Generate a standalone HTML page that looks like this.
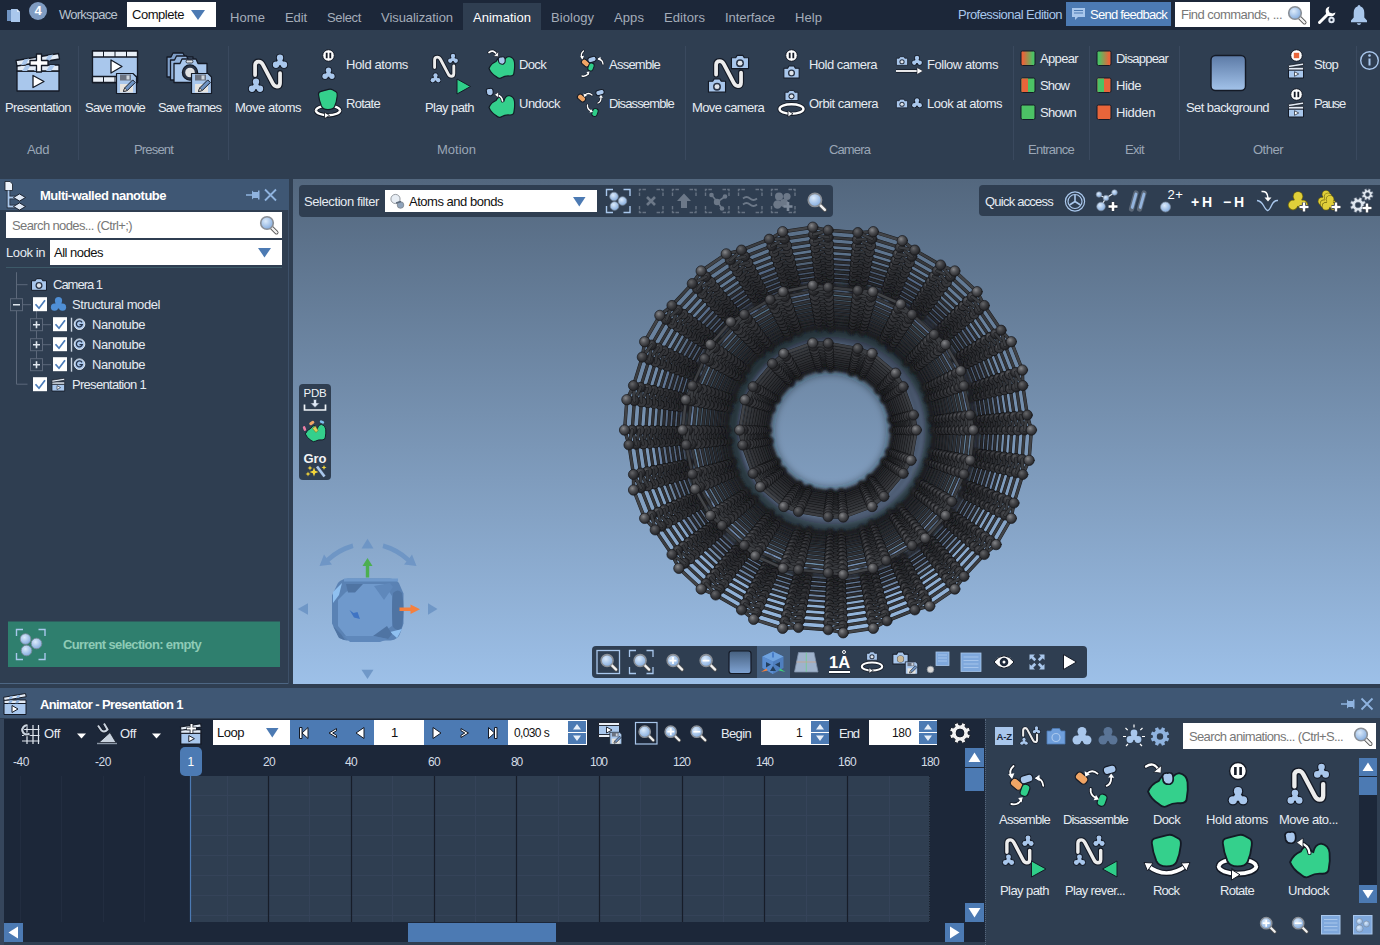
<!DOCTYPE html>
<html>
<head>
<meta charset="utf-8">
<title>SAMSON</title>
<style>
*{box-sizing:border-box;margin:0;padding:0}
html,body{width:1380px;height:945px;overflow:hidden;background:#2f3e51}
body{position:relative;font-family:"Liberation Sans",sans-serif;font-size:13px;color:#e6ebf1;line-height:1}
.a{position:absolute}
.t{position:absolute;white-space:nowrap;line-height:16px;height:16px}
.g{color:#9aa6b6}
.w{background:#fff}
.blk{color:#111}
svg{position:absolute;overflow:visible}
#top{left:0;top:0;width:1380px;height:30px;background:#1c2739}
#ribbon{left:0;top:30px;width:1380px;height:149px;background:#2f3e51}
.sep{position:absolute;width:1px;background:#3a495e;top:46px;height:114px}
#lp{left:0;top:179px;width:289px;height:505px;background:#2f3e51}
#lph{left:0;top:179px;width:289px;height:31px;background:#3f5774}
#vp{left:293px;top:179px;width:1087px;height:505px;background:linear-gradient(#53677e,#9dc0e8)}
.tb{position:absolute;background:#2f3e51;border-radius:4px}
#an{left:0;top:688px;width:1380px;height:257px;background:#2f3e51}
#anh{left:0;top:688px;width:1380px;height:30px;background:#3f5774}
#tl{left:4px;top:718px;width:982px;height:224px;background:#1c2739}
.bl{background:#4c7ab3}
</style>
</head>
<body>
<svg width="0" height="0" style="left:0;top:0">
<defs>
<radialGradient id="lens" cx="40%" cy="35%" r="70%"><stop offset="0" stop-color="#dcebfb"/><stop offset="1" stop-color="#7fa8dc"/></radialGradient>
<linearGradient id="og" x1="0" x2="1" y1="0" y2="0"><stop offset="0.15" stop-color="#e8653a"/><stop offset="0.85" stop-color="#4cc265"/></linearGradient>
<linearGradient id="go" x1="0" x2="1" y1="0" y2="0"><stop offset="0.15" stop-color="#4cc265"/><stop offset="0.85" stop-color="#e8653a"/></linearGradient>
<linearGradient id="bgg" x1="0" x2="0" y1="0" y2="1"><stop offset="0" stop-color="#5c7aa6"/><stop offset="1" stop-color="#a3c3ea"/></linearGradient>
<linearGradient id="bgg2" x1="0" x2="0" y1="0" y2="1"><stop offset="0" stop-color="#46607f"/><stop offset="1" stop-color="#7fa3d3"/></linearGradient>
<g id="mag"><path d="M12.500 12.500L17.500 17.500" stroke="#555" stroke-width="4" stroke-linecap="round"/><path d="M12.500 12.500L17.500 17.500" stroke="#f2f2f2" stroke-width="2.400" stroke-linecap="round"/><circle cx="8" cy="8" r="6.300" fill="url(#lens)" stroke="#8a8f96" stroke-width="1.600"/></g>
<!-- trefoil atoms, centred at 0,0, ~14px -->
<g id="tre"><g fill="#141a26"><circle cx="0" cy="-3.600" r="3.900"/><circle cx="-3.800" cy="3.100" r="3.900"/><circle cx="3.800" cy="3.100" r="3.900"/><circle cx="0" cy="0.900" r="4.300"/></g><g fill="#a9c7ec"><circle cx="0" cy="-3.600" r="3"/><circle cx="-3.800" cy="3.100" r="3"/><circle cx="3.800" cy="3.100" r="3"/><path d="M0 -5l4.800 8.500h-9.600z"/></g></g>
<!-- camera, centred at 0,0, 18x14 -->
<g id="cam"><path d="M-9 -4.500h4.500l1.500 -2.500h6l1.500 2.500H9v11.500h-18z" fill="#a9c7ec" stroke="#141a26" stroke-width="1.200" stroke-linejoin="round"/><circle cx="0" cy="1.200" r="4.200" fill="#2b3547"/><circle cx="0" cy="1.200" r="2.600" fill="#dfe4ea"/></g>
<!-- pause disc centred 0,0 r5.500 -->
<g id="pau"><circle r="5.800" fill="#fff" stroke="#141a26" stroke-width="1"/><path d="M-1.800 -2.800v5.600M1.800 -2.800v5.600" stroke="#141a26" stroke-width="1.800"/></g>
<!-- N path 26x28 origin top-left -->
<g id="np"><path id="npp" d="M2 15V5.500Q2 2 5.500 2Q8 2 9.500 5L19 23Q20.500 26 23 26Q26 26 26 22.500V13" fill="none" stroke="#141a26" stroke-width="5.800" stroke-linecap="round"/><path d="M2 15V5.500Q2 2 5.500 2Q8 2 9.500 5L19 23Q20.500 26 23 26Q26 26 26 22.500V13" fill="none" stroke="#ececec" stroke-width="3.600" stroke-linecap="round"/></g>
<!-- green rotate tooth centred 0,0 : 20w x 21h -->
<g id="tooth"><path d="M-9.500 -5.500Q-9.600 -8 -7 -8.600L0.500 -10.600Q2.800 -11.200 4.500 -10.200L8 -8.200Q9.600 -7.200 9.200 -4Q8.600 2 6.600 6.500Q5.400 9.600 0 9.600Q-5 9.600 -6.600 6Q-9 0 -9.500 -5.500z" fill="#34d08c" stroke="#141a26" stroke-width="1.200"/></g>
<!-- green blob 27x23 origin top-left -->
<g id="blob"><path d="M1 13Q3 8 8 6Q10 2 13 2.500Q14 6 16 6.500Q17 1.500 21 1Q26 2 26.500 7Q27 12 26 17Q26 20.500 22 20.500Q17 20 14 22Q11 24 8 21Q3 18 1 13z" fill="#34d08c" stroke="#141a26" stroke-width="1.200"/></g>
<g id="bb"><path d="M-3 -1.500Q-2.500 -3.500 0 -3.200Q3 -4 3.300 -1Q3.800 2.500 1.500 3.300Q-1.500 3.800 -2.500 1.500z" fill="#a9c7ec" stroke="#141a26" stroke-width="1"/></g>
<!-- small clapper 16x15 origin top-left -->
<g id="clap"><path d="M0.500 6.500h15v8h-15z" fill="#a9c7ec" stroke="#141a26" stroke-width="1"/><path d="M0.500 3.800h15v2.700h-15z" fill="#e4ecf6" stroke="#141a26" stroke-width="0.800"/><path d="M0.300 1.800L15.300 -0.600L15.700 1.800L0.700 4.200z" fill="#e4ecf6" stroke="#141a26" stroke-width="0.800"/><path d="M6.500 8.200l4.200 2.300l-4.200 2.300z" fill="#fff" stroke="#141a26" stroke-width="0.700"/></g>
<!-- floppy 21x21 origin top-left -->
<g id="flop"><path d="M0.500 0.500h16.500l3.500 3.500v16.500h-20z" fill="#a9c7ec" stroke="#141a26" stroke-width="1.200" stroke-linejoin="round"/><rect x="4" y="1.500" width="11" height="6" fill="#6b7280"/><rect x="10.500" y="2.500" width="3" height="4" fill="#cfd6de"/><rect x="4" y="11" width="13" height="8.500" fill="#e7e4df"/><path d="M7.500 18.500l1.200 -3.600l8 -8l2.600 2.600l-8 8z" fill="#6f93c2" stroke="#141a26" stroke-width="1"/><path d="M7.500 18.500l1.200 -3.600l2.500 2.500z" fill="#f1e6d6" stroke="#141a26" stroke-width="0.600"/></g>
<!-- white orbit ring centred 0,0 rx12 ry4.800 -->
<g id="ring"><ellipse rx="12" ry="4.800" fill="none" stroke="#141a26" stroke-width="4.200"/><ellipse rx="12" ry="4.800" fill="none" stroke="#fff" stroke-width="2.400"/><path d="M-3.500 1.600l5 3.200l-5 3.200z" fill="#fff" stroke="#141a26" stroke-width="0.800"/></g>
</defs>
</svg>
<!-- ===== top bar ===== -->
<div class="a" id="top"></div>
<svg style="left:6px;top:7px" width="16" height="16" viewBox="0 0 16 16"><path d="M1 3h4v11H1z" fill="#6f93c2"/><path d="M5 2h6l3 3v10H5z" fill="#a9c7ec"/><path d="M11 2v3h3z" fill="#dbe8f7"/></svg>
<div class="a" style="left:29px;top:2px;width:18px;height:18px;border-radius:9px;background:#7f9cc2"></div>
<span class="t" style="left:34.5px;top:3px;font-weight:bold;color:#fff;">4</span>
<span class="t" style="left:59px;top:7px;letter-spacing:-0.754px;color:#b9c3cf;">Workspace</span>
<div class="a w" style="left:127px;top:2px;width:89px;height:25px"></div>
<span class="t blk" style="left:132px;top:7px;letter-spacing:-0.454px;">Complete</span>
<svg style="left:191px;top:10px" width="14" height="10"><path d="M0 0h14L7 10z" fill="#4c7ab3"/></svg>
<div class="a" style="left:463px;top:3px;width:78px;height:27px;background:#2f3e51"></div>
<span class="t" style="left:230px;top:10px;letter-spacing:0.081px;color:#a4adb9;">Home</span>
<span class="t" style="left:285px;top:10px;letter-spacing:-0.100px;color:#a4adb9;">Edit</span>
<span class="t" style="left:327px;top:10px;letter-spacing:-0.355px;color:#a4adb9;">Select</span>
<span class="t" style="left:381px;top:10px;letter-spacing:-0.057px;color:#a4adb9;">Visualization</span>
<span class="t" style="left:473px;top:10px;letter-spacing:0.022px;color:#fff;">Animation</span>
<span class="t" style="left:551px;top:10px;letter-spacing:0.052px;color:#a4adb9;">Biology</span>
<span class="t" style="left:614px;top:10px;letter-spacing:0.093px;color:#a4adb9;">Apps</span>
<span class="t" style="left:664px;top:10px;letter-spacing:0.077px;color:#a4adb9;">Editors</span>
<span class="t" style="left:725px;top:10px;letter-spacing:-0.065px;color:#a4adb9;">Interface</span>
<span class="t" style="left:795px;top:10px;letter-spacing:0.066px;color:#a4adb9;">Help</span>
<span class="t" style="left:958px;top:7px;letter-spacing:-0.545px;color:#a9c7ec;">Professional Edition</span>
<div class="a bl" style="left:1066px;top:2px;width:105px;height:24px"></div>
<svg style="left:1072px;top:8px" width="14" height="13" viewBox="0 0 14 13"><path d="M0 0h13v9H6l-3 3V9H0z" fill="#a9c7ec"/><path d="M2 2.5h9M2 5h9" stroke="#4c7ab3" stroke-width="1"/></svg>
<span class="t" style="left:1090px;top:7px;letter-spacing:-0.749px;color:#fff;">Send feedback</span>
<div class="a w" style="left:1175px;top:2px;width:135px;height:25px"></div>
<span class="t" style="left:1181px;top:7px;letter-spacing:-0.530px;color:#777;">Find commands, ...</span>
<svg style="left:1287px;top:5px" width="20" height="20" viewBox="0 0 20 20"><use href="#mag"/></svg>
<svg style="left:1317px;top:5px" width="20" height="20" viewBox="0 0 20 20"><path d="M2.5 17.5L10 10" stroke="#fff" stroke-width="3" stroke-linecap="round"/><path d="M12.5 1.5a5 5 0 1 0 6 6l-3 1-3-1-1-3z" fill="#fff"/><circle cx="14.5" cy="15" r="3.2" fill="#dfe7f2"/><circle cx="14.5" cy="15" r="1.2" fill="#1c2739"/></svg>
<svg style="left:1350px;top:4px" width="18" height="22" viewBox="0 0 18 22"><path d="M9 1q1.300 0 1.500 1.500q3.800 1.200 3.800 6.500v4.500l2.700 3v1.800h-16v-1.800l2.700 -3v-4.500q0 -5.300 3.800 -6.500q0.200 -1.500 1.500 -1.500z" fill="#a9c7ec"/><path d="M6.800 19.300a2.300 2.300 0 0 0 4.400 0z" fill="#a9c7ec"/></svg>
<!-- ===== ribbon ===== -->
<div class="a" id="ribbon"></div>
<div class="sep" style="left:78px"></div><div class="sep" style="left:228px"></div><div class="sep" style="left:685px"></div><div class="sep" style="left:1013px"></div><div class="sep" style="left:1089px"></div><div class="sep" style="left:1179px"></div><div class="sep" style="left:1356px"></div>
<svg style="left:0;top:0" width="1380" height="180" viewBox="0 0 1380 180">
<!-- Presentation -->
<g stroke="#141a26" stroke-width="1.300" stroke-linejoin="round">
<path d="M17 71h42v20H17z" fill="#a9c7ec"/>
<path d="M17 65h42v6H17z" fill="#e4ecf6"/><path d="M22 71l4-6h5l-4 6zM34 71l4-6h5l-4 6zM46 71l4-6h5l-4 6z" fill="#a9c7ec" stroke="none"/>
<path d="M16 60.500L58.500 53.500L59.500 59L17 66z" fill="#e4ecf6"/><path d="M21 65.200l3-5.800l5-0.800l-3 5.800zM33 63.200l3-5.800l5-0.800l-3 5.800zM45 61.200l3-5.800l5-0.800l-3 5.800z" fill="#a9c7ec" stroke="none"/>
<path d="M33 75.500l11 6l-11 6z" fill="#fff"/>
<path d="M36.500 54h5v6.500H48v5h-6.500V72h-5v-6.500H30v-5h6.500z" fill="#fff"/>
</g>
<!-- Save movie -->
<g stroke="#141a26" stroke-width="1.300" stroke-linejoin="round">
<path d="M92.500 51h45v31.500h-45z" fill="#a9c7ec"/>
<path d="M92.500 51h45v6h-45zM92.500 76.500h45v6h-45z" fill="#e9eff7"/>
<path d="M103.500 51v6M115 51v6M126.500 51v6M103.500 76.500v6M115 76.500v6" stroke-width="1"/>
<path d="M111 60l11 6.500l-11 6.500z" fill="#fff"/>
</g>
<use href="#flop" x="116" y="73"/>
<!-- Save frames -->
<g stroke="#141a26" stroke-width="1.300" stroke-linejoin="round">
<path d="M167 57h4l2-4h10l2 4h8v20h-26z" fill="#7f9fc9"/>
<path d="M170.500 60h4l2-4h10l2 4h8v20h-26z" fill="#93b3dc"/>
<path d="M174 63.500h6l2-4.500h14l2 4.500h9v19h-33z" fill="#a9c7ec"/>
<rect x="186" y="60" width="7" height="3" rx="1.500" fill="#dfe4ea" stroke-width="0.800"/>
<circle cx="190" cy="72.500" r="7.600" fill="#2b3547"/><circle cx="190" cy="72.500" r="4.800" fill="#dfe0e2" stroke="none"/>
</g>
<use href="#flop" x="191" y="73"/>
<!-- Move atoms -->
<use href="#np" transform="translate(253,59.500) scale(1.04)"/>
<use href="#tre" transform="translate(280,61.500) scale(1.050)"/>
<use href="#tre" transform="translate(256,85.500) scale(1.050)"/>
<!-- Hold atoms -->
<use href="#pau" transform="translate(328.500,55.500)"/>
<use href="#tre" transform="translate(328.500,73.500) scale(0.900)"/>
<!-- Rotate -->
<use href="#ring" transform="translate(328,110.500)"/>
<use href="#tooth" transform="translate(328,100)"/>
<path d="M316 110.500a12 4.800 0 0 0 24 0" fill="none" stroke="#141a26" stroke-width="4.200"/><path d="M315.800 110.300a12 4.800 0 0 0 24.400 0" fill="none" stroke="#fff" stroke-width="2.400"/><path d="M324.500 112.200l5 3.200l-5 3.200z" fill="#fff" stroke="#141a26" stroke-width="0.800"/>
<!-- Play path -->
<use href="#np" transform="translate(433,55.500) scale(0.800)"/>
<use href="#tre" transform="translate(453,58.500) scale(0.720)"/>
<use href="#tre" transform="translate(435.500,78) scale(0.720)"/>
<path d="M457 79l13.500 7.500l-13.500 7.500z" fill="#2fce89" stroke="#141a26" stroke-width="1"/>
<!-- Dock -->
<use href="#blob" x="488" y="55.500"/>
<use href="#bb" transform="translate(501.500,60.500) scale(1.100)"/>
<path d="M489 52.500q5-3.500 8 2.500" fill="none" stroke="#141a26" stroke-width="3.200" stroke-linecap="round"/><path d="M489 52.500q5-3.500 8 2.500" fill="none" stroke="#fff" stroke-width="1.700" stroke-linecap="round"/><path d="M493.500 56l4.800 0.800l0.300-5z" fill="#fff" stroke="#141a26" stroke-width="0.600"/>
<!-- Undock -->
<use href="#blob" x="488" y="94.500"/>
<use href="#bb" transform="translate(489.500,92) scale(1.100)"/>
<path d="M502.500 101q-0.500-5-5.500-6" fill="none" stroke="#141a26" stroke-width="3.200" stroke-linecap="round"/><path d="M502.500 101q-0.500-5-5.500-6" fill="none" stroke="#fff" stroke-width="1.700" stroke-linecap="round"/><path d="M498.500 92l-4 2.800l4 3z" fill="#fff" stroke="#141a26" stroke-width="0.600"/>
<!-- Assemble -->
<g stroke="#141a26" stroke-width="1">
<rect x="-4.300" y="-2.800" width="8.600" height="5.600" rx="2.400" fill="#f0a565" transform="translate(585.500,63) rotate(40)"/>
<rect x="-4.200" y="-2.600" width="8.400" height="5.200" rx="2.400" fill="#a9c7ec" transform="translate(592,59.500) rotate(-18)"/>
<rect x="-4" y="-2.700" width="8" height="5.400" rx="2.400" fill="#2fce89" transform="translate(591,67) rotate(-70)"/>
</g>
<g fill="none" stroke-linecap="round"><g stroke="#141a26" stroke-width="2.600"><path d="M583.500 51q-3.500 3-1.500 7"/><path d="M598.500 59q4 0.500 4.500 5"/><path d="M582 76q4 1 6.500-2.500"/></g><g stroke="#fff" stroke-width="1.300"><path d="M583.500 51q-3.500 3-1.500 7"/><path d="M598.500 59q4 0.500 4.500 5"/><path d="M582 76q4 1 6.500-2.500"/></g></g>
<g fill="#fff"><path d="M580 56.500l2.500 3l1.500-3.800z"/><path d="M600.500 56.800l-3 2.200l3.200 2z"/><path d="M586.500 72l3-0.500l-0.800 3.500z"/></g>
<!-- Disassemble -->
<g stroke="#141a26" stroke-width="1">
<rect x="-4.300" y="-2.800" width="8.600" height="5.600" rx="2.400" fill="#f0a565" transform="translate(581.500,98) rotate(40)"/>
<rect x="-4.200" y="-2.600" width="8.400" height="5.200" rx="2.400" fill="#a9c7ec" transform="translate(600,92.500) rotate(-15)"/>
<rect x="-4" y="-2.700" width="8" height="5.400" rx="2.400" fill="#2fce89" transform="translate(595,112.500) rotate(-70)"/>
</g>
<g fill="none" stroke-linecap="round"><g stroke="#141a26" stroke-width="2.600"><path d="M592 95q-3.500-3-7 0"/><path d="M598 103q3-1 3-5.500"/><path d="M587.500 105q-0.500 4 3.500 6"/></g><g stroke="#fff" stroke-width="1.300"><path d="M592 95q-3.500-3-7 0"/><path d="M598 103q3-1 3-5.500"/><path d="M587.500 105q-0.500 4 3.500 6"/></g></g>
<g fill="#fff"><path d="M583.500 93.500l0.500 3.500l3-1.500z"/><path d="M599 97.500l2-2.500l2 2.800z"/><path d="M589.500 112.500l3.500-0.500l-2-3z"/></g>
<!-- Move camera -->
<use href="#np" transform="translate(714,59) scale(1.04)"/>
<use href="#cam" transform="translate(740,62) scale(0.950)"/>
<use href="#cam" transform="translate(717,85.500) scale(0.950)"/>
<!-- Hold camera -->
<use href="#pau" transform="translate(791.500,55.500)"/>
<use href="#cam" transform="translate(791.500,72) scale(0.850)"/>
<!-- Orbit camera -->
<use href="#cam" transform="translate(791.500,95.500) scale(0.720)"/>
<use href="#ring" transform="translate(791.500,109)"/>
<!-- Follow atoms -->
<use href="#cam" transform="translate(902,61) scale(0.620)"/>
<use href="#tre" transform="translate(917,60.500) scale(0.720)"/>
<path d="M896 71h22" stroke="#141a26" stroke-width="3.400"/><path d="M896 71h22" stroke="#fff" stroke-width="1.800"/><path d="M917 67.500l6 3.500l-6 3.500z" fill="#fff" stroke="#141a26" stroke-width="0.600"/>
<!-- Look at atoms -->
<use href="#cam" transform="translate(902,103.500) scale(0.620)"/>
<use href="#tre" transform="translate(917,103) scale(0.720)"/>
<!-- Entrance / Exit -->
<g stroke="#141a26" stroke-width="1">
<rect x="1021" y="51" width="14" height="14.500" rx="1.500" fill="url(#og)"/>
<rect x="1021" y="78" width="14" height="14.500" rx="1.500" fill="#4cc265"/><path d="M1021.500 78.500h6.500v13.500h-6.500z" fill="#e8653a" stroke="none"/>
<rect x="1021" y="105" width="14" height="14.500" rx="1.500" fill="#4cc265"/>
<rect x="1097" y="51" width="14" height="14.500" rx="1.500" fill="url(#go)"/>
<rect x="1097" y="78" width="14" height="14.500" rx="1.500" fill="#e8653a"/><path d="M1097.500 78.500h6.500v13.500h-6.500z" fill="#4cc265" stroke="none"/>
<rect x="1097" y="105" width="14" height="14.500" rx="1.500" fill="#e8653a"/>
</g>
<!-- Set background -->
<rect x="1211" y="55.500" width="34.500" height="35" rx="4.500" fill="url(#bgg)" stroke="#141a26" stroke-width="1.400"/>
<!-- Stop / Pause -->
<circle cx="1296.500" cy="55.500" r="5.800" fill="#fff" stroke="#141a26"/><rect x="1293.800" y="52.800" width="5.400" height="5.400" fill="#e8653a"/>
<use href="#clap" x="1288" y="63.500"/>
<use href="#pau" transform="translate(1296.500,94.500)"/>
<use href="#clap" x="1288" y="102.500"/>
<!-- info -->
<circle cx="1369.500" cy="60.500" r="8.800" fill="none" stroke="#a9c7ec" stroke-width="1.400"/><path d="M1369.500 58.500v7" stroke="#a9c7ec" stroke-width="2"/><circle cx="1369.500" cy="55.500" r="1.300" fill="#a9c7ec"/>
</svg>
<span class="t" style="left:5px;top:100px;letter-spacing:-0.583px;">Presentation</span>
<span class="t" style="left:85px;top:100px;letter-spacing:-0.792px;">Save movie</span>
<span class="t" style="left:158px;top:100px;letter-spacing:-0.907px;">Save frames</span>
<span class="t" style="left:235px;top:100px;letter-spacing:-0.480px;">Move atoms</span>
<span class="t" style="left:346px;top:57px;letter-spacing:-0.375px;">Hold atoms</span>
<span class="t" style="left:346px;top:96px;letter-spacing:-0.717px;">Rotate</span>
<span class="t" style="left:425px;top:100px;letter-spacing:-0.578px;">Play path</span>
<span class="t" style="left:519px;top:57px;letter-spacing:-0.654px;">Dock</span>
<span class="t" style="left:519px;top:96px;letter-spacing:-0.513px;">Undock</span>
<span class="t" style="left:609px;top:57px;letter-spacing:-0.760px;">Assemble</span>
<span class="t" style="left:609px;top:96px;letter-spacing:-0.856px;">Disassemble</span>
<span class="t" style="left:692px;top:100px;letter-spacing:-0.614px;">Move camera</span>
<span class="t" style="left:809px;top:57px;letter-spacing:-0.518px;">Hold camera</span>
<span class="t" style="left:809px;top:96px;letter-spacing:-0.511px;">Orbit camera</span>
<span class="t" style="left:927px;top:57px;letter-spacing:-0.465px;">Follow atoms</span>
<span class="t" style="left:927px;top:96px;letter-spacing:-0.512px;">Look at atoms</span>
<span class="t" style="left:1040px;top:51px;letter-spacing:-0.653px;">Appear</span>
<span class="t" style="left:1040px;top:78px;letter-spacing:-0.879px;">Show</span>
<span class="t" style="left:1040px;top:105px;letter-spacing:-0.749px;">Shown</span>
<span class="t" style="left:1116px;top:51px;letter-spacing:-0.806px;">Disappear</span>
<span class="t" style="left:1116px;top:78px;letter-spacing:-0.434px;">Hide</span>
<span class="t" style="left:1116px;top:105px;letter-spacing:-0.366px;">Hidden</span>
<span class="t" style="left:1186px;top:100px;letter-spacing:-0.576px;">Set background</span>
<span class="t" style="left:1314px;top:57px;letter-spacing:-0.686px;">Stop</span>
<span class="t" style="left:1314px;top:96px;letter-spacing:-1.172px;">Pause</span>
<span class="t g" style="left:27px;top:142px;letter-spacing:-0.377px;">Add</span>
<span class="t g" style="left:134px;top:142px;letter-spacing:-0.829px;">Present</span>
<span class="t g" style="left:437px;top:142px;letter-spacing:-0.003px;">Motion</span>
<span class="t g" style="left:829px;top:142px;letter-spacing:-0.873px;">Camera</span>
<span class="t g" style="left:1028px;top:142px;letter-spacing:-0.754px;">Entrance</span>
<span class="t g" style="left:1125px;top:142px;letter-spacing:-0.668px;">Exit</span>
<span class="t g" style="left:1253px;top:142px;letter-spacing:-0.503px;">Other</span>
<!-- ===== left panel ===== -->
<div class="a" id="lp"></div>
<div class="a" id="lph"></div>
<div class="a" style="left:0;top:683px;width:289px;height:1px;background:#4d6683"></div>
<div class="a" style="left:289px;top:179px;width:4px;height:509px;background:#2f3e51"></div>
<div class="a" style="left:288px;top:210px;width:1px;height:474px;background:#3d5068"></div>
<span class="t" style="left:40px;top:188px;font-weight:bold;letter-spacing:-0.500px;color:#fff;">Multi-walled nanotube</span>
<div class="a w" style="left:6px;top:212px;width:276px;height:26px"></div>
<span class="t" style="left:12px;top:218px;letter-spacing:-0.615px;color:#777;">Search nodes... (Ctrl+;)</span>
<span class="t" style="left:6px;top:245px;letter-spacing:-0.417px;">Look in</span>
<div class="a w" style="left:50px;top:240px;width:232px;height:25px"></div>
<span class="t blk" style="left:54px;top:245px;letter-spacing:-0.497px;">All nodes</span>
<div class="a" style="left:6px;top:267px;width:276px;height:1px;background:#3d5a68"></div>
<svg style="left:0;top:0" width="293" height="690" viewBox="0 0 293 690">
<!-- header icon -->
<path d="M5 181.500h5l2.500 2.500v6.500H5z" fill="#eef3fa" stroke="#141a26" stroke-width="0.800"/>
<path d="M8.500 190.500v16h7M8.500 197.500h7" fill="none" stroke="#141a26" stroke-width="3.400"/><path d="M8.500 190.500v16h7M8.500 197.500h7" fill="none" stroke="#a9c7ec" stroke-width="2"/>
<path d="M13.500 197.500l6 -3.600l6 3.600l-6 3.600zM13.500 206.500l6 -3.600l6 3.600l-6 3.600z" fill="#dfe9f6" stroke="#141a26" stroke-width="0.900"/>
<!-- pin + close -->
<path d="M246 195h6" stroke="#8fb3df" stroke-width="1.500"/><path d="M252 190.500l1.500 1.500h4.500v-1.500h1.500v9h-1.500v-1.500h-4.500l-1.500 1.500z" fill="#8fb3df"/>
<path d="M265 189.500l11 11M276 189.500l-11 11" stroke="#8fb3df" stroke-width="1.800"/>
<use href="#mag" transform="translate(259,215) scale(1)"/>
<path d="M258 248h13l-6.500 9.500z" fill="#4c7ab3"/>
<g transform="translate(0,-0.8)"><!-- tree lines -->
<g stroke="#5c687a" stroke-width="1" fill="none"><path d="M16.500 273v112h11M16.500 285.500h11M22 305.500h9M36.500 311v54M43 325.500h8M43 345.500h8M43 365.500h8"/></g>
<g fill="#2f3e51" stroke="#5c687a" stroke-width="1"><rect x="10.500" y="299.500" width="12" height="12"/><rect x="30.500" y="319.500" width="12" height="12"/><rect x="30.500" y="339.500" width="12" height="12"/><rect x="30.500" y="359.500" width="12" height="12"/></g>
<g stroke="#dfe6ee" stroke-width="1.600"><path d="M13 305.500h7M33 325.500h7M36.500 322v7M33 345.500h7M36.500 342v7M33 365.500h7M36.500 362v7"/></g>
<!-- camera -->
<use href="#cam" transform="translate(39,285.300) scale(0.830)"/>
<!-- checkboxes -->
<g id="cbs"><g fill="#fff"><rect x="33" y="298" width="14" height="14"/><rect x="53" y="318" width="14" height="14"/><rect x="53" y="338" width="14" height="14"/><rect x="53" y="358" width="14" height="14"/><rect x="33" y="378" width="14" height="14"/></g>
<g fill="none" stroke="#4a7cba" stroke-width="1.700"><path d="M35.500 305l3.500 4l6-8"/><path d="M55.500 325l3.500 4l6-8"/><path d="M55.500 345l3.500 4l6-8"/><path d="M55.500 365l3.500 4l6-8"/><path d="M35.500 385l3.500 4l6-8"/></g></g>
<!-- structural model trefoil -->
<g fill="#4f8fd6"><circle cx="58.500" cy="301.500" r="3.600"/><circle cx="54.500" cy="308" r="3.600"/><circle cx="62.500" cy="308" r="3.600"/><circle cx="58.500" cy="306" r="3.400"/></g>
<!-- nanotube G icons -->
<g id="gi"><path d="M71.500 318.500v14" stroke="#c9d3df" stroke-width="1.400"/><circle cx="79.500" cy="325" r="5.300" fill="#a9c7ec" stroke="#dfe6ee" stroke-width="1"/><path d="M82 323.200a3 3 0 1 0 0.300 2.300h-2.800" fill="none" stroke="#24324a" stroke-width="1.300"/></g>
<use href="#gi" y="20"/><use href="#gi" y="40"/>
<use href="#clap" transform="translate(51.500,379.500) scale(0.850)"/>
</g><!-- selection box -->
<rect x="8" y="621.500" width="272" height="45.500" fill="#2f7f6e"/>
<g fill="none" stroke="#a9c7ec" stroke-width="1.400"><path d="M16.500 636v-6.500h6.500M38.500 629.500h6.500v6.500M45 653v6.500h-6.500M23 659.500h-6.500v-6.500"/></g>
<g stroke="#7d8a99" stroke-width="0.800"><circle cx="25.500" cy="639" r="5.300" fill="url(#lens)"/><circle cx="36.500" cy="643.500" r="5.300" fill="url(#lens)"/><circle cx="26.500" cy="650.500" r="5.300" fill="url(#lens)"/></g>
</svg>
<span class="t" style="left:53px;top:277px;letter-spacing:-1.010px;">Camera 1</span>
<span class="t" style="left:72px;top:297px;letter-spacing:-0.416px;">Structural model</span>
<span class="t" style="left:92px;top:317px;letter-spacing:-0.422px;">Nanotube</span>
<span class="t" style="left:92px;top:337px;letter-spacing:-0.422px;">Nanotube</span>
<span class="t" style="left:92px;top:357px;letter-spacing:-0.422px;">Nanotube</span>
<span class="t" style="left:72px;top:377px;letter-spacing:-0.702px;">Presentation 1</span>
<span class="t" style="left:63px;top:637px;font-weight:bold;letter-spacing:-0.631px;color:#8ecbb6;">Current selection: empty</span>
<!-- ===== viewport ===== -->
<div class="a" id="vp"></div>
<div class="a" style="left:293px;top:684px;width:1087px;height:4px;background:#2f3e51"></div>
<svg style="left:0;top:0" width="1380" height="945" viewBox="0 0 1380 945">
<defs><filter id="bl1" x="-5%" y="-5%" width="110%" height="110%"><feGaussianBlur stdDeviation="0.45"/></filter><filter id="bl2" x="-5%" y="-5%" width="110%" height="110%"><feGaussianBlur stdDeviation="1.1"/></filter><filter id="bl4" x="-10%" y="-10%" width="120%" height="120%"><feGaussianBlur stdDeviation="2.600"/></filter><filter id="bl3" x="-10%" y="-10%" width="120%" height="120%"><feGaussianBlur stdDeviation="4"/></filter>
<radialGradient id="s0" cx="38%" cy="34%" r="68%"><stop offset="0" stop-color="#86878a"/><stop offset="0.45" stop-color="#505155"/><stop offset="1" stop-color="#242528"/></radialGradient>
<radialGradient id="s1" cx="38%" cy="34%" r="68%"><stop offset="0" stop-color="#66676a"/><stop offset="0.45" stop-color="#404145"/><stop offset="1" stop-color="#1f2023"/></radialGradient>
<radialGradient id="s2" cx="38%" cy="34%" r="68%"><stop offset="0" stop-color="#4f5054"/><stop offset="0.45" stop-color="#36373b"/><stop offset="1" stop-color="#1b1c1f"/></radialGradient>
</defs>
<g filter="url(#bl3)" fill="none"><circle cx="830.5" cy="430.5" r="66" stroke="#161a22" stroke-opacity="0.6" stroke-width="16"/><circle cx="829.5" cy="430.0" r="118" stroke="#191c25" stroke-opacity="0.6" stroke-width="30"/><circle cx="829.0" cy="430.0" r="156" stroke="#1c2029" stroke-opacity="0.38" stroke-width="28"/></g>
<g filter="url(#bl4)" fill="none"><circle cx="830.5" cy="430.5" r="101" stroke="#14171e" stroke-opacity="0.72" stroke-width="15"/><circle cx="828.0" cy="430.0" r="90" stroke="#14171e" stroke-opacity="0.5" stroke-width="9"/></g>
<g filter="url(#bl2)" fill="none" stroke-linecap="round"><defs><path id="b23" d="M969.4 462.1L963.2 482.5M941.9 519.3L927.4 534.9M892.4 558.8L872.5 566.6M830.5 572.9L809.3 571.3M768.7 558.8L750.3 548.2M719.2 519.3L707.2 501.7M691.7 462.1L688.5 441.1M691.7 398.7L697.9 378.4M719.2 341.6L733.7 326M768.7 302.1L788.6 294.3M830.5 288L851.8 289.6M892.4 302.1L910.8 312.7M941.9 341.6L953.9 359.2M969.4 398.7L972.6 419.8M927.4 461.9L918.7 481.4M890.4 512.8L872 523.5M830.5 532.3L809.4 530.1M770.7 512.8L754.9 498.6M733.7 461.9L729.3 441.1M733.7 399L742.4 379.5M770.7 348.1L789.1 337.4M830.5 328.6L851.7 330.8M890.4 348.1L906.2 362.3M927.4 399L931.8 419.8M884.1 461.4L870.3 477.8M830.5 492.3L809.4 488.6M777 461.4L769.6 441.2M777 399.5L790.8 383.1M830.5 368.6L851.7 372.3M884.1 399.5L891.5 419.7"/></defs><use href="#b23" stroke="#101113" stroke-width="2.9"/><use href="#b23" stroke="#212226" stroke-width="2"/><defs><path id="a23" d="M969.4 462.1h0M963.2 482.5h0M941.9 519.3h0M927.4 534.9h0M892.4 558.8h0M872.5 566.6h0M830.5 572.9h0M809.3 571.3h0M768.7 558.8h0M750.3 548.2h0M719.2 519.3h0M707.2 501.7h0M691.7 462.1h0M688.5 441.1h0M691.7 398.7h0M697.9 378.4h0M719.2 341.6h0M733.7 326h0M768.7 302.1h0M788.6 294.3h0M830.5 288h0M851.8 289.6h0M892.4 302.1h0M910.8 312.7h0M941.9 341.6h0M953.9 359.2h0M969.4 398.7h0M972.6 419.8h0M927.4 461.9h0M918.7 481.4h0M890.4 512.8h0M872 523.5h0M830.5 532.3h0M809.4 530.1h0M770.7 512.8h0M754.9 498.6h0M733.7 461.9h0M729.3 441.1h0M733.7 399h0M742.4 379.5h0M770.7 348.1h0M789.1 337.4h0M830.5 328.6h0M851.7 330.8h0M890.4 348.1h0M906.2 362.3h0M927.4 399h0M931.8 419.8h0M884.1 461.4h0M870.3 477.8h0M830.5 492.3h0M809.4 488.6h0M777 461.4h0M769.6 441.2h0M777 399.5h0M790.8 383.1h0M830.5 368.6h0M851.7 372.3h0M884.1 399.5h0M891.5 419.7h0"/></defs><use href="#a23" stroke="#0f1012" stroke-width="8.3"/><use href="#a23" stroke="#232428" stroke-width="6.9"/><use href="#a23" stroke="#2e2f33" stroke-width="2.9" transform="translate(-1 -1.1)"/>
<defs><path id="b22" d="M878.5 390.2L884.1 399.5M861.8 376.2L851.7 372.3M819.6 368.7L830.5 368.6M799.1 376.2L790.8 383.1M771.6 409L777 399.5M767.8 430.4L769.6 441.2M782.5 470.7L777 461.4M799.1 484.7L809.4 488.6M841.3 492.1L830.5 492.3M861.8 484.7L870.3 477.8M889.3 451.9L884.1 461.4M893.1 430.4L891.5 419.7M924.7 388.5L927.4 399M913.9 369.8L906.2 362.3M882.1 341.1L890.4 348.1M862.4 332.3L851.7 330.8M819.7 327.8L830.5 328.6M798.6 332.3L789.1 337.4M761.4 353.8L770.7 348.1M747 369.8L742.4 379.5M729.5 409L733.7 399M727.3 430.4L729.3 441.1M736.2 472.4L733.7 461.9M747 491.1L754.9 498.6M778.9 519.8L770.7 512.8M798.6 528.6L809.4 530.1M841.3 533L830.5 532.3M862.4 528.6L872 523.5M899.5 507.1L890.4 512.8M913.9 491.1L918.7 481.4M931.4 451.9L927.4 461.9M933.6 430.4L931.8 419.8M968.4 387.9L969.4 398.7M960.5 367.8L953.9 359.2M936.3 332.3L941.9 341.6M920.5 317.6L910.8 312.7M883.2 296.1L892.4 302.1M862.6 289.7L851.8 289.6M819.7 286.5L830.5 288M798.4 289.7L788.6 294.3M758.3 305.4L768.7 302.1M740.5 317.6L733.7 326M711.2 349.1L719.2 341.6M700.4 367.8L697.9 378.4M687.7 408.9L691.7 398.7M686.1 430.4L688.5 441.1M692.5 473L691.7 462.1M700.4 493.1L707.2 501.7M724.7 528.6L719.2 519.3M740.5 543.3L750.3 548.2M777.7 564.8L768.7 558.8M798.4 571.2L809.3 571.3M841.3 574.4L830.5 572.9M862.6 571.2L872.5 566.6M902.6 555.4L892.4 558.8M920.5 543.3L927.4 534.9M949.7 511.7L941.9 519.3M960.5 493.1L963.2 482.5M973.2 451.9L969.4 462.1M974.8 430.4L972.6 419.8M974.8 430.4L973.2 451.9M960.5 493.1L949.7 511.7M920.5 543.3L902.6 555.4M862.6 571.2L841.3 574.4M798.4 571.2L777.7 564.8M740.5 543.3L724.7 528.6M700.4 493.1L692.5 473M686.1 430.4L687.7 408.9M700.4 367.8L711.2 349.1M740.5 317.6L758.3 305.4M798.4 289.7L819.7 286.5M862.6 289.7L883.2 296.1M920.5 317.6L936.3 332.3M960.5 367.8L968.4 387.9M933.6 430.4L931.4 451.9M913.9 491.1L899.5 507.1M862.4 528.6L841.3 533M798.6 528.6L778.9 519.8M747 491.1L736.2 472.4M727.3 430.4L729.5 409M747 369.8L761.4 353.8M798.6 332.3L819.7 327.8M862.4 332.3L882.1 341.1M913.9 369.8L924.7 388.5M893.1 430.4L889.3 451.9M861.8 484.7L841.3 492.1M799.1 484.7L782.5 470.7M767.8 430.4L771.6 409M799.1 376.2L819.6 368.7M861.8 376.2L878.5 390.2"/></defs><use href="#b22" stroke="#101113" stroke-width="2.9"/><use href="#b22" stroke="#222327" stroke-width="2"/><defs><path id="a22" d="M974.8 430.4h0M973.2 451.9h0M960.5 493.1h0M949.7 511.7h0M920.5 543.3h0M902.6 555.4h0M862.6 571.2h0M841.3 574.4h0M798.4 571.2h0M777.7 564.8h0M740.5 543.3h0M724.7 528.6h0M700.4 493.1h0M692.5 473h0M686.1 430.4h0M687.7 408.9h0M700.4 367.8h0M711.2 349.1h0M740.5 317.6h0M758.3 305.4h0M798.4 289.7h0M819.7 286.5h0M862.6 289.7h0M883.2 296.1h0M920.5 317.6h0M936.3 332.3h0M960.5 367.8h0M968.4 387.9h0M933.6 430.4h0M931.4 451.9h0M913.9 491.1h0M899.5 507.1h0M862.4 528.6h0M841.3 533h0M798.6 528.6h0M778.9 519.8h0M747 491.1h0M736.2 472.4h0M727.3 430.4h0M729.5 409h0M747 369.8h0M761.4 353.8h0M798.6 332.3h0M819.7 327.8h0M862.4 332.3h0M882.1 341.1h0M913.9 369.8h0M924.7 388.5h0M893.1 430.4h0M889.3 451.9h0M861.8 484.7h0M841.3 492.1h0M799.1 484.7h0M782.5 470.7h0M767.8 430.4h0M771.6 409h0M799.1 376.2h0M819.6 368.7h0M861.8 376.2h0M878.5 390.2h0"/></defs><use href="#a22" stroke="#0f1012" stroke-width="8.4"/><use href="#a22" stroke="#242529" stroke-width="7"/><use href="#a22" stroke="#2f3034" stroke-width="3" transform="translate(-1 -1.1)"/>
<defs><path id="b21" d="M892.9 419.4L893.1 430.4M885.4 398.7L878.5 390.2M852.1 370.8L861.8 376.2M830.4 366.9L819.6 368.7M789.6 381.8L799.1 376.2M775.4 398.7L771.6 409M767.9 441.4L767.8 430.4M775.4 462.2L782.5 470.7M808.7 490.1L799.1 484.7M830.4 493.9L841.3 492.1M871.2 479.1L861.8 484.7M885.4 462.2L889.3 451.9M934.4 419.5L933.6 430.4M929.8 398.1L924.7 388.5M908.1 360.5L913.9 369.8M891.8 345.8L882.1 341.1M852.1 328.1L862.4 332.3M830.4 325.9L819.7 327.8M787.9 334.9L798.6 332.3M768.9 345.8L761.4 353.8M739.8 378.1L747 369.8M730.9 398.1L729.5 409M726.4 441.4L727.3 430.4M730.9 462.7L736.2 472.4M752.7 500.4L747 491.1M768.9 515L778.9 519.8M808.6 532.7L798.6 528.6M830.4 535L841.3 533M872.9 525.9L862.4 528.6M891.8 515L899.5 507.1M920.9 482.7L913.9 491.1M929.8 462.7L931.4 451.9M976.2 419.5L974.8 430.4M973 397.9L968.4 387.9M957.1 357.3L960.5 367.8M944.7 339.2L936.3 332.3M912.8 309.6L920.5 317.6M893.9 298.6L883.2 296.1M852.2 285.8L862.6 289.7M830.4 284.2L819.7 286.5M787.3 290.7L798.4 289.7M766.9 298.6L758.3 305.4M730.9 323.2L740.5 317.6M716 339.2L711.2 349.1M694.2 377L700.4 367.8M687.8 397.9L687.7 408.9M684.5 441.4L686.1 430.4M687.8 463L692.5 473M703.7 503.6L700.4 493.1M716 521.6L724.7 528.6M748 551.3L740.5 543.3M766.9 562.2L777.7 564.8M808.6 575.1L798.4 571.2M830.4 576.7L841.3 574.4M873.5 570.2L862.6 571.2M893.9 562.2L902.6 555.4M929.9 537.6L920.5 543.3M944.7 521.6L949.7 511.7M966.5 483.9L960.5 493.1M973 463L973.2 451.9M973 463L966.5 483.9M944.7 521.6L929.9 537.6M893.9 562.2L873.5 570.2M830.4 576.7L808.6 575.1M766.9 562.2L748 551.3M716 521.6L703.7 503.6M687.8 463L684.5 441.4M687.8 397.9L694.2 377M716 339.2L730.9 323.2M766.9 298.6L787.3 290.7M830.4 284.2L852.2 285.8M893.9 298.6L912.8 309.6M944.7 339.2L957.1 357.3M973 397.9L976.2 419.5M929.8 462.7L920.9 482.7M891.8 515L872.9 525.9M830.4 535L808.6 532.7M768.9 515L752.7 500.4M730.9 462.7L726.4 441.4M730.9 398.1L739.8 378.1M768.9 345.8L787.9 334.9M830.4 325.9L852.1 328.1M891.8 345.8L908.1 360.5M929.8 398.1L934.4 419.5M885.4 462.2L871.2 479.1M830.4 493.9L808.7 490.1M775.4 462.2L767.9 441.4M775.4 398.7L789.6 381.8M830.4 366.9L852.1 370.8M885.4 398.7L892.9 419.4"/></defs><use href="#b21" stroke="#101114" stroke-width="3"/><use href="#b21" stroke="#222428" stroke-width="2.1"/><defs><path id="a21" d="M973 463h0M966.5 483.9h0M944.7 521.6h0M929.9 537.6h0M893.9 562.2h0M873.5 570.2h0M830.4 576.7h0M808.6 575.1h0M766.9 562.2h0M748 551.3h0M716 521.6h0M703.7 503.6h0M687.8 463h0M684.5 441.4h0M687.8 397.9h0M694.2 377h0M716 339.2h0M730.9 323.2h0M766.9 298.6h0M787.3 290.7h0M830.4 284.2h0M852.2 285.8h0M893.9 298.6h0M912.8 309.6h0M944.7 339.2h0M957.1 357.3h0M973 397.9h0M976.2 419.5h0M929.8 462.7h0M920.9 482.7h0M891.8 515h0M872.9 525.9h0M830.4 535h0M808.6 532.7h0M768.9 515h0M752.7 500.4h0M730.9 462.7h0M726.4 441.4h0M730.9 398.1h0M739.8 378.1h0M768.9 345.8h0M787.9 334.9h0M830.4 325.9h0M852.1 328.1h0M891.8 345.8h0M908.1 360.5h0M929.8 398.1h0M934.4 419.5h0M885.4 462.2h0M871.2 479.1h0M830.4 493.9h0M808.7 490.1h0M775.4 462.2h0M767.9 441.4h0M775.4 398.7h0M789.6 381.8h0M830.4 366.9h0M852.1 370.8h0M885.4 398.7h0M892.9 419.4h0"/></defs><use href="#a21" stroke="#0f1012" stroke-width="8.5"/><use href="#a21" stroke="#25262a" stroke-width="7.1"/><use href="#a21" stroke="#313236" stroke-width="3" transform="translate(-1 -1.1)"/>
<defs><path id="b20" d="M879.6 389L885.4 398.7M862.5 374.7L852.1 370.8M819.1 367L830.4 366.9M798.1 374.7L789.6 381.8M769.8 408.4L775.4 398.7M765.9 430.4L767.9 441.4M781 471.8L775.4 462.2M798.1 486.1L808.7 490.1M841.5 493.8L830.4 493.9M862.5 486.1L871.2 479.1M890.8 452.4L885.4 462.2M894.7 430.4L892.9 419.4M927.1 387.3L929.8 398.1M916 368.1L908.1 360.5M883.3 338.6L891.8 345.8M863.1 329.6L852.1 328.1M819.2 325L830.4 325.9M797.6 329.6L787.9 334.9M759.4 351.7L768.9 345.8M744.6 368.1L739.8 378.1M726.6 408.4L730.9 398.1M724.3 430.4L726.4 441.4M733.5 473.5L730.9 462.7M744.6 492.7L752.7 500.4M777.3 522.2L768.9 515M797.6 531.2L808.6 532.7M841.4 535.8L830.4 535M863.1 531.2L872.9 525.9M901.2 509.2L891.8 515M916 492.7L920.9 482.7M934 452.4L929.8 462.7M936.3 430.4L934.4 419.5M972 386.7L973 397.9M963.9 366.1L957.1 357.3M939 329.6L944.7 339.2M922.7 314.5L912.8 309.6M884.5 292.4L893.9 298.6M863.3 285.9L852.2 285.8M819.2 282.6L830.4 284.2M797.3 285.9L787.3 290.7M756.2 302L766.9 298.6M737.9 314.5L730.9 323.2M707.8 346.9L716 339.2M696.7 366.1L694.2 377M683.7 408.3L687.8 397.9M682.1 430.4L684.5 441.4M688.6 474.1L687.8 463M696.7 494.7L703.7 503.6M721.6 531.2L716 521.6M737.9 546.3L748 551.3M776.1 568.4L766.9 562.2M797.3 574.9L808.6 575.1M841.4 578.2L830.4 576.7M863.3 574.9L873.5 570.2M904.4 558.8L893.9 562.2M922.7 546.3L929.9 537.6M952.8 513.9L944.7 521.6M963.9 494.7L966.5 483.9M976.9 452.5L973 463M978.6 430.4L976.2 419.5M978.6 430.4L976.9 452.5M963.9 494.7L952.8 513.9M922.7 546.3L904.4 558.8M863.3 574.9L841.4 578.2M797.3 574.9L776.1 568.4M737.9 546.3L721.6 531.2M696.7 494.7L688.6 474.1M682.1 430.4L683.7 408.3M696.7 366.1L707.8 346.9M737.9 314.5L756.2 302M797.3 285.9L819.2 282.6M863.3 285.9L884.5 292.4M922.7 314.5L939 329.6M963.9 366.1L972 386.7M936.3 430.4L934 452.4M916 492.7L901.2 509.2M863.1 531.2L841.4 535.8M797.6 531.2L777.3 522.2M744.6 492.7L733.5 473.5M724.3 430.4L726.6 408.4M744.6 368.1L759.4 351.7M797.6 329.6L819.2 325M863.1 329.6L883.3 338.6M916 368.1L927.1 387.3M894.7 430.4L890.8 452.4M862.5 486.1L841.5 493.8M798.1 486.1L781 471.8M765.9 430.4L769.8 408.4M798.1 374.7L819.1 367M862.5 374.7L879.6 389"/></defs><use href="#b20" stroke="#111214" stroke-width="3"/><use href="#b20" stroke="#232428" stroke-width="2.1"/><defs><path id="a20" d="M978.6 430.4h0M976.9 452.5h0M963.9 494.7h0M952.8 513.9h0M922.7 546.3h0M904.4 558.8h0M863.3 574.9h0M841.4 578.2h0M797.3 574.9h0M776.1 568.4h0M737.9 546.3h0M721.6 531.2h0M696.7 494.7h0M688.6 474.1h0M682.1 430.4h0M683.7 408.3h0M696.7 366.1h0M707.8 346.9h0M737.9 314.5h0M756.2 302h0M797.3 285.9h0M819.2 282.6h0M863.3 285.9h0M884.5 292.4h0M922.7 314.5h0M939 329.6h0M963.9 366.1h0M972 386.7h0M936.3 430.4h0M934 452.4h0M916 492.7h0M901.2 509.2h0M863.1 531.2h0M841.4 535.8h0M797.6 531.2h0M777.3 522.2h0M744.6 492.7h0M733.5 473.5h0M724.3 430.4h0M726.6 408.4h0M744.6 368.1h0M759.4 351.7h0M797.6 329.6h0M819.2 325h0M863.1 329.6h0M883.3 338.6h0M916 368.1h0M927.1 387.3h0M894.7 430.4h0M890.8 452.4h0M862.5 486.1h0M841.5 493.8h0M798.1 486.1h0M781 471.8h0M765.9 430.4h0M769.8 408.4h0M798.1 374.7h0M819.1 367h0M862.5 374.7h0M879.6 389h0"/></defs><use href="#a20" stroke="#101113" stroke-width="8.6"/><use href="#a20" stroke="#25262a" stroke-width="7.2"/><use href="#a20" stroke="#323337" stroke-width="3" transform="translate(-1.1 -1.1)"/></g>
<g filter="url(#bl1)" fill="none" stroke-linecap="round"><defs><path id="b19" d="M894.5 419.1L894.7 430.4M886.7 397.8L879.6 389M852.5 369.1L862.5 374.7M830.2 365.1L819.1 367M788.3 380.4L798.1 374.7M773.7 397.8L769.8 408.4M766 441.7L765.9 430.4M773.7 463L781 471.8M807.9 491.7L798.1 486.1M830.2 495.6L841.5 493.8M872.2 480.4L862.5 486.1M886.7 463L890.8 452.4M937.1 419.2L936.3 430.4M932.4 397.2L927.1 387.3M910.1 358.5L916 368.1M893.4 343.5L883.3 338.6M852.6 325.3L863.1 329.6M830.2 323L819.2 325M786.5 332.2L797.6 329.6M767.1 343.5L759.4 351.7M737.2 376.7L744.6 368.1M728 397.2L726.6 408.4M723.4 441.6L724.3 430.4M728 463.6L733.5 473.5M750.4 502.3L744.6 492.7M767.1 517.3L777.3 522.2M807.9 535.5L797.6 531.2M830.2 537.8L841.4 535.8M873.9 528.5L863.1 531.2M893.4 517.3L901.2 509.2M923.3 484.1L916 492.7M932.4 463.6L934 452.4M980.1 419.2L978.6 430.4M976.7 396.9L972 386.7M960.4 355.2L963.9 366.1M947.7 336.7L939 329.6M914.9 306.2L922.7 314.5M895.4 295L884.5 292.4M852.6 281.8L863.3 285.9M830.2 280.1L819.2 282.6M785.9 286.8L797.3 285.9M765 295L756.2 302M728 320.2L737.9 314.5M712.7 336.7L707.8 346.9M690.3 375.5L696.7 366.1M683.7 396.9L683.7 408.3M680.4 441.6L682.1 430.4M683.7 463.8L688.6 474.1M700.1 505.5L696.7 494.7M712.7 524.1L721.6 531.2M745.6 554.6L737.9 546.3M765 565.8L776.1 568.4M807.8 579L797.3 574.9M830.2 580.7L841.4 578.2M874.5 574L863.3 574.9M895.4 565.8L904.4 558.8M932.4 540.6L922.7 546.3M947.7 524.1L952.8 513.9M970.1 485.3L963.9 494.7M976.7 463.8L976.9 452.5M976.7 463.8L970.1 485.3M947.7 524.1L932.4 540.6M895.4 565.8L874.5 574M830.2 580.7L807.8 579M765 565.8L745.6 554.6M712.7 524.1L700.1 505.5M683.7 463.8L680.4 441.6M683.7 396.9L690.3 375.5M712.7 336.7L728 320.2M765 295L785.9 286.8M830.2 280.1L852.6 281.8M895.4 295L914.9 306.2M947.7 336.7L960.4 355.2M976.7 396.9L980.1 419.2M932.4 463.6L923.3 484.1M893.4 517.3L873.9 528.5M830.2 537.8L807.9 535.5M767.1 517.3L750.4 502.3M728 463.6L723.4 441.6M728 397.2L737.2 376.7M767.1 343.5L786.5 332.2M830.2 323L852.6 325.3M893.4 343.5L910.1 358.5M932.4 397.2L937.1 419.2M886.7 463L872.2 480.4M830.2 495.6L807.9 491.7M773.7 463L766 441.7M773.7 397.8L788.3 380.4M830.2 365.1L852.5 369.1M886.7 397.8L894.5 419.1"/></defs><use href="#b19" stroke="#111214" stroke-width="3"/><use href="#b19" stroke="#242529" stroke-width="2.1"/><defs><path id="a19" d="M976.7 463.8h0M970.1 485.3h0M947.7 524.1h0M932.4 540.6h0M895.4 565.8h0M874.5 574h0M830.2 580.7h0M807.8 579h0M765 565.8h0M745.6 554.6h0M712.7 524.1h0M700.1 505.5h0M683.7 463.8h0M680.4 441.6h0M683.7 396.9h0M690.3 375.5h0M712.7 336.7h0M728 320.2h0M765 295h0M785.9 286.8h0M830.2 280.1h0M852.6 281.8h0M895.4 295h0M914.9 306.2h0M947.7 336.7h0M960.4 355.2h0M976.7 396.9h0M980.1 419.2h0M932.4 463.6h0M923.3 484.1h0M893.4 517.3h0M873.9 528.5h0M830.2 537.8h0M807.9 535.5h0M767.1 517.3h0M750.4 502.3h0M728 463.6h0M723.4 441.6h0M728 397.2h0M737.2 376.7h0M767.1 343.5h0M786.5 332.2h0M830.2 323h0M852.6 325.3h0M893.4 343.5h0M910.1 358.5h0M932.4 397.2h0M937.1 419.2h0M886.7 463h0M872.2 480.4h0M830.2 495.6h0M807.9 491.7h0M773.7 463h0M766 441.7h0M773.7 397.8h0M788.3 380.4h0M830.2 365.1h0M852.5 369.1h0M886.7 397.8h0M894.5 419.1h0"/></defs><use href="#a19" stroke="#101113" stroke-width="8.7"/><use href="#a19" stroke="#26272b" stroke-width="7.3"/><use href="#a19" stroke="#343539" stroke-width="3.1" transform="translate(-1.1 -1.2)"/>
<defs><path id="b18" d="M880.8 387.9L886.7 397.8M863.2 373.1L852.5 369.1M818.6 365.2L830.2 365.1M797.1 373.1L788.3 380.4M768 407.8L773.7 397.8M764 430.4L766 441.7M779.5 472.9L773.7 463M797.1 487.7L807.9 491.7M841.6 495.5L830.2 495.6M863.2 487.7L872.2 480.4M892.3 453L886.7 463M896.3 430.4L894.5 419.1M929.6 386.1L932.4 397.2M918.3 366.3L910.1 358.5M884.6 336L893.4 343.5M863.8 326.8L852.6 325.3M818.7 322L830.2 323M796.5 326.8L786.5 332.2M757.2 349.4L767.1 343.5M742 366.3L737.2 376.7M723.6 407.7L728 397.2M721.2 430.4L723.4 441.6M730.6 474.7L728 463.6M742 494.4L750.4 502.3M775.7 524.7L767.1 517.3M796.5 534L807.9 535.5M841.5 538.7L830.2 537.8M863.8 534L873.9 528.5M903 511.3L893.4 517.3M918.3 494.4L923.3 484.1M936.7 453L932.4 463.6M939.1 430.4L937.1 419.2M975.7 385.5L976.7 396.9M967.4 364.3L960.4 355.2M941.8 326.7L947.7 336.7M925.1 311.2L914.9 306.2M885.8 288.5L895.4 295M864 281.8L852.6 281.8M818.7 278.4L830.2 280.1M796.2 281.8L785.9 286.8M753.9 298.4L765 295M735.1 311.2L728 320.2M704.2 344.5L712.7 336.7M692.8 364.3L690.3 375.5M679.5 407.7L683.7 396.9M677.7 430.4L680.4 441.6M684.5 475.3L683.7 463.8M692.8 496.5L700.1 505.5M718.4 534L712.7 524.1M735.1 549.5L745.6 554.6M774.5 572.2L765 565.8M796.2 578.9L807.8 579M841.5 582.3L830.2 580.7M864 578.9L874.5 574M906.3 562.3L895.4 565.8M925.1 549.5L932.4 540.6M956 516.2L947.7 524.1M967.4 496.5L970.1 485.3M980.8 453.1L976.7 463.8M982.5 430.4L980.1 419.2M982.5 430.4L980.8 453.1M967.4 496.5L956 516.2M925.1 549.5L906.3 562.3M864 578.9L841.5 582.3M796.2 578.9L774.5 572.2M735.1 549.5L718.4 534M692.8 496.5L684.5 475.3M677.7 430.4L679.5 407.7M692.8 364.3L704.2 344.5M735.1 311.2L753.9 298.4M796.2 281.8L818.7 278.4M864 281.8L885.8 288.5M925.1 311.2L941.8 326.7M967.4 364.3L975.7 385.5M939.1 430.4L936.7 453M918.3 494.4L903 511.3M863.8 534L841.5 538.7M796.5 534L775.7 524.7M742 494.4L730.6 474.7M721.2 430.4L723.6 407.7M742 366.3L757.2 349.4M796.5 326.8L818.7 322M863.8 326.8L884.6 336M918.3 366.3L929.6 386.1M896.3 430.4L892.3 453M863.2 487.7L841.6 495.5M797.1 487.7L779.5 472.9M764 430.4L768 407.8M797.1 373.1L818.6 365.2M863.2 373.1L880.8 387.9"/></defs><use href="#b18" stroke="#111214" stroke-width="3"/><use href="#b18" stroke="#25262a" stroke-width="2.1"/><defs><path id="a18" d="M982.5 430.4h0M980.8 453.1h0M967.4 496.5h0M956 516.2h0M925.1 549.5h0M906.3 562.3h0M864 578.9h0M841.5 582.3h0M796.2 578.9h0M774.5 572.2h0M735.1 549.5h0M718.4 534h0M692.8 496.5h0M684.5 475.3h0M677.7 430.4h0M679.5 407.7h0M692.8 364.3h0M704.2 344.5h0M735.1 311.2h0M753.9 298.4h0M796.2 281.8h0M818.7 278.4h0M864 281.8h0M885.8 288.5h0M925.1 311.2h0M941.8 326.7h0M967.4 364.3h0M975.7 385.5h0M939.1 430.4h0M936.7 453h0M918.3 494.4h0M903 511.3h0M863.8 534h0M841.5 538.7h0M796.5 534h0M775.7 524.7h0M742 494.4h0M730.6 474.7h0M721.2 430.4h0M723.6 407.7h0M742 366.3h0M757.2 349.4h0M796.5 326.8h0M818.7 322h0M863.8 326.8h0M884.6 336h0M918.3 366.3h0M929.6 386.1h0M896.3 430.4h0M892.3 453h0M863.2 487.7h0M841.6 495.5h0M797.1 487.7h0M779.5 472.9h0M764 430.4h0M768 407.8h0M797.1 373.1h0M818.6 365.2h0M863.2 373.1h0M880.8 387.9h0"/></defs><use href="#a18" stroke="#101113" stroke-width="8.8"/><use href="#a18" stroke="#27282c" stroke-width="7.4"/><use href="#a18" stroke="#35363a" stroke-width="3.1" transform="translate(-1.1 -1.2)"/>
<defs><path id="b17" d="M896.1 418.7L896.3 430.4M888.1 396.8L880.8 387.9M853 367.3L863.2 373.1M830 363.3L818.6 365.2M786.9 379L797.1 373.1M771.9 396.8L768 407.8M764 442L764 430.4M771.9 463.9L779.5 472.9M807.1 493.4L797.1 487.7M830 497.4L841.6 495.5M873.2 481.8L863.2 487.7M888.1 463.9L892.3 453M939.9 418.8L939.1 430.4M935.1 396.2L929.6 386.1M912.1 356.4L918.3 366.3M895 341L884.6 336M853 322.3L863.8 326.8M830 319.9L818.7 322M785.1 329.4L796.5 326.8M765.1 341L757.2 349.4M734.4 375.1L742 366.3M725 396.2L723.6 407.7M720.2 441.9L721.2 430.4M725 464.5L730.6 474.7M747.9 504.3L742 494.4M765.1 519.7L775.7 524.7M807.1 538.4L796.5 534M830 540.8L841.5 538.7M875 531.3L863.8 534M895 519.7L903 511.3M925.7 485.6L918.3 494.4M935.1 464.5L936.7 453M984.1 418.8L982.5 430.4M980.7 396L975.7 385.5M963.9 353.1L967.4 364.3M950.9 334L941.8 326.7M917.1 302.7L925.1 311.2M897.1 291.1L885.8 288.5M853.1 277.6L864 281.8M830 275.8L818.7 278.4M784.5 282.7L796.2 281.8M763 291.1L753.9 298.4M724.9 317.1L735.1 311.2M709.2 334L704.2 344.5M686.2 373.9L692.8 364.3M679.4 396L679.5 407.7M675.9 441.9L677.7 430.4M679.4 464.7L684.5 475.3M696.2 507.6L692.8 496.5M709.2 526.7L718.4 534M743 558L735.1 549.5M763 569.6L774.5 572.2M807 583.2L796.2 578.9M830 584.9L841.5 582.3M875.6 578L864 578.9M897.1 569.6L906.3 562.3M935.2 543.6L925.1 549.5M950.9 526.7L956 516.2M973.9 486.8L967.4 496.5M980.7 464.7L980.8 453.1M980.7 464.7L973.9 486.8M950.9 526.7L935.2 543.6M897.1 569.6L875.6 578M830 584.9L807 583.2M763 569.6L743 558M709.2 526.7L696.2 507.6M679.4 464.7L675.9 441.9M679.4 396L686.2 373.9M709.2 334L724.9 317.1M763 291.1L784.5 282.7M830 275.8L853.1 277.6M897.1 291.1L917.1 302.7M950.9 334L963.9 353.1M980.7 396L984.1 418.8M935.1 464.5L925.7 485.6M895 519.7L875 531.3M830 540.8L807.1 538.4M765.1 519.7L747.9 504.3M725 464.5L720.2 441.9M725 396.2L734.4 375.1M765.1 341L785.1 329.4M830 319.9L853 322.3M895 341L912.1 356.4M935.1 396.2L939.9 418.8M888.1 463.9L873.2 481.8M830 497.4L807.1 493.4M771.9 463.9L764 442M771.9 396.8L786.9 379M830 363.3L853 367.3M888.1 396.8L896.1 418.7"/></defs><use href="#b17" stroke="#121315" stroke-width="3"/><use href="#b17" stroke="#26272b" stroke-width="2.1"/><defs><path id="a17" d="M980.7 464.7h0M973.9 486.8h0M950.9 526.7h0M935.2 543.6h0M897.1 569.6h0M875.6 578h0M830 584.9h0M807 583.2h0M763 569.6h0M743 558h0M709.2 526.7h0M696.2 507.6h0M679.4 464.7h0M675.9 441.9h0M679.4 396h0M686.2 373.9h0M709.2 334h0M724.9 317.1h0M763 291.1h0M784.5 282.7h0M830 275.8h0M853.1 277.6h0M897.1 291.1h0M917.1 302.7h0M950.9 334h0M963.9 353.1h0M980.7 396h0M984.1 418.8h0M935.1 464.5h0M925.7 485.6h0M895 519.7h0M875 531.3h0M830 540.8h0M807.1 538.4h0M765.1 519.7h0M747.9 504.3h0M725 464.5h0M720.2 441.9h0M725 396.2h0M734.4 375.1h0M765.1 341h0M785.1 329.4h0M830 319.9h0M853 322.3h0M895 341h0M912.1 356.4h0M935.1 396.2h0M939.9 418.8h0M888.1 463.9h0M873.2 481.8h0M830 497.4h0M807.1 493.4h0M771.9 463.9h0M764 442h0M771.9 396.8h0M786.9 379h0M830 363.3h0M853 367.3h0M888.1 396.8h0M896.1 418.7h0"/></defs><use href="#a17" stroke="#101113" stroke-width="8.9"/><use href="#a17" stroke="#28292d" stroke-width="7.5"/><use href="#a17" stroke="#37383c" stroke-width="3.2" transform="translate(-1.1 -1.2)"/>
<defs><path id="b16" d="M882.1 386.6L888.1 396.8M864 371.4L853 367.3M818.1 363.3L830 363.3M795.9 371.4L786.9 379M766 407.1L771.9 396.8M761.9 430.3L764 442M777.8 474.1L771.9 463.9M795.9 489.3L807.1 493.4M841.8 497.4L830 497.4M864 489.3L873.2 481.8M893.9 453.6L888.1 463.9M898 430.3L896.1 418.7M932.3 384.8L935.1 396.2M920.6 364.5L912.1 356.4M886 333.3L895 341M864.6 323.8L853 322.3M818.2 318.9L830 319.9M795.3 323.8L785.1 329.4M755 347.1L765.1 341M739.3 364.5L734.4 375.1M720.3 407L725 396.2M717.9 430.3L720.2 441.9M727.6 475.9L725 464.5M739.3 496.2L747.9 504.3M773.9 527.4L765.1 519.7M795.3 536.9L807.1 538.4M841.7 541.8L830 540.8M864.6 536.9L875 531.3M904.9 513.6L895 519.7M920.6 496.2L925.7 485.6M939.6 453.6L935.1 464.5M942 430.3L939.9 418.8M979.7 384.1L980.7 396M971.2 362.3L963.9 353.1M944.9 323.7L950.9 334M927.7 307.8L917.1 302.7M887.2 284.4L897.1 291.1M864.8 277.5L853.1 277.6M818.2 274L830 275.8M795.1 277.5L784.5 282.7M751.6 294.6L763 291.1M732.2 307.8L724.9 317.1M700.4 342L709.2 334M688.7 362.3L686.2 373.9M674.9 407L679.4 396M673.2 430.3L675.9 441.9M680.2 476.5L679.4 464.7M688.7 498.4L696.2 507.6M715 537L709.2 526.7M732.2 552.9L743 558M772.7 576.3L763 569.6M795.1 583.2L807 583.2M841.7 586.7L830 584.9M864.8 583.2L875.6 578M908.3 566.1L897.1 569.6M927.7 552.9L935.2 543.6M959.5 518.6L950.9 526.7M971.2 498.4L973.9 486.8M984.9 453.7L980.7 464.7M986.7 430.3L984.1 418.8M986.7 430.3L984.9 453.7M971.2 498.4L959.5 518.6M927.7 552.9L908.3 566.1M864.8 583.2L841.7 586.7M795.1 583.2L772.7 576.3M732.2 552.9L715 537M688.7 498.4L680.2 476.5M673.2 430.3L674.9 407M688.7 362.3L700.4 342M732.2 307.8L751.6 294.6M795.1 277.5L818.2 274M864.8 277.5L887.2 284.4M927.7 307.8L944.9 323.7M971.2 362.3L979.7 384.1M942 430.3L939.6 453.6M920.6 496.2L904.9 513.6M864.6 536.9L841.7 541.8M795.3 536.9L773.9 527.4M739.3 496.2L727.6 475.9M717.9 430.3L720.3 407M739.3 364.5L755 347.1M795.3 323.8L818.2 318.9M864.6 323.8L886 333.3M920.6 364.5L932.3 384.8M898 430.3L893.9 453.6M864 489.3L841.8 497.4M795.9 489.3L777.8 474.1M761.9 430.3L766 407.1M795.9 371.4L818.1 363.3M864 371.4L882.1 386.6"/></defs><use href="#b16" stroke="#121315" stroke-width="3"/><use href="#b16" stroke="#26282c" stroke-width="2.1"/><defs><path id="a16" d="M986.7 430.3h0M984.9 453.7h0M971.2 498.4h0M959.5 518.6h0M927.7 552.9h0M908.3 566.1h0M864.8 583.2h0M841.7 586.7h0M795.1 583.2h0M772.7 576.3h0M732.2 552.9h0M715 537h0M688.7 498.4h0M680.2 476.5h0M673.2 430.3h0M674.9 407h0M688.7 362.3h0M700.4 342h0M732.2 307.8h0M751.6 294.6h0M795.1 277.5h0M818.2 274h0M864.8 277.5h0M887.2 284.4h0M927.7 307.8h0M944.9 323.7h0M971.2 362.3h0M979.7 384.1h0M942 430.3h0M939.6 453.6h0M920.6 496.2h0M904.9 513.6h0M864.6 536.9h0M841.7 541.8h0M795.3 536.9h0M773.9 527.4h0M739.3 496.2h0M727.6 475.9h0M717.9 430.3h0M720.3 407h0M739.3 364.5h0M755 347.1h0M795.3 323.8h0M818.2 318.9h0M864.6 323.8h0M886 333.3h0M920.6 364.5h0M932.3 384.8h0M898 430.3h0M893.9 453.6h0M864 489.3h0M841.8 497.4h0M795.9 489.3h0M777.8 474.1h0M761.9 430.3h0M766 407.1h0M795.9 371.4h0M818.1 363.3h0M864 371.4h0M882.1 386.6h0"/></defs><use href="#a16" stroke="#101114" stroke-width="9"/><use href="#a16" stroke="#292a2e" stroke-width="7.6"/><use href="#a16" stroke="#38393d" stroke-width="3.2" transform="translate(-1.1 -1.2)"/>
<defs><path id="b15" d="M897.8 418.3L898 430.3M889.6 395.8L882.1 386.6M853.5 365.5L864 371.4M829.9 361.3L818.1 363.3M785.5 377.4L795.9 371.4M770.1 395.8L766 407.1M761.9 442.3L761.9 430.3M770.1 464.8L777.8 474.1M806.2 495.2L795.9 489.3M829.9 499.4L841.8 497.4M874.2 483.2L864 489.3M889.6 464.8L893.9 453.6M942.9 418.4L942 430.3M938 395.2L932.3 384.8M914.3 354.3L920.6 364.5M896.7 338.4L886 333.3M853.5 319.1L864.6 323.8M829.9 316.6L818.2 318.9M783.6 326.5L795.3 323.8M763 338.4L755 347.1M731.4 373.5L739.3 364.5M721.7 395.2L720.3 407M716.8 442.2L717.9 430.3M721.7 465.5L727.6 475.9M745.4 506.4L739.3 496.2M763 522.3L773.9 527.4M806.2 541.5L795.3 536.9M829.9 544L841.7 541.8M876.1 534.2L864.6 536.9M896.7 522.3L904.9 513.6M928.3 487.2L920.6 496.2M938 465.5L939.6 453.6M988.4 418.4L986.7 430.3M984.9 394.9L979.7 384.1M967.6 350.8L971.2 362.3M954.2 331.2L944.9 323.7M919.4 298.9L927.7 307.8M898.9 287L887.2 284.4M853.6 273.1L864.8 277.5M829.9 271.3L818.2 274M783 278.4L795.1 277.5M760.9 287L751.6 294.6M721.7 313.7L732.2 307.8M705.5 331.2L700.4 342M681.8 372.2L688.7 362.3M674.8 394.9L674.9 407M671.3 442.2L673.2 430.3M674.8 465.7L680.2 476.5M692.1 509.8L688.7 498.4M705.5 529.5L715 537M740.3 561.7L732.2 552.9M760.9 573.6L772.7 576.3M806.2 587.6L795.1 583.2M829.9 589.4L841.7 586.7M876.7 582.3L864.8 583.2M898.9 573.6L908.3 566.1M938 546.9L927.7 552.9M954.2 529.5L959.5 518.6M977.9 488.4L971.2 498.4M984.9 465.7L984.9 453.7M984.9 465.7L977.9 488.4M954.2 529.5L938 546.9M898.9 573.6L876.7 582.3M829.9 589.4L806.2 587.6M760.9 573.6L740.3 561.7M705.5 529.5L692.1 509.8M674.8 465.7L671.3 442.2M674.8 394.9L681.8 372.2M705.5 331.2L721.7 313.7M760.9 287L783 278.4M829.9 271.3L853.6 273.1M898.9 287L919.4 298.9M954.2 331.2L967.6 350.8M984.9 394.9L988.4 418.4M938 465.5L928.3 487.2M896.7 522.3L876.1 534.2M829.9 544L806.2 541.5M763 522.3L745.4 506.4M721.7 465.5L716.8 442.2M721.7 395.2L731.4 373.5M763 338.4L783.6 326.5M829.9 316.6L853.5 319.1M896.7 338.4L914.3 354.3M938 395.2L942.9 418.4M889.6 464.8L874.2 483.2M829.9 499.4L806.2 495.2M770.1 464.8L761.9 442.3M770.1 395.8L785.5 377.4M829.9 361.3L853.5 365.5M889.6 395.8L897.8 418.3"/></defs><use href="#b15" stroke="#121315" stroke-width="3.1"/><use href="#b15" stroke="#27292d" stroke-width="2.2"/><defs><path id="a15" d="M984.9 465.7h0M977.9 488.4h0M954.2 529.5h0M938 546.9h0M898.9 573.6h0M876.7 582.3h0M829.9 589.4h0M806.2 587.6h0M760.9 573.6h0M740.3 561.7h0M705.5 529.5h0M692.1 509.8h0M674.8 465.7h0M671.3 442.2h0M674.8 394.9h0M681.8 372.2h0M705.5 331.2h0M721.7 313.7h0M760.9 287h0M783 278.4h0M829.9 271.3h0M853.6 273.1h0M898.9 287h0M919.4 298.9h0M954.2 331.2h0M967.6 350.8h0M984.9 394.9h0M988.4 418.4h0M938 465.5h0M928.3 487.2h0M896.7 522.3h0M876.1 534.2h0M829.9 544h0M806.2 541.5h0M763 522.3h0M745.4 506.4h0M721.7 465.5h0M716.8 442.2h0M721.7 395.2h0M731.4 373.5h0M763 338.4h0M783.6 326.5h0M829.9 316.6h0M853.5 319.1h0M896.7 338.4h0M914.3 354.3h0M938 395.2h0M942.9 418.4h0M889.6 464.8h0M874.2 483.2h0M829.9 499.4h0M806.2 495.2h0M770.1 464.8h0M761.9 442.3h0M770.1 395.8h0M785.5 377.4h0M829.9 361.3h0M853.5 365.5h0M889.6 395.8h0M897.8 418.3h0"/></defs><use href="#a15" stroke="#111214" stroke-width="9.1"/><use href="#a15" stroke="#292a2e" stroke-width="7.7"/><use href="#a15" stroke="#3a3b3f" stroke-width="3.3" transform="translate(-1.1 -1.2)"/></g>
<g fill="none" stroke-linecap="round"><defs><path id="b14" d="M883.4 385.3L889.6 395.8M864.8 369.6L853.5 365.5M817.6 361.3L829.9 361.3M794.7 369.6L785.5 377.4M763.9 406.3L770.1 395.8M759.7 430.3L761.9 442.3M776.1 475.3L770.1 464.8M794.7 491L806.2 495.2M841.9 499.3L829.9 499.4M864.8 491L874.2 483.2M895.6 454.3L889.6 464.8M899.8 430.3L897.8 418.3M935.1 383.4L938 395.2M923.1 362.5L914.3 354.3M887.4 330.4L896.7 338.4M865.4 320.6L853.5 319.1M817.7 315.6L829.9 316.6M794.1 320.6L783.6 326.5M752.6 344.6L763 338.4M736.4 362.5L731.4 373.5M716.9 406.3L721.7 395.2M714.4 430.3L716.8 442.2M724.4 477.2L721.7 465.5M736.4 498.1L745.4 506.4M772.1 530.2L763 522.3M794.1 540L806.2 541.5M841.8 545L829.9 544M865.4 540L876.1 534.2M906.9 516L896.7 522.3M923.1 498.1L928.3 487.2M942.6 454.3L938 465.5M945.1 430.3L942.9 418.4M984 382.7L984.9 394.9M975.2 360.3L967.6 350.8M948.1 320.5L954.2 331.2M930.4 304.1L919.4 298.9M888.7 280.1L898.9 287M865.7 273L853.6 273.1M817.7 269.4L829.9 271.3M793.8 273L783 278.4M749.1 290.6L760.9 287M729.1 304.1L721.7 313.7M696.4 339.4L705.5 331.2M684.4 360.3L681.8 372.2M670.2 406.3L674.8 394.9M668.4 430.3L671.3 442.2M675.5 477.9L674.8 465.7M684.4 500.3L692.1 509.8M711.5 540.1L705.5 529.5M729.1 556.5L740.3 561.7M770.8 580.5L760.9 573.6M793.8 587.6L806.2 587.6M841.8 591.2L829.9 589.4M865.7 587.6L876.7 582.3M910.4 570.1L898.9 573.6M930.4 556.5L938 546.9M963.1 521.2L954.2 529.5M975.2 500.3L977.9 488.4M989.3 454.4L984.9 465.7M991.1 430.3L988.4 418.4M991.1 430.3L989.3 454.4M975.2 500.3L963.1 521.2M930.4 556.5L910.4 570.1M865.7 587.6L841.8 591.2M793.8 587.6L770.8 580.5M729.1 556.5L711.5 540.1M684.4 500.3L675.5 477.9M668.4 430.3L670.2 406.3M684.4 360.3L696.4 339.4M729.1 304.1L749.1 290.6M793.8 273L817.7 269.4M865.7 273L888.7 280.1M930.4 304.1L948.1 320.5M975.2 360.3L984 382.7M945.1 430.3L942.6 454.3M923.1 498.1L906.9 516M865.4 540L841.8 545M794.1 540L772.1 530.2M736.4 498.1L724.4 477.2M714.4 430.3L716.9 406.3M736.4 362.5L752.6 344.6M794.1 320.6L817.7 315.6M865.4 320.6L887.4 330.4M923.1 362.5L935.1 383.4M899.8 430.3L895.6 454.3M864.8 491L841.9 499.3M794.7 491L776.1 475.3M759.7 430.3L763.9 406.3M794.7 369.6L817.6 361.3M864.8 369.6L883.4 385.3"/></defs><use href="#b14" stroke="#121316" stroke-width="3.1"/><use href="#b14" stroke="#28292d" stroke-width="2.2"/><defs><path id="a14" d="M991.1 430.3h0M989.3 454.4h0M975.2 500.3h0M963.1 521.2h0M930.4 556.5h0M910.4 570.1h0M865.7 587.6h0M841.8 591.2h0M793.8 587.6h0M770.8 580.5h0M729.1 556.5h0M711.5 540.1h0M684.4 500.3h0M675.5 477.9h0M668.4 430.3h0M670.2 406.3h0M684.4 360.3h0M696.4 339.4h0M729.1 304.1h0M749.1 290.6h0M793.8 273h0M817.7 269.4h0M865.7 273h0M888.7 280.1h0M930.4 304.1h0M948.1 320.5h0M975.2 360.3h0M984 382.7h0M945.1 430.3h0M942.6 454.3h0M923.1 498.1h0M906.9 516h0M865.4 540h0M841.8 545h0M794.1 540h0M772.1 530.2h0M736.4 498.1h0M724.4 477.2h0M714.4 430.3h0M716.9 406.3h0M736.4 362.5h0M752.6 344.6h0M794.1 320.6h0M817.7 315.6h0M865.4 320.6h0M887.4 330.4h0M923.1 362.5h0M935.1 383.4h0M899.8 430.3h0M895.6 454.3h0M864.8 491h0M841.9 499.3h0M794.7 491h0M776.1 475.3h0M759.7 430.3h0M763.9 406.3h0M794.7 369.6h0M817.6 361.3h0M864.8 369.6h0M883.4 385.3h0"/></defs><use href="#a14" stroke="#111214" stroke-width="9.3"/><use href="#a14" stroke="#2a2b2f" stroke-width="7.9"/><use href="#a14" stroke="#3c3d41" stroke-width="3.3" transform="translate(-1.2 -1.2)"/>
<defs><path id="b13" d="M899.7 417.9L899.8 430.3M891.2 394.7L883.4 385.3M854 363.5L864.8 369.6M829.7 359.2L817.6 361.3M783.9 375.8L794.7 369.6M768.1 394.7L763.9 406.3M759.6 442.6L759.7 430.3M768.1 465.8L776.1 475.3M805.3 497.1L794.7 491M829.7 501.4L841.9 499.3M875.4 484.8L864.8 491M891.2 465.8L895.6 454.3M946.1 418.1L945.1 430.3M941 394.1L935.1 383.4M916.7 351.9L923.1 362.5M898.5 335.6L887.4 330.4M854 315.8L865.4 320.6M829.7 313.2L817.7 315.6M782 323.3L794.1 320.6M760.8 335.6L752.6 344.6M728.3 371.7L736.4 362.5M718.3 394.1L716.9 406.3M713.2 442.5L714.4 430.3M718.3 466.5L724.4 477.2M742.6 508.6L736.4 498.1M760.8 525L772.1 530.2M805.3 544.8L794.1 540M829.7 547.4L841.8 545M877.3 537.3L865.4 540M898.5 525L906.9 516M931.1 488.8L923.1 498.1M941 466.5L942.6 454.3M993 418.1L991.1 430.3M989.3 393.8L984 382.7M971.5 348.4L975.2 360.3M957.7 328.2L948.1 320.5M921.9 295L930.4 304.1M900.7 282.7L888.7 280.1M854.1 268.3L865.7 273M829.7 266.5L817.7 269.4M781.4 273.8L793.8 273M758.6 282.7L749.1 290.6M718.2 310.2L729.1 304.1M701.6 328.2L696.4 339.4M677.2 370.5L684.4 360.3M670 393.8L670.2 406.3M666.3 442.5L668.4 430.3M670 466.7L675.5 477.9M687.8 512.2L684.4 500.3M701.6 532.4L711.5 540.1M737.4 565.6L729.1 556.5M758.6 577.9L770.8 580.5M805.2 592.3L793.8 587.6M829.7 594.1L841.8 591.2M877.9 586.8L865.7 587.6M900.7 577.9L910.4 570.1M941.1 550.4L930.4 556.5M957.7 532.4L963.1 521.2M982.1 490.1L975.2 500.3M989.3 466.7L989.3 454.4M989.3 466.7L982.1 490.1M957.7 532.4L941.1 550.4M900.7 577.9L877.9 586.8M829.7 594.1L805.2 592.3M758.6 577.9L737.4 565.6M701.6 532.4L687.8 512.2M670 466.7L666.3 442.5M670 393.8L677.2 370.5M701.6 328.2L718.2 310.2M758.6 282.7L781.4 273.8M829.7 266.5L854.1 268.3M900.7 282.7L921.9 295M957.7 328.2L971.5 348.4M989.3 393.8L993 418.1M941 466.5L931.1 488.8M898.5 525L877.3 537.3M829.7 547.4L805.3 544.8M760.8 525L742.6 508.6M718.3 466.5L713.2 442.5M718.3 394.1L728.3 371.7M760.8 335.6L782 323.3M829.7 313.2L854 315.8M898.5 335.6L916.7 351.9M941 394.1L946.1 418.1M891.2 465.8L875.4 484.8M829.7 501.4L805.3 497.1M768.1 465.8L759.6 442.6M768.1 394.7L783.9 375.8M829.7 359.2L854 363.5M891.2 394.7L899.7 417.9"/></defs><use href="#b13" stroke="#131416" stroke-width="3.1"/><use href="#b13" stroke="#292a2e" stroke-width="2.2"/><defs><path id="a13" d="M989.3 466.7h0M982.1 490.1h0M957.7 532.4h0M941.1 550.4h0M900.7 577.9h0M877.9 586.8h0M829.7 594.1h0M805.2 592.3h0M758.6 577.9h0M737.4 565.6h0M701.6 532.4h0M687.8 512.2h0M670 466.7h0M666.3 442.5h0M670 393.8h0M677.2 370.5h0M701.6 328.2h0M718.2 310.2h0M758.6 282.7h0M781.4 273.8h0M829.7 266.5h0M854.1 268.3h0M900.7 282.7h0M921.9 295h0M957.7 328.2h0M971.5 348.4h0M989.3 393.8h0M993 418.1h0M941 466.5h0M931.1 488.8h0M898.5 525h0M877.3 537.3h0M829.7 547.4h0M805.3 544.8h0M760.8 525h0M742.6 508.6h0M718.3 466.5h0M713.2 442.5h0M718.3 394.1h0M728.3 371.7h0M760.8 335.6h0M782 323.3h0M829.7 313.2h0M854 315.8h0M898.5 335.6h0M916.7 351.9h0M941 394.1h0M946.1 418.1h0M891.2 465.8h0M875.4 484.8h0M829.7 501.4h0M805.3 497.1h0M768.1 465.8h0M759.6 442.6h0M768.1 394.7h0M783.9 375.8h0M829.7 359.2h0M854 363.5h0M891.2 394.7h0M899.7 417.9h0"/></defs><use href="#a13" stroke="#111214" stroke-width="9.4"/><use href="#a13" stroke="#2b2c30" stroke-width="8"/><use href="#a13" stroke="#3e3f43" stroke-width="3.3" transform="translate(-1.2 -1.3)"/>
<defs><path id="b12" d="M884.9 383.9L891.2 394.7M865.6 367.8L854 363.5M817 359.2L829.7 359.2M793.5 367.8L783.9 375.8M761.7 405.6L768.1 394.7M757.4 430.3L759.6 442.6M774.3 476.7L768.1 465.8M793.5 492.8L805.3 497.1M842.1 501.4L829.7 501.4M865.6 492.8L875.4 484.8M897.4 455L891.2 465.8M901.7 430.3L899.7 417.9M938.1 381.9L941 394.1M925.7 360.4L916.7 351.9M889 327.3L898.5 335.6M866.3 317.2L854 315.8M817.1 312.1L829.7 313.2M792.8 317.2L782 323.3M750 341.9L760.8 335.6M733.4 360.4L728.3 371.7M713.3 405.6L718.3 394.1M710.7 430.3L713.2 442.5M721 478.6L718.3 466.5M733.4 500.1L742.6 508.6M770.1 533.2L760.8 525M792.8 543.3L805.3 544.8M842 548.5L829.7 547.4M866.3 543.3L877.3 537.3M909.1 518.6L898.5 525M925.7 500.1L931.1 488.8M945.8 455L941 466.5M948.4 430.3L946.1 418.1M988.4 381.3L989.3 393.8M979.4 358.1L971.5 348.4M951.4 317.2L957.7 328.2M933.2 300.3L921.9 295M890.3 275.5L900.7 282.7M866.6 268.2L854.1 268.3M817.1 264.5L829.7 266.5M792.5 268.2L781.4 273.8M746.4 286.3L758.6 282.7M725.9 300.3L718.2 310.2M692.2 336.6L701.6 328.2M679.7 358.1L677.2 370.5M665.1 405.5L670 393.8M663.3 430.3L666.3 442.5M670.7 479.3L670 466.7M679.7 502.4L687.8 512.2M707.7 543.4L701.6 532.4M725.9 560.3L737.4 565.6M768.8 585.1L758.6 577.9M792.5 592.4L805.2 592.3M842 596.1L829.7 594.1M866.6 592.4L877.9 586.8M912.7 574.3L900.7 577.9M933.2 560.3L941.1 550.4M966.9 523.9L957.7 532.4M979.4 502.4L982.1 490.1M994 455.1L989.3 466.7M995.8 430.3L993 418.1M995.8 430.3L994 455.1M979.4 502.4L966.9 523.9M933.2 560.3L912.7 574.3M866.6 592.4L842 596.1M792.5 592.4L768.8 585.1M725.9 560.3L707.7 543.4M679.7 502.4L670.7 479.3M663.3 430.3L665.1 405.5M679.7 358.1L692.2 336.6M725.9 300.3L746.4 286.3M792.5 268.2L817.1 264.5M866.6 268.2L890.3 275.5M933.2 300.3L951.4 317.2M979.4 358.1L988.4 381.3M948.4 430.3L945.8 455M925.7 500.1L909.1 518.6M866.3 543.3L842 548.5M792.8 543.3L770.1 533.2M733.4 500.1L721 478.6M710.7 430.3L713.3 405.6M733.4 360.4L750 341.9M792.8 317.2L817.1 312.1M866.3 317.2L889 327.3M925.7 360.4L938.1 381.9M901.7 430.3L897.4 455M865.6 492.8L842.1 501.4M793.5 492.8L774.3 476.7M757.4 430.3L761.7 405.6M793.5 367.8L817 359.2M865.6 367.8L884.9 383.9"/></defs><use href="#b12" stroke="#131416" stroke-width="3.1"/><use href="#b12" stroke="#2a2b2f" stroke-width="2.2"/><defs><path id="a12" d="M995.8 430.3h0M994 455.1h0M979.4 502.4h0M966.9 523.9h0M933.2 560.3h0M912.7 574.3h0M866.6 592.4h0M842 596.1h0M792.5 592.4h0M768.8 585.1h0M725.9 560.3h0M707.7 543.4h0M679.7 502.4h0M670.7 479.3h0M663.3 430.3h0M665.1 405.5h0M679.7 358.1h0M692.2 336.6h0M725.9 300.3h0M746.4 286.3h0M792.5 268.2h0M817.1 264.5h0M866.6 268.2h0M890.3 275.5h0M933.2 300.3h0M951.4 317.2h0M979.4 358.1h0M988.4 381.3h0M948.4 430.3h0M945.8 455h0M925.7 500.1h0M909.1 518.6h0M866.3 543.3h0M842 548.5h0M792.8 543.3h0M770.1 533.2h0M733.4 500.1h0M721 478.6h0M710.7 430.3h0M713.3 405.6h0M733.4 360.4h0M750 341.9h0M792.8 317.2h0M817.1 312.1h0M866.3 317.2h0M889 327.3h0M925.7 360.4h0M938.1 381.9h0M901.7 430.3h0M897.4 455h0M865.6 492.8h0M842.1 501.4h0M793.5 492.8h0M774.3 476.7h0M757.4 430.3h0M761.7 405.6h0M793.5 367.8h0M817 359.2h0M865.6 367.8h0M884.9 383.9h0"/></defs><use href="#a12" stroke="#111215" stroke-width="9.5"/><use href="#a12" stroke="#2c2d31" stroke-width="8.1"/><use href="#a12" stroke="#3f4044" stroke-width="3.4" transform="translate(-1.2 -1.3)"/>
<defs><path id="b11" d="M901.6 417.5L901.7 430.3M892.9 393.6L884.9 383.9M854.5 361.4L865.6 367.8M829.4 357L817 359.2M782.3 374.1L793.5 367.8M766 393.6L761.7 405.6M757.3 443L757.4 430.3M766 466.9L774.3 476.7M804.4 499.1L793.5 492.8M829.4 503.6L842.1 501.4M876.6 486.4L865.6 492.8M892.9 466.9L897.4 455M949.5 417.6L948.4 430.3M944.2 393L938.1 381.9M919.1 349.5L925.7 360.4M900.4 332.6L889 327.3M854.5 312.2L866.3 317.2M829.4 309.6L817.1 312.1M780.3 320L792.8 317.2M758.5 332.6L750 341.9M724.9 369.9L733.4 360.4M714.6 393L713.3 405.6M709.4 442.9L710.7 430.3M714.6 467.6L721 478.6M739.7 511L733.4 500.1M758.5 527.9L770.1 533.2M804.3 548.3L792.8 543.3M829.4 551L842 548.5M878.5 540.5L866.3 543.3M900.4 527.9L909.1 518.6M934 490.6L925.7 500.1M944.2 467.6L945.8 455M997.8 417.6L995.8 430.3M994.1 392.7L988.4 381.3M975.7 345.8L979.4 358.1M961.5 325L951.4 317.2M924.6 290.7L933.2 300.3M902.7 278.1L890.3 275.5M854.6 263.3L866.6 268.2M829.4 261.4L817.1 264.5M779.7 268.9L792.5 268.2M756.2 278.1L746.4 286.3M714.6 306.5L725.9 300.3M697.4 325L692.2 336.6M672.3 368.6L679.7 358.1M664.8 392.7L665.1 405.5M661.1 442.9L663.3 430.3M664.8 467.8L670.7 479.3M683.2 514.7L679.7 502.4M697.4 535.5L707.7 543.4M734.3 569.8L725.9 560.3M756.2 582.4L768.8 585.1M804.3 597.2L792.5 592.4M829.4 599.1L842 596.1M879.2 591.6L866.6 592.4M902.7 582.4L912.7 574.3M944.3 554L933.2 560.3M961.5 535.5L966.9 523.9M986.6 491.9L979.4 502.4M994.1 467.8L994 455.1M994.1 467.8L986.6 491.9M961.5 535.5L944.3 554M902.7 582.4L879.2 591.6M829.4 599.1L804.3 597.2M756.2 582.4L734.3 569.8M697.4 535.5L683.2 514.7M664.8 467.8L661.1 442.9M664.8 392.7L672.3 368.6M697.4 325L714.6 306.5M756.2 278.1L779.7 268.9M829.4 261.4L854.6 263.3M902.7 278.1L924.6 290.7M961.5 325L975.7 345.8M994.1 392.7L997.8 417.6M944.2 467.6L934 490.6M900.4 527.9L878.5 540.5M829.4 551L804.3 548.3M758.5 527.9L739.7 511M714.6 467.6L709.4 442.9M714.6 393L724.9 369.9M758.5 332.6L780.3 320M829.4 309.6L854.5 312.2M900.4 332.6L919.1 349.5M944.2 393L949.5 417.6M892.9 466.9L876.6 486.4M829.4 503.6L804.4 499.1M766 466.9L757.3 443M766 393.6L782.3 374.1M829.4 357L854.5 361.4M892.9 393.6L901.6 417.5"/></defs><use href="#b11" stroke="#131417" stroke-width="3.1"/><use href="#b11" stroke="#2b2c30" stroke-width="2.2"/><defs><path id="a11" d="M994.1 467.8h0M986.6 491.9h0M961.5 535.5h0M944.3 554h0M902.7 582.4h0M879.2 591.6h0M829.4 599.1h0M804.3 597.2h0M756.2 582.4h0M734.3 569.8h0M697.4 535.5h0M683.2 514.7h0M664.8 467.8h0M661.1 442.9h0M664.8 392.7h0M672.3 368.6h0M697.4 325h0M714.6 306.5h0M756.2 278.1h0M779.7 268.9h0M829.4 261.4h0M854.6 263.3h0M902.7 278.1h0M924.6 290.7h0M961.5 325h0M975.7 345.8h0M994.1 392.7h0M997.8 417.6h0M944.2 467.6h0M934 490.6h0M900.4 527.9h0M878.5 540.5h0M829.4 551h0M804.3 548.3h0M758.5 527.9h0M739.7 511h0M714.6 467.6h0M709.4 442.9h0M714.6 393h0M724.9 369.9h0M758.5 332.6h0M780.3 320h0M829.4 309.6h0M854.5 312.2h0M900.4 332.6h0M919.1 349.5h0M944.2 393h0M949.5 417.6h0M892.9 466.9h0M876.6 486.4h0M829.4 503.6h0M804.4 499.1h0M766 466.9h0M757.3 443h0M766 393.6h0M782.3 374.1h0M829.4 357h0M854.5 361.4h0M892.9 393.6h0M901.6 417.5h0"/></defs><use href="#a11" stroke="#121315" stroke-width="9.6"/><use href="#a11" stroke="#2d2e32" stroke-width="8.2"/><use href="#a11" stroke="#414246" stroke-width="3.5" transform="translate(-1.2 -1.3)"/>
<defs><path id="b10" d="M886.4 382.4L892.9 393.6M866.6 365.8L854.5 361.4M816.4 356.9L829.4 357M792.1 365.8L782.3 374.1M759.4 404.8L766 393.6M754.9 430.2L757.3 443M772.3 478.1L766 466.9M792.1 494.7L804.4 499.1M842.3 503.6L829.4 503.6M866.6 494.7L876.6 486.4M899.3 455.7L892.9 466.9M903.8 430.2L901.6 417.5M941.3 380.4L944.2 393M928.5 358.2L919.1 349.5M890.6 324.1L900.4 332.6M867.2 313.6L854.5 312.2M816.5 308.3L829.4 309.6M791.4 313.6L780.3 320M747.3 339.1L758.5 332.6M730.2 358.2L724.9 369.9M709.4 404.7L714.6 393M706.7 430.2L709.4 442.9M717.3 480.1L714.6 467.6M730.2 502.3L739.7 511M768 536.4L758.5 527.9M791.4 546.8L804.3 548.3M842.1 552.2L829.4 551M867.2 546.8L878.5 540.5M911.4 521.3L900.4 527.9M928.5 502.3L934 490.6M949.3 455.7L944.2 467.6M951.9 430.2L949.5 417.6M993.2 379.7L994.1 392.7M983.8 355.8L975.7 345.8M955.1 313.6L961.5 325M936.3 296.2L924.6 290.7M892 270.6L902.7 278.1M867.5 263L854.6 263.3M816.5 259.2L829.4 261.4M791.2 263L779.7 268.9M743.6 281.7L756.2 278.1M722.4 296.2L714.6 306.5M687.6 333.6L697.4 325M674.8 355.8L672.3 368.6M659.7 404.7L664.8 392.7M657.8 430.2L661.1 442.9M665.5 480.8L664.8 467.8M674.8 504.6L683.2 514.7M703.6 546.9L697.4 535.5M722.4 564.3L734.3 569.8M766.7 589.9L756.2 582.4M791.2 597.4L804.3 597.2M842.1 601.3L829.4 599.1M867.5 597.4L879.2 591.6M915.1 578.8L902.7 582.4M936.3 564.3L944.3 554M971 526.8L961.5 535.5M983.8 504.6L986.6 491.9M998.9 455.8L994.1 467.8M1000.8 430.2L997.8 417.6M1000.8 430.2L998.9 455.8M983.8 504.6L971 526.8M936.3 564.3L915.1 578.8M867.5 597.4L842.1 601.3M791.2 597.4L766.7 589.9M722.4 564.3L703.6 546.9M674.8 504.6L665.5 480.8M657.8 430.2L659.7 404.7M674.8 355.8L687.6 333.6M722.4 296.2L743.6 281.7M791.2 263L816.5 259.2M867.5 263L892 270.6M936.3 296.2L955.1 313.6M983.8 355.8L993.2 379.7M951.9 430.2L949.3 455.7M928.5 502.3L911.4 521.3M867.2 546.8L842.1 552.2M791.4 546.8L768 536.4M730.2 502.3L717.3 480.1M706.7 430.2L709.4 404.7M730.2 358.2L747.3 339.1M791.4 313.6L816.5 308.3M867.2 313.6L890.6 324.1M928.5 358.2L941.3 380.4M903.8 430.2L899.3 455.7M866.6 494.7L842.3 503.6M792.1 494.7L772.3 478.1M754.9 430.2L759.4 404.8M792.1 365.8L816.4 356.9M866.6 365.8L886.4 382.4"/></defs><use href="#b10" stroke="#141517" stroke-width="3.2"/><use href="#b10" stroke="#2c2e32" stroke-width="2.3"/><defs><path id="a10" d="M1000.8 430.2h0M998.9 455.8h0M983.8 504.6h0M971 526.8h0M936.3 564.3h0M915.1 578.8h0M867.5 597.4h0M842.1 601.3h0M791.2 597.4h0M766.7 589.9h0M722.4 564.3h0M703.6 546.9h0M674.8 504.6h0M665.5 480.8h0M657.8 430.2h0M659.7 404.7h0M674.8 355.8h0M687.6 333.6h0M722.4 296.2h0M743.6 281.7h0M791.2 263h0M816.5 259.2h0M867.5 263h0M892 270.6h0M936.3 296.2h0M955.1 313.6h0M983.8 355.8h0M993.2 379.7h0M951.9 430.2h0M949.3 455.7h0M928.5 502.3h0M911.4 521.3h0M867.2 546.8h0M842.1 552.2h0M791.4 546.8h0M768 536.4h0M730.2 502.3h0M717.3 480.1h0M706.7 430.2h0M709.4 404.7h0M730.2 358.2h0M747.3 339.1h0M791.4 313.6h0M816.5 308.3h0M867.2 313.6h0M890.6 324.1h0M928.5 358.2h0M941.3 380.4h0M903.8 430.2h0M899.3 455.7h0M866.6 494.7h0M842.3 503.6h0M792.1 494.7h0M772.3 478.1h0M754.9 430.2h0M759.4 404.8h0M792.1 365.8h0M816.4 356.9h0M866.6 365.8h0M886.4 382.4h0"/></defs><use href="#a10" stroke="#121315" stroke-width="9.8"/><use href="#a10" stroke="#2e2f33" stroke-width="8.4"/><use href="#a10" stroke="#434448" stroke-width="3.5" transform="translate(-1.2 -1.3)"/>
<defs><path id="b9" d="M903.7 417.1L903.8 430.2M894.7 392.4L886.4 382.4M855.1 359.1L866.6 365.8M829.2 354.6L816.4 356.9M780.6 372.3L792.1 365.8M763.7 392.4L759.4 404.8M754.7 443.3L754.9 430.2M763.7 468L772.3 478.1M803.3 501.3L792.1 494.7M829.2 505.9L842.3 503.6M877.8 488.2L866.6 494.7M894.7 468L899.3 455.7M953.1 417.2L951.9 430.2M947.7 391.7L941.3 380.4M921.8 346.9L928.5 358.2M902.4 329.5L890.6 324.1M855.1 308.4L867.2 313.6M829.2 305.7L816.5 308.3M778.6 316.4L791.4 313.6M756 329.5L747.3 339.1M721.4 367.9L730.2 358.2M710.8 391.7L709.4 404.7M705.4 443.2L706.7 430.2M710.8 468.7L717.3 480.1M736.7 513.6L730.2 502.3M756 531L768 536.4M803.3 552L791.4 546.8M829.2 554.8L842.1 552.2M879.9 544L867.2 546.8M902.4 531L911.4 521.3M937.1 492.5L928.5 502.3M947.7 468.7L949.3 455.7M1003 417.2L1000.8 430.2M999.1 391.4L993.2 379.7M980.1 343.1L983.8 355.8M965.4 321.6L955.1 313.6M927.4 286.3L936.3 296.2M904.8 273.2L892 270.6M855.2 257.9L867.5 263M829.2 256L816.5 259.2M777.9 263.7L791.2 263M753.6 273.2L743.6 281.7M710.7 302.5L722.4 296.2M693 321.6L687.6 333.6M667 366.6L674.8 355.8M659.4 391.4L659.7 404.7M655.5 443.2L657.8 430.2M659.4 469L665.5 480.8M678.3 517.3L674.8 504.6M693 538.8L703.6 546.9M731.1 574.2L722.4 564.3M753.6 587.2L766.7 589.9M803.3 602.5L791.2 597.4M829.2 604.4L842.1 601.3M880.6 596.7L867.5 597.4M904.8 587.2L915.1 578.8M947.7 557.9L936.3 564.3M965.4 538.8L971 526.8M991.4 493.9L983.8 504.6M999.1 469L998.9 455.8M999.1 469L991.4 493.9M965.4 538.8L947.7 557.9M904.8 587.2L880.6 596.7M829.2 604.4L803.3 602.5M753.6 587.2L731.1 574.2M693 538.8L678.3 517.3M659.4 469L655.5 443.2M659.4 391.4L667 366.6M693 321.6L710.7 302.5M753.6 273.2L777.9 263.7M829.2 256L855.2 257.9M904.8 273.2L927.4 286.3M965.4 321.6L980.1 343.1M999.1 391.4L1003 417.2M947.7 468.7L937.1 492.5M902.4 531L879.9 544M829.2 554.8L803.3 552M756 531L736.7 513.6M710.8 468.7L705.4 443.2M710.8 391.7L721.4 367.9M756 329.5L778.6 316.4M829.2 305.7L855.1 308.4M902.4 329.5L921.8 346.9M947.7 391.7L953.1 417.2M894.7 468L877.8 488.2M829.2 505.9L803.3 501.3M763.7 468L754.7 443.3M763.7 392.4L780.6 372.3M829.2 354.6L855.1 359.1M894.7 392.4L903.7 417.1"/></defs><use href="#b9" stroke="#141517" stroke-width="3.2"/><use href="#b9" stroke="#2d2f33" stroke-width="2.3"/><defs><path id="a9" d="M999.1 469h0M991.4 493.9h0M965.4 538.8h0M947.7 557.9h0M904.8 587.2h0M880.6 596.7h0M829.2 604.4h0M803.3 602.5h0M753.6 587.2h0M731.1 574.2h0M693 538.8h0M678.3 517.3h0M659.4 469h0M655.5 443.2h0M659.4 391.4h0M667 366.6h0M693 321.6h0M710.7 302.5h0M753.6 273.2h0M777.9 263.7h0M829.2 256h0M855.2 257.9h0M904.8 273.2h0M927.4 286.3h0M965.4 321.6h0M980.1 343.1h0M999.1 391.4h0M1003 417.2h0M947.7 468.7h0M937.1 492.5h0M902.4 531h0M879.9 544h0M829.2 554.8h0M803.3 552h0M756 531h0M736.7 513.6h0M710.8 468.7h0M705.4 443.2h0M710.8 391.7h0M721.4 367.9h0M756 329.5h0M778.6 316.4h0M829.2 305.7h0M855.1 308.4h0M902.4 329.5h0M921.8 346.9h0M947.7 391.7h0M953.1 417.2h0M894.7 468h0M877.8 488.2h0M829.2 505.9h0M803.3 501.3h0M763.7 468h0M754.7 443.3h0M763.7 392.4h0M780.6 372.3h0M829.2 354.6h0M855.1 359.1h0M894.7 392.4h0M903.7 417.1h0"/></defs><use href="#a9" stroke="#121316" stroke-width="9.9"/><use href="#a9" stroke="#2f3034" stroke-width="8.5"/><use href="#a9" stroke="#45464a" stroke-width="3.6" transform="translate(-1.2 -1.3)"/>
<defs><path id="b8" d="M888 380.8L894.7 392.4M867.5 363.6L855.1 359.1M815.8 354.5L829.2 354.6M790.7 363.6L780.6 372.3M756.9 403.9L763.7 392.4M752.2 430.2L754.7 443.3M770.2 479.6L763.7 468M790.7 496.8L803.3 501.3M842.4 505.9L829.2 505.9M867.5 496.8L877.8 488.2M901.3 456.5L894.7 468M906 430.2L903.7 417.1M944.7 378.7L947.7 391.7M931.5 355.8L921.8 346.9M892.4 320.6L902.4 329.5M868.2 309.8L855.1 308.4M815.9 304.3L829.2 305.7M790 309.8L778.6 316.4M744.4 336.1L756 329.5M726.7 355.8L721.4 367.9M705.3 403.9L710.8 391.7M702.5 430.2L705.4 443.2M713.5 481.7L710.8 468.7M726.7 504.6L736.7 513.6M765.8 539.8L756 531M790 550.6L803.3 552M842.3 556.1L829.2 554.8M868.2 550.6L879.9 544M913.8 524.3L902.4 531M931.5 504.6L937.1 492.5M952.9 456.5L947.7 468.7M955.7 430.2L953.1 417.2M998.3 378L999.1 391.4M988.6 353.4L980.1 343.1M958.9 309.8L965.4 321.6M939.5 291.8L927.4 286.3M893.8 265.4L904.8 273.2M868.5 257.6L855.2 257.9M815.9 253.6L829.2 256M789.7 257.6L777.9 263.7M740.6 276.9L753.6 273.2M718.7 291.8L710.7 302.5M682.8 330.5L693 321.6M669.6 353.4L667 366.6M654 403.8L659.4 391.4M652 430.2L655.5 443.2M659.9 482.4L659.4 469M669.6 507L678.3 517.3M699.3 550.6L693 538.8M718.7 568.6L731.1 574.2M764.4 595L753.6 587.2M789.7 602.8L803.3 602.5M842.3 606.8L829.2 604.4M868.5 602.8L880.6 596.7M917.6 583.5L904.8 587.2M939.5 568.6L947.7 557.9M975.4 529.9L965.4 538.8M988.6 507L991.4 493.9M1004.2 456.6L999.1 469M1006.2 430.2L1003 417.2M1006.2 430.2L1004.2 456.6M988.6 507L975.4 529.9M939.5 568.6L917.6 583.5M868.5 602.8L842.3 606.8M789.7 602.8L764.4 595M718.7 568.6L699.3 550.6M669.6 507L659.9 482.4M652 430.2L654 403.8M669.6 353.4L682.8 330.5M718.7 291.8L740.6 276.9M789.7 257.6L815.9 253.6M868.5 257.6L893.8 265.4M939.5 291.8L958.9 309.8M988.6 353.4L998.3 378M955.7 430.2L952.9 456.5M931.5 504.6L913.8 524.3M868.2 550.6L842.3 556.1M790 550.6L765.8 539.8M726.7 504.6L713.5 481.7M702.5 430.2L705.3 403.9M726.7 355.8L744.4 336.1M790 309.8L815.9 304.3M868.2 309.8L892.4 320.6M931.5 355.8L944.7 378.7M906 430.2L901.3 456.5M867.5 496.8L842.4 505.9M790.7 496.8L770.2 479.6M752.2 430.2L756.9 403.9M790.7 363.6L815.8 354.5M867.5 363.6L888 380.8"/></defs><use href="#b8" stroke="#151618" stroke-width="3.2"/><use href="#b8" stroke="#2f3034" stroke-width="2.3"/><defs><path id="a8" d="M1006.2 430.2h0M1004.2 456.6h0M988.6 507h0M975.4 529.9h0M939.5 568.6h0M917.6 583.5h0M868.5 602.8h0M842.3 606.8h0M789.7 602.8h0M764.4 595h0M718.7 568.6h0M699.3 550.6h0M669.6 507h0M659.9 482.4h0M652 430.2h0M654 403.8h0M669.6 353.4h0M682.8 330.5h0M718.7 291.8h0M740.6 276.9h0M789.7 257.6h0M815.9 253.6h0M868.5 257.6h0M893.8 265.4h0M939.5 291.8h0M958.9 309.8h0M988.6 353.4h0M998.3 378h0M955.7 430.2h0M952.9 456.5h0M931.5 504.6h0M913.8 524.3h0M868.2 550.6h0M842.3 556.1h0M790 550.6h0M765.8 539.8h0M726.7 504.6h0M713.5 481.7h0M702.5 430.2h0M705.3 403.9h0M726.7 355.8h0M744.4 336.1h0M790 309.8h0M815.9 304.3h0M868.2 309.8h0M892.4 320.6h0M931.5 355.8h0M944.7 378.7h0M906 430.2h0M901.3 456.5h0M867.5 496.8h0M842.4 505.9h0M790.7 496.8h0M770.2 479.6h0M752.2 430.2h0M756.9 403.9h0M790.7 363.6h0M815.8 354.5h0M867.5 363.6h0M888 380.8h0"/></defs><use href="#a8" stroke="#131416" stroke-width="10.1"/><use href="#a8" stroke="#313236" stroke-width="8.7"/><use href="#a8" stroke="#48494d" stroke-width="3.6" transform="translate(-1.3 -1.4)"/>
<defs><path id="b7" d="M905.9 416.6L906 430.2M896.6 391.1L888 380.8M855.7 356.8L867.5 363.6M829 352L815.8 354.5M778.8 370.3L790.7 363.6M761.3 391.1L756.9 403.9M752 443.7L752.2 430.2M761.3 469.2L770.2 479.6M802.3 503.6L790.7 496.8M829 508.3L842.4 505.9M879.2 490L867.5 496.8M896.6 469.2L901.3 456.5M956.9 416.7L955.7 430.2M951.3 390.4L944.7 378.7M924.6 344.1L931.5 355.8M904.6 326.1L892.4 320.6M855.7 304.3L868.2 309.8M829 301.5L815.9 304.3M776.7 312.6L790 309.8M753.4 326.1L744.4 336.1M717.6 365.8L726.7 355.8M706.6 390.4L705.3 403.9M701 443.6L702.5 430.2M706.6 469.9L713.5 481.7M733.4 516.3L726.7 504.6M753.4 534.3L765.8 539.8M802.2 556L790 550.6M829 558.8L842.3 556.1M881.3 547.7L868.2 550.6M904.6 534.3L913.8 524.3M940.4 494.5L931.5 504.6M951.3 469.9L952.9 456.5M1008.4 416.7L1006.2 430.2M1004.4 390.1L998.3 378M984.8 340.2L988.6 353.4M969.7 318L958.9 309.8M930.4 281.5L939.5 291.8M907.1 268L893.8 265.4M855.8 252.2L868.5 257.6M829 250.2L815.9 253.6M775.9 258.2L789.7 257.6M750.9 268L740.6 276.9M706.6 298.2L718.7 291.8M688.3 318L682.8 330.5M661.5 364.4L669.6 353.4M653.5 390.1L654 403.8M649.5 443.6L652 430.2M653.5 470.2L659.9 482.4M673.1 520.2L669.6 507M688.3 542.4L699.3 550.6M727.6 578.9L718.7 568.6M750.9 592.3L764.4 595M802.2 608.1L789.7 602.8M829 610.1L842.3 606.8M882 602.1L868.5 602.8M907.1 592.3L917.6 583.5M951.4 562.1L939.5 568.6M969.7 542.4L975.4 529.9M996.5 495.9L988.6 507M1004.4 470.2L1004.2 456.6M1004.4 470.2L996.5 495.9M969.7 542.4L951.4 562.1M907.1 592.3L882 602.1M829 610.1L802.2 608.1M750.9 592.3L727.6 578.9M688.3 542.4L673.1 520.2M653.5 470.2L649.5 443.6M653.5 390.1L661.5 364.4M688.3 318L706.6 298.2M750.9 268L775.9 258.2M829 250.2L855.8 252.2M907.1 268L930.4 281.5M969.7 318L984.8 340.2M1004.4 390.1L1008.4 416.7M951.3 469.9L940.4 494.5M904.6 534.3L881.3 547.7M829 558.8L802.2 556M753.4 534.3L733.4 516.3M706.6 469.9L701 443.6M706.6 390.4L717.6 365.8M753.4 326.1L776.7 312.6M829 301.5L855.7 304.3M904.6 326.1L924.6 344.1M951.3 390.4L956.9 416.7M896.6 469.2L879.2 490M829 508.3L802.3 503.6M761.3 469.2L752 443.7M761.3 391.1L778.8 370.3M829 352L855.7 356.8M896.6 391.1L905.9 416.6"/></defs><use href="#b7" stroke="#151618" stroke-width="3.2"/><use href="#b7" stroke="#303135" stroke-width="2.3"/><defs><path id="a7" d="M1004.4 470.2h0M996.5 495.9h0M969.7 542.4h0M951.4 562.1h0M907.1 592.3h0M882 602.1h0M829 610.1h0M802.2 608.1h0M750.9 592.3h0M727.6 578.9h0M688.3 542.4h0M673.1 520.2h0M653.5 470.2h0M649.5 443.6h0M653.5 390.1h0M661.5 364.4h0M688.3 318h0M706.6 298.2h0M750.9 268h0M775.9 258.2h0M829 250.2h0M855.8 252.2h0M907.1 268h0M930.4 281.5h0M969.7 318h0M984.8 340.2h0M1004.4 390.1h0M1008.4 416.7h0M951.3 469.9h0M940.4 494.5h0M904.6 534.3h0M881.3 547.7h0M829 558.8h0M802.2 556h0M753.4 534.3h0M733.4 516.3h0M706.6 469.9h0M701 443.6h0M706.6 390.4h0M717.6 365.8h0M753.4 326.1h0M776.7 312.6h0M829 301.5h0M855.7 304.3h0M904.6 326.1h0M924.6 344.1h0M951.3 390.4h0M956.9 416.7h0M896.6 469.2h0M879.2 490h0M829 508.3h0M802.3 503.6h0M761.3 469.2h0M752 443.7h0M761.3 391.1h0M778.8 370.3h0M829 352h0M855.7 356.8h0M896.6 391.1h0M905.9 416.6h0"/></defs><use href="#a7" stroke="#131416" stroke-width="10.2"/><use href="#a7" stroke="#323337" stroke-width="8.8"/><use href="#a7" stroke="#4a4b4f" stroke-width="3.7" transform="translate(-1.3 -1.4)"/>
<defs><path id="b6" d="M889.7 379.1L896.6 391.1M868.6 361.4L855.7 356.8M815.1 351.9L829 352M789.1 361.4L778.8 370.3M754.2 403L761.3 391.1M749.4 430.2L752 443.7M768 481.2L761.3 469.2M789.1 498.9L802.3 503.6M842.6 508.4L829 508.3M868.6 498.9L879.2 490M903.5 457.3L896.6 469.2M908.3 430.2L905.9 416.6M948.3 376.9L951.3 390.4M934.7 353.3L924.6 344.1M894.3 316.9L904.6 326.1M869.3 305.8L855.7 304.3M815.2 300.1L829 301.5M788.4 305.8L776.7 312.6M741.3 332.9L753.4 326.1M723 353.3L717.6 365.8M700.9 403L706.6 390.4M698.1 430.2L701 443.6M709.4 483.4L706.6 469.9M723 507L733.4 516.3M763.5 543.4L753.4 534.3M788.4 554.6L802.2 556M842.5 560.2L829 558.8M869.3 554.6L881.3 547.7M916.4 527.4L904.6 534.3M934.7 507L940.4 494.5M956.8 457.3L951.3 469.9M959.7 430.2L956.9 416.7M1003.7 376.2L1004.4 390.1M993.7 350.8L984.8 340.2M963 305.7L969.7 318M942.9 287.1L930.4 281.5M895.7 259.8L907.1 268M869.6 251.8L855.8 252.2M815.2 247.7L829 250.2M788.1 251.8L775.9 258.2M737.4 271.7L750.9 268M714.8 287.1L706.6 298.2M677.7 327.1L688.3 318M664 350.8L661.5 364.4M647.9 402.9L653.5 390.1M645.9 430.2L649.5 443.6M654 484.1L653.5 470.2M664 509.5L673.1 520.2M694.7 554.6L688.3 542.4M714.8 573.2L727.6 578.9M762 600.5L750.9 592.3M788.1 608.5L802.2 608.1M842.5 612.6L829 610.1M869.6 608.5L882 602.1M920.3 588.6L907.1 592.3M942.9 573.2L951.4 562.1M980 533.2L969.7 542.4M993.7 509.5L996.5 495.9M1009.8 457.4L1004.4 470.2M1011.8 430.2L1008.4 416.7M1011.8 430.2L1009.8 457.4M993.7 509.5L980 533.2M942.9 573.2L920.3 588.6M869.6 608.5L842.5 612.6M788.1 608.5L762 600.5M714.8 573.2L694.7 554.6M664 509.5L654 484.1M645.9 430.2L647.9 402.9M664 350.8L677.7 327.1M714.8 287.1L737.4 271.7M788.1 251.8L815.2 247.7M869.6 251.8L895.7 259.8M942.9 287.1L963 305.7M993.7 350.8L1003.7 376.2M959.7 430.2L956.8 457.3M934.7 507L916.4 527.4M869.3 554.6L842.5 560.2M788.4 554.6L763.5 543.4M723 507L709.4 483.4M698.1 430.2L700.9 403M723 353.3L741.3 332.9M788.4 305.8L815.2 300.1M869.3 305.8L894.3 316.9M934.7 353.3L948.3 376.9M908.3 430.2L903.5 457.3M868.6 498.9L842.6 508.4M789.1 498.9L768 481.2M749.4 430.2L754.2 403M789.1 361.4L815.1 351.9M868.6 361.4L889.7 379.1"/></defs><use href="#b6" stroke="#151619" stroke-width="3.2"/><use href="#b6" stroke="#313337" stroke-width="2.3"/><defs><path id="a6" d="M1011.8 430.2h0M1009.8 457.4h0M993.7 509.5h0M980 533.2h0M942.9 573.2h0M920.3 588.6h0M869.6 608.5h0M842.5 612.6h0M788.1 608.5h0M762 600.5h0M714.8 573.2h0M694.7 554.6h0M664 509.5h0M654 484.1h0M645.9 430.2h0M647.9 402.9h0M664 350.8h0M677.7 327.1h0M714.8 287.1h0M737.4 271.7h0M788.1 251.8h0M815.2 247.7h0M869.6 251.8h0M895.7 259.8h0M942.9 287.1h0M963 305.7h0M993.7 350.8h0M1003.7 376.2h0M959.7 430.2h0M956.8 457.3h0M934.7 507h0M916.4 527.4h0M869.3 554.6h0M842.5 560.2h0M788.4 554.6h0M763.5 543.4h0M723 507h0M709.4 483.4h0M698.1 430.2h0M700.9 403h0M723 353.3h0M741.3 332.9h0M788.4 305.8h0M815.2 300.1h0M869.3 305.8h0M894.3 316.9h0M934.7 353.3h0M948.3 376.9h0M908.3 430.2h0M903.5 457.3h0M868.6 498.9h0M842.6 508.4h0M789.1 498.9h0M768 481.2h0M749.4 430.2h0M754.2 403h0M789.1 361.4h0M815.1 351.9h0M868.6 361.4h0M889.7 379.1h0"/></defs><use href="#a6" stroke="#131417" stroke-width="10.4"/><use href="#a6" stroke="#333438" stroke-width="9"/><use href="#a6" stroke="#4c4d51" stroke-width="3.7" transform="translate(-1.3 -1.4)"/>
<defs><path id="b5" d="M908.3 416.1L908.3 430.2M898.7 389.7L889.7 379.1M856.4 354.2L868.6 361.4M828.7 349.3L815.1 351.9M776.8 368.2L789.1 361.4M758.8 389.7L754.2 403M749.2 444.2L749.4 430.2M758.8 470.5L768 481.2M801.1 506L789.1 498.9M828.7 510.9L842.6 508.4M880.7 492L868.6 498.9M898.7 470.5L903.5 457.3M961 416.2L959.7 430.2M955.2 389L948.3 376.9M927.6 341.1L934.7 353.3M906.9 322.5L894.3 316.9M856.4 300L869.3 305.8M828.7 297.1L815.2 300.1M774.6 308.6L788.4 305.8M750.5 322.5L741.3 332.9M713.5 363.6L723 353.3M702.2 389L700.9 403M696.4 444L698.1 430.2M702.2 471.2L709.4 483.4M729.9 519.1L723 507M750.5 537.7L763.5 543.4M801.1 560.2L788.4 554.6M828.7 563.2L842.5 560.2M882.8 551.7L869.3 554.6M906.9 537.7L916.4 527.4M943.9 496.6L934.7 507M955.2 471.2L956.8 457.3M1014.3 416.2L1011.8 430.2M1010.2 388.7L1003.7 376.2M989.9 337.1L993.7 350.8M974.2 314.1L963 305.7M933.6 276.4L942.9 287.1M909.5 262.5L895.7 259.8M856.5 246.1L869.6 251.8M828.7 244L815.2 247.7M773.9 252.3L788.1 251.8M748 262.5L737.4 271.7M702.1 293.7L714.8 287.1M683.2 314.1L677.7 327.1M655.5 362.1L664 350.8M647.3 388.7L647.9 402.9M643.2 444L645.9 430.2M647.3 471.5L654 484.1M667.6 523.2L664 509.5M683.2 546.2L694.7 554.6M723.9 583.9L714.8 573.2M748 597.8L762 600.5M801 614.1L788.1 608.5M828.7 616.2L842.5 612.6M883.6 608L869.6 608.5M909.5 597.8L920.3 588.6M955.3 566.5L942.9 573.2M974.2 546.2L980 533.2M1002 498.1L993.7 509.5M1010.2 471.5L1009.8 457.4M1010.2 471.5L1002 498.1M974.2 546.2L955.3 566.5M909.5 597.8L883.6 608M828.7 616.2L801 614.1M748 597.8L723.9 583.9M683.2 546.2L667.6 523.2M647.3 471.5L643.2 444M647.3 388.7L655.5 362.1M683.2 314.1L702.1 293.7M748 262.5L773.9 252.3M828.7 244L856.5 246.1M909.5 262.5L933.6 276.4M974.2 314.1L989.9 337.1M1010.2 388.7L1014.3 416.2M955.2 471.2L943.9 496.6M906.9 537.7L882.8 551.7M828.7 563.2L801.1 560.2M750.5 537.7L729.9 519.1M702.2 471.2L696.4 444M702.2 389L713.5 363.6M750.5 322.5L774.6 308.6M828.7 297.1L856.4 300M906.9 322.5L927.6 341.1M955.2 389L961 416.2M898.7 470.5L880.7 492M828.7 510.9L801.1 506M758.8 470.5L749.2 444.2M758.8 389.7L776.8 368.2M828.7 349.3L856.4 354.2M898.7 389.7L908.3 416.1"/></defs><use href="#b5" stroke="#161719" stroke-width="3.3"/><use href="#b5" stroke="#333438" stroke-width="2.4"/><defs><path id="a5" d="M1010.2 471.5h0M1002 498.1h0M974.2 546.2h0M955.3 566.5h0M909.5 597.8h0M883.6 608h0M828.7 616.2h0M801 614.1h0M748 597.8h0M723.9 583.9h0M683.2 546.2h0M667.6 523.2h0M647.3 471.5h0M643.2 444h0M647.3 388.7h0M655.5 362.1h0M683.2 314.1h0M702.1 293.7h0M748 262.5h0M773.9 252.3h0M828.7 244h0M856.5 246.1h0M909.5 262.5h0M933.6 276.4h0M974.2 314.1h0M989.9 337.1h0M1010.2 388.7h0M1014.3 416.2h0M955.2 471.2h0M943.9 496.6h0M906.9 537.7h0M882.8 551.7h0M828.7 563.2h0M801.1 560.2h0M750.5 537.7h0M729.9 519.1h0M702.2 471.2h0M696.4 444h0M702.2 389h0M713.5 363.6h0M750.5 322.5h0M774.6 308.6h0M828.7 297.1h0M856.4 300h0M906.9 322.5h0M927.6 341.1h0M955.2 389h0M961 416.2h0M898.7 470.5h0M880.7 492h0M828.7 510.9h0M801.1 506h0M758.8 470.5h0M749.2 444.2h0M758.8 389.7h0M776.8 368.2h0M828.7 349.3h0M856.4 354.2h0M898.7 389.7h0M908.3 416.1h0"/></defs><use href="#a5" stroke="#141517" stroke-width="10.5"/><use href="#a5" stroke="#35363a" stroke-width="9.1"/><use href="#a5" stroke="#4f5054" stroke-width="3.8" transform="translate(-1.3 -1.4)"/>
<defs><path id="b4" d="M891.5 377.3L898.7 389.7M869.7 358.9L856.4 354.2M814.3 349.2L828.7 349.3M787.5 358.9L776.8 368.2M751.4 402L758.8 389.7M746.4 430.1L749.2 444.2M765.6 482.9L758.8 470.5M787.5 501.3L801.1 506M842.9 511L828.7 510.9M869.7 501.3L880.7 492M905.8 458.2L898.7 470.5M910.8 430.1L908.3 416.1M952.2 375.1L955.2 389M938.1 350.6L927.6 341.1M896.3 312.9L906.9 322.5M870.4 301.4L856.4 300M814.4 295.5L828.7 297.1M786.8 301.4L774.6 308.6M738 329.5L750.5 322.5M719.1 350.6L713.5 363.6M696.2 402L702.2 389M693.3 430.1L696.4 444M705 485.1L702.2 471.2M719.1 509.6L729.9 519.1M760.9 547.3L750.5 537.7M786.8 558.8L801.1 560.2M842.7 564.7L828.7 563.2M870.4 558.8L882.8 551.7M919.1 530.7L906.9 537.7M938.1 509.6L943.9 496.6M961 458.2L955.2 471.2M963.9 430.1L961 416.2M1009.5 374.3L1010.2 388.7M999.2 348L989.9 337.1M967.4 301.3L974.2 314.1M946.6 282.1L933.6 276.4M897.8 253.9L909.5 262.5M870.7 245.5L856.5 246.1M814.4 241.3L828.7 244M786.5 245.5L773.9 252.3M733.9 266.2L748 262.5M710.6 282.1L702.1 293.7M672.2 323.5L683.2 314.1M658 348L655.5 362.1M641.4 401.9L647.3 388.7M639.3 430.1L643.2 444M647.7 485.9L647.3 471.5M658 512.2L667.6 523.2M689.8 558.9L683.2 546.2M710.6 578.1L723.9 583.9M759.4 606.3L748 597.8M786.5 614.7L801 614.1M842.7 618.9L828.7 616.2M870.7 614.7L883.6 608M923.2 594.1L909.5 597.8M946.6 578.1L955.3 566.5M985 536.7L974.2 546.2M999.2 512.2L1002 498.1M1015.8 458.3L1010.2 471.5M1017.9 430.1L1014.3 416.2M1017.9 430.1L1015.8 458.3M999.2 512.2L985 536.7M946.6 578.1L923.2 594.1M870.7 614.7L842.7 618.9M786.5 614.7L759.4 606.3M710.6 578.1L689.8 558.9M658 512.2L647.7 485.9M639.3 430.1L641.4 401.9M658 348L672.2 323.5M710.6 282.1L733.9 266.2M786.5 245.5L814.4 241.3M870.7 245.5L897.8 253.9M946.6 282.1L967.4 301.3M999.2 348L1009.5 374.3M963.9 430.1L961 458.2M938.1 509.6L919.1 530.7M870.4 558.8L842.7 564.7M786.8 558.8L760.9 547.3M719.1 509.6L705 485.1M693.3 430.1L696.2 402M719.1 350.6L738 329.5M786.8 301.4L814.4 295.5M870.4 301.4L896.3 312.9M938.1 350.6L952.2 375.1M910.8 430.1L905.8 458.2M869.7 501.3L842.9 511M787.5 501.3L765.6 482.9M746.4 430.1L751.4 402M787.5 358.9L814.3 349.2M869.7 358.9L891.5 377.3"/></defs><use href="#b4" stroke="#16171a" stroke-width="3.3"/><use href="#b4" stroke="#34363a" stroke-width="2.4"/><defs><path id="a4" d="M1017.9 430.1h0M1015.8 458.3h0M999.2 512.2h0M985 536.7h0M946.6 578.1h0M923.2 594.1h0M870.7 614.7h0M842.7 618.9h0M786.5 614.7h0M759.4 606.3h0M710.6 578.1h0M689.8 558.9h0M658 512.2h0M647.7 485.9h0M639.3 430.1h0M641.4 401.9h0M658 348h0M672.2 323.5h0M710.6 282.1h0M733.9 266.2h0M786.5 245.5h0M814.4 241.3h0M870.7 245.5h0M897.8 253.9h0M946.6 282.1h0M967.4 301.3h0M999.2 348h0M1009.5 374.3h0M963.9 430.1h0M961 458.2h0M938.1 509.6h0M919.1 530.7h0M870.4 558.8h0M842.7 564.7h0M786.8 558.8h0M760.9 547.3h0M719.1 509.6h0M705 485.1h0M693.3 430.1h0M696.2 402h0M719.1 350.6h0M738 329.5h0M786.8 301.4h0M814.4 295.5h0M870.4 301.4h0M896.3 312.9h0M938.1 350.6h0M952.2 375.1h0M910.8 430.1h0M905.8 458.2h0M869.7 501.3h0M842.9 511h0M787.5 501.3h0M765.6 482.9h0M746.4 430.1h0M751.4 402h0M787.5 358.9h0M814.3 349.2h0M869.7 358.9h0M891.5 377.3h0"/></defs><use href="#a4" stroke="#141518" stroke-width="10.7"/><use href="#a4" stroke="#36373b" stroke-width="9.3"/><use href="#a4" stroke="#525357" stroke-width="3.9" transform="translate(-1.4 -1.5)"/>
<defs><path id="b3" d="M910.8 415.6L910.8 430.1M900.9 388.3L891.5 377.3M857.1 351.5L869.7 358.9M828.4 346.4L814.3 349.2M774.7 366L787.5 358.9M756 388.3L751.4 402M746.1 444.6L746.4 430.1M756 471.9L765.6 482.9M799.8 508.7L787.5 501.3M828.4 513.7L842.9 511M882.2 494.1L869.7 501.3M900.9 471.9L905.8 458.2M965.4 415.7L963.9 430.1M959.4 387.5L952.2 375.1M930.8 337.9L938.1 350.6M909.4 318.7L896.3 312.9M857.1 295.4L870.4 301.4M828.4 292.4L814.4 295.5M772.4 304.3L786.8 301.4M747.5 318.7L738 329.5M709.2 361.2L719.1 350.6M697.5 387.5L696.2 402M691.5 444.5L693.3 430.1M697.5 472.6L705 485.1M726.1 522.2L719.1 509.6M747.5 541.5L760.9 547.3M799.8 564.8L786.8 558.8M828.4 567.8L842.7 564.7M884.5 555.9L870.4 558.8M909.4 541.5L919.1 530.7M947.7 498.9L938.1 509.6M959.4 472.6L961 458.2M1020.6 415.7L1017.9 430.1M1016.3 387.2L1009.5 374.3M995.3 333.8L999.2 348M979.1 310L967.4 301.3M937 270.9L946.6 282.1M912 256.5L897.8 253.9M857.2 239.6L870.7 245.5M828.4 237.4L814.4 241.3M771.7 246L786.5 245.5M744.9 256.5L733.9 266.2M697.4 288.9L710.6 282.1M677.8 310L672.2 323.5M649.1 359.7L658 348M640.6 387.2L641.4 401.9M636.3 444.5L639.3 430.1M640.6 472.9L647.7 485.9M661.6 526.4L658 512.2M677.8 550.2L689.8 558.9M719.9 589.3L710.6 578.1M744.9 603.7L759.4 606.3M799.7 620.6L786.5 614.7M828.4 622.7L842.7 618.9M885.2 614.2L870.7 614.7M912 603.7L923.2 594.1M959.5 571.3L946.6 578.1M979.1 550.2L985 536.7M1007.8 500.5L999.2 512.2M1016.3 472.9L1015.8 458.3M1016.3 472.9L1007.8 500.5M979.1 550.2L959.5 571.3M912 603.7L885.2 614.2M828.4 622.7L799.7 620.6M744.9 603.7L719.9 589.3M677.8 550.2L661.6 526.4M640.6 472.9L636.3 444.5M640.6 387.2L649.1 359.7M677.8 310L697.4 288.9M744.9 256.5L771.7 246M828.4 237.4L857.2 239.6M912 256.5L937 270.9M979.1 310L995.3 333.8M1016.3 387.2L1020.6 415.7M959.4 472.6L947.7 498.9M909.4 541.5L884.5 555.9M828.4 567.8L799.8 564.8M747.5 541.5L726.1 522.2M697.5 472.6L691.5 444.5M697.5 387.5L709.2 361.2M747.5 318.7L772.4 304.3M828.4 292.4L857.1 295.4M909.4 318.7L930.8 337.9M959.4 387.5L965.4 415.7M900.9 471.9L882.2 494.1M828.4 513.7L799.8 508.7M756 471.9L746.1 444.6M756 388.3L774.7 366M828.4 346.4L857.1 351.5M900.9 388.3L910.8 415.6"/></defs><use href="#b3" stroke="#17181b" stroke-width="3.3"/><use href="#b3" stroke="#36383c" stroke-width="2.4"/><g fill="url(#s2)" stroke="#19191b" stroke-width="0.7"><circle cx="1016.3" cy="472.9" r="4.9"/><circle cx="1007.8" cy="500.5" r="4.9"/><circle cx="979.1" cy="550.2" r="4.9"/><circle cx="959.5" cy="571.3" r="4.9"/><circle cx="912" cy="603.7" r="4.9"/><circle cx="885.2" cy="614.2" r="4.9"/><circle cx="828.4" cy="622.7" r="4.9"/><circle cx="799.7" cy="620.6" r="4.9"/><circle cx="744.9" cy="603.7" r="4.9"/><circle cx="719.9" cy="589.3" r="4.9"/><circle cx="677.8" cy="550.2" r="4.9"/><circle cx="661.6" cy="526.4" r="4.9"/><circle cx="640.6" cy="472.9" r="4.9"/><circle cx="636.3" cy="444.5" r="4.9"/><circle cx="640.6" cy="387.2" r="4.9"/><circle cx="649.1" cy="359.7" r="4.9"/><circle cx="677.8" cy="310" r="4.9"/><circle cx="697.4" cy="288.9" r="4.9"/><circle cx="744.9" cy="256.5" r="4.9"/><circle cx="771.7" cy="246" r="4.9"/><circle cx="828.4" cy="237.4" r="4.9"/><circle cx="857.2" cy="239.6" r="4.9"/><circle cx="912" cy="256.5" r="4.9"/><circle cx="937" cy="270.9" r="4.9"/><circle cx="979.1" cy="310" r="4.9"/><circle cx="995.3" cy="333.8" r="4.9"/><circle cx="1016.3" cy="387.2" r="4.9"/><circle cx="1020.6" cy="415.7" r="4.9"/><circle cx="959.4" cy="472.6" r="4.9"/><circle cx="947.7" cy="498.9" r="4.9"/><circle cx="909.4" cy="541.5" r="4.9"/><circle cx="884.5" cy="555.9" r="4.9"/><circle cx="828.4" cy="567.8" r="4.9"/><circle cx="799.8" cy="564.8" r="4.9"/><circle cx="747.5" cy="541.5" r="4.9"/><circle cx="726.1" cy="522.2" r="4.9"/><circle cx="697.5" cy="472.6" r="4.9"/><circle cx="691.5" cy="444.5" r="4.9"/><circle cx="697.5" cy="387.5" r="4.9"/><circle cx="709.2" cy="361.2" r="4.9"/><circle cx="747.5" cy="318.7" r="4.9"/><circle cx="772.4" cy="304.3" r="4.9"/><circle cx="828.4" cy="292.4" r="4.9"/><circle cx="857.1" cy="295.4" r="4.9"/><circle cx="909.4" cy="318.7" r="4.9"/><circle cx="930.8" cy="337.9" r="4.9"/><circle cx="959.4" cy="387.5" r="4.9"/><circle cx="965.4" cy="415.7" r="4.9"/><circle cx="900.9" cy="471.9" r="4.9"/><circle cx="882.2" cy="494.1" r="4.9"/><circle cx="828.4" cy="513.7" r="4.9"/><circle cx="799.8" cy="508.7" r="4.9"/><circle cx="756" cy="471.9" r="4.9"/><circle cx="746.1" cy="444.6" r="4.9"/><circle cx="756" cy="388.3" r="4.9"/><circle cx="774.7" cy="366" r="4.9"/><circle cx="828.4" cy="346.4" r="4.9"/><circle cx="857.1" cy="351.5" r="4.9"/><circle cx="900.9" cy="388.3" r="4.9"/><circle cx="910.8" cy="415.6" r="4.9"/></g>
<defs><path id="b2" d="M893.5 375.3L900.9 388.3M870.9 356.3L857.1 351.5M813.5 346.2L828.4 346.4M785.7 356.3L774.7 366M748.3 400.9L756 388.3M743.2 430.1L746.1 444.6M763.1 484.8L756 471.9M785.7 503.8L799.8 508.7M843.1 513.9L828.4 513.7M870.9 503.8L882.2 494.1M908.3 459.2L900.9 471.9M913.4 430.1L910.8 415.6M956.4 373L959.4 387.5M941.7 347.7L930.8 337.9M898.4 308.6L909.4 318.7M871.6 296.7L857.1 295.4M813.7 290.6L828.4 292.4M785 296.7L772.4 304.3M734.5 325.9L747.5 318.7M714.9 347.7L709.2 361.2M691.2 400.9L697.5 387.5M688.1 430.1L691.5 444.5M700.2 487.1L697.5 472.6M714.9 512.5L726.1 522.2M758.2 551.5L747.5 541.5M785 563.4L799.8 564.8M843 569.5L828.4 567.8M871.6 563.4L884.5 555.9M922.1 534.2L909.4 541.5M941.7 512.5L947.7 498.9M965.4 459.2L959.4 472.6M968.5 430.1L965.4 415.7M1015.7 372.3L1016.3 387.2M1005 345L995.3 333.8M972.1 296.7L979.1 310M950.6 276.7L937 270.9M900 247.5L912 256.5M871.9 238.9L857.2 239.6M813.6 234.5L828.4 237.4M784.7 238.9L771.7 246M730.3 260.2L744.9 256.5M706 276.7L697.4 288.9M666.3 319.6L677.8 310M651.6 345L649.1 359.7M634.4 400.8L640.6 387.2M632.2 430.1L636.3 444.5M640.9 487.9L640.6 472.9M651.6 515.1L661.6 526.4M684.5 563.4L677.8 550.2M706 583.4L719.9 589.3M756.7 612.6L744.9 603.7M784.7 621.2L799.7 620.6M843 625.6L828.4 622.7M871.9 621.2L885.2 614.2M926.4 599.9L912 603.7M950.6 583.4L959.5 571.3M990.3 540.5L979.1 550.2M1005 515.1L1007.8 500.5M1022.2 459.3L1016.3 472.9M1024.4 430.1L1020.6 415.7M1024.4 430.1L1022.2 459.3M1005 515.1L990.3 540.5M950.6 583.4L926.4 599.9M871.9 621.2L843 625.6M784.7 621.2L756.7 612.6M706 583.4L684.5 563.4M651.6 515.1L640.9 487.9M632.2 430.1L634.4 400.8M651.6 345L666.3 319.6M706 276.7L730.3 260.2M784.7 238.9L813.6 234.5M871.9 238.9L900 247.5M950.6 276.7L972.1 296.7M1005 345L1015.7 372.3M968.5 430.1L965.4 459.2M941.7 512.5L922.1 534.2M871.6 563.4L843 569.5M785 563.4L758.2 551.5M714.9 512.5L700.2 487.1M688.1 430.1L691.2 400.9M714.9 347.7L734.5 325.9M785 296.7L813.7 290.6M871.6 296.7L898.4 308.6M941.7 347.7L956.4 373M913.4 430.1L908.3 459.2M870.9 503.8L843.1 513.9M785.7 503.8L763.1 484.8M743.2 430.1L748.3 400.9M785.7 356.3L813.5 346.2M870.9 356.3L893.5 375.3"/></defs><use href="#b2" stroke="#18191b" stroke-width="3.3"/><use href="#b2" stroke="#383a3e" stroke-width="2.4"/><g fill="url(#s2)" stroke="#19191b" stroke-width="0.7"><circle cx="1024.4" cy="430.1" r="5"/><circle cx="1022.2" cy="459.3" r="5"/><circle cx="1005" cy="515.1" r="5"/><circle cx="990.3" cy="540.5" r="5"/><circle cx="950.6" cy="583.4" r="5"/><circle cx="926.4" cy="599.9" r="5"/><circle cx="871.9" cy="621.2" r="5"/><circle cx="843" cy="625.6" r="5"/><circle cx="784.7" cy="621.2" r="5"/><circle cx="756.7" cy="612.6" r="5"/><circle cx="706" cy="583.4" r="5"/><circle cx="684.5" cy="563.4" r="5"/><circle cx="651.6" cy="515.1" r="5"/><circle cx="640.9" cy="487.9" r="5"/><circle cx="632.2" cy="430.1" r="5"/><circle cx="634.4" cy="400.8" r="5"/><circle cx="651.6" cy="345" r="5"/><circle cx="666.3" cy="319.6" r="5"/><circle cx="706" cy="276.7" r="5"/><circle cx="730.3" cy="260.2" r="5"/><circle cx="784.7" cy="238.9" r="5"/><circle cx="813.6" cy="234.5" r="5"/><circle cx="871.9" cy="238.9" r="5"/><circle cx="900" cy="247.5" r="5"/><circle cx="950.6" cy="276.7" r="5"/><circle cx="972.1" cy="296.7" r="5"/><circle cx="1005" cy="345" r="5"/><circle cx="1015.7" cy="372.3" r="5"/><circle cx="968.5" cy="430.1" r="5"/><circle cx="965.4" cy="459.2" r="5"/><circle cx="941.7" cy="512.5" r="5"/><circle cx="922.1" cy="534.2" r="5"/><circle cx="871.6" cy="563.4" r="5"/><circle cx="843" cy="569.5" r="5"/><circle cx="785" cy="563.4" r="5"/><circle cx="758.2" cy="551.5" r="5"/><circle cx="714.9" cy="512.5" r="5"/><circle cx="700.2" cy="487.1" r="5"/><circle cx="688.1" cy="430.1" r="5"/><circle cx="691.2" cy="400.9" r="5"/><circle cx="714.9" cy="347.7" r="5"/><circle cx="734.5" cy="325.9" r="5"/><circle cx="785" cy="296.7" r="5"/><circle cx="813.7" cy="290.6" r="5"/><circle cx="871.6" cy="296.7" r="5"/><circle cx="898.4" cy="308.6" r="5"/><circle cx="941.7" cy="347.7" r="5"/><circle cx="956.4" cy="373" r="5"/><circle cx="913.4" cy="430.1" r="5"/><circle cx="908.3" cy="459.2" r="5"/><circle cx="870.9" cy="503.8" r="5"/><circle cx="843.1" cy="513.9" r="5"/><circle cx="785.7" cy="503.8" r="5"/><circle cx="763.1" cy="484.8" r="5"/><circle cx="743.2" cy="430.1" r="5"/><circle cx="748.3" cy="400.9" r="5"/><circle cx="785.7" cy="356.3" r="5"/><circle cx="813.5" cy="346.2" r="5"/><circle cx="870.9" cy="356.3" r="5"/><circle cx="893.5" cy="375.3" r="5"/></g>
<defs><path id="b1" d="M913.5 415L913.4 430.1M903.2 386.7L893.5 375.3M857.8 348.6L870.9 356.3M828.2 343.3L813.5 346.2M772.4 363.6L785.7 356.3M753.1 386.7L748.3 400.9M742.8 445.1L743.2 430.1M753.1 473.4L763.1 484.8M798.5 511.5L785.7 503.8M828.2 516.7L843.1 513.9M883.9 496.4L870.9 503.8M903.2 473.4L908.3 459.2M970.1 415.1L968.5 430.1M963.9 385.9L956.4 373M934.2 334.5L941.7 347.7M912.1 314.5L898.4 308.6M857.8 290.4L871.6 296.7M828.2 287.3L813.7 290.6M770.1 299.6L785 296.7M744.3 314.5L734.5 325.9M704.5 358.7L714.9 347.7M692.4 385.9L691.2 400.9M686.2 444.9L688.1 430.1M692.4 474.1L700.2 487.1M722.1 525.5L714.9 512.5M744.3 545.5L758.2 551.5M798.5 569.7L785 563.4M828.2 572.8L843 569.5M886.2 560.4L871.6 563.4M912.1 545.5L922.1 534.2M951.8 501.4L941.7 512.5M963.9 474.1L965.4 459.2M1027.3 415.1L1024.4 430.1M1022.8 385.6L1015.7 372.3M1001.1 330.2L1005 345M984.3 305.5L972.1 296.7M940.6 265L950.6 276.7M914.8 250.1L900 247.5M857.9 232.6L871.9 238.9M828.2 230.3L813.6 234.5M769.3 239.2L784.7 238.9M741.5 250.1L730.3 260.2M692.3 283.6L706 276.7M672 305.5L666.3 319.6M642.3 357.1L651.6 345M633.5 385.6L634.4 400.8M629 444.9L632.2 430.1M633.5 474.5L640.9 487.9M655.2 529.9L651.6 515.1M672 554.5L684.5 563.4M715.7 595L706 583.4M741.5 609.9L756.7 612.6M798.4 627.5L784.7 621.2M828.2 629.7L843 625.6M887 620.8L871.9 621.2M914.8 609.9L926.4 599.9M964 576.4L950.6 583.4M984.3 554.5L990.3 540.5M1014 503L1005 515.1M1022.8 474.5L1022.2 459.3M1022.8 474.5L1014 503M1022.8 474.5L1029.1 460.3M1014 503L1011.3 518.3M984.3 554.5L964 576.4M984.3 554.5L996.1 544.6M964 576.4L954.8 589M914.8 609.9L887 620.8M914.8 609.9L929.7 606.1M887 620.8L873.3 628.3M828.2 629.7L798.4 627.5M828.2 629.7L843.2 632.8M798.4 627.5L782.7 628.3M741.5 609.9L715.7 595M741.5 609.9L753.7 619.3M715.7 595L701.2 589M672 554.5L655.2 529.9M672 554.5L678.9 568.3M655.2 529.9L644.7 518.3M633.5 474.5L629 444.9M633.5 474.5L633.6 490M629 444.9L624.6 430M633.5 385.6L642.3 357.1M633.5 385.6L626.9 399.7M642.3 357.1L644.7 341.7M672 305.5L692.3 283.6M672 305.5L659.9 315.4M692.3 283.6L701.2 271M741.5 250.1L769.3 239.2M741.5 250.1L726.3 253.9M769.3 239.2L782.7 231.7M828.2 230.3L857.9 232.6M828.2 230.3L812.8 227.2M857.9 232.6L873.3 231.7M914.8 250.1L940.6 265M914.8 250.1L902.3 240.7M940.6 265L954.8 271M984.3 305.5L1001.1 330.2M984.3 305.5L977.1 291.7M1001.1 330.2L1011.3 341.7M1022.8 385.6L1027.3 415.1M1022.8 385.6L1022.4 370M1027.3 415.1L1031.4 430M963.9 474.1L951.8 501.4M963.9 474.1L970.2 460.2M951.8 501.4L945.6 515.5M912.1 545.5L886.2 560.4M912.1 545.5L925.3 538.1M886.2 560.4L872.9 568.3M828.2 572.8L798.5 569.7M828.2 572.8L843.2 574.6M798.5 569.7L783.1 568.3M744.3 545.5L722.1 525.5M744.3 545.5L755.3 555.9M722.1 525.5L710.4 515.5M692.4 474.1L686.2 444.9M692.4 474.1L695.2 489.1M686.2 444.9L682.6 430M692.4 385.9L704.5 358.7M692.4 385.9L685.8 399.8M704.5 358.7L710.4 344.5M744.3 314.5L770.1 299.6M744.3 314.5L730.7 321.9M770.1 299.6L783.1 291.7M828.2 287.3L857.8 290.4M828.2 287.3L812.8 285.4M857.8 290.4L872.9 291.7M912.1 314.5L934.2 334.5M912.1 314.5L900.7 304.1M934.2 334.5L945.6 344.5M963.9 385.9L970.1 415.1M963.9 385.9L960.8 370.9M970.1 415.1L973.4 430M903.2 473.4L883.9 496.4M903.2 473.4L911 460.2M883.9 496.4L872.1 506.5M828.2 516.7L798.5 511.5M828.2 516.7L843.3 517M798.5 511.5L783.9 506.5M753.1 473.4L742.8 445.1M753.1 473.4L760.4 486.8M742.8 445.1L739.7 430M753.1 386.7L772.4 363.6M753.1 386.7L745 399.8M772.4 363.6L783.8 353.5M828.2 343.3L857.8 348.6M828.2 343.3L812.7 343M857.8 348.6L872.1 353.5M903.2 386.7L913.5 415M903.2 386.7L895.6 373.2M913.5 415L916.3 430"/></defs><use href="#b1" stroke="#191a1c" stroke-width="3.4"/><use href="#b1" stroke="#3b3d41" stroke-width="2.5"/><g fill="url(#s1)" stroke="#19191b" stroke-width="0.7"><circle cx="1022.8" cy="474.5" r="5.1"/><circle cx="1014" cy="503" r="5.1"/><circle cx="984.3" cy="554.5" r="5.1"/><circle cx="964" cy="576.4" r="5.1"/><circle cx="914.8" cy="609.9" r="5.1"/><circle cx="887" cy="620.8" r="5.1"/><circle cx="828.2" cy="629.7" r="5.1"/><circle cx="798.4" cy="627.5" r="5.1"/><circle cx="741.5" cy="609.9" r="5.1"/><circle cx="715.7" cy="595" r="5.1"/><circle cx="672" cy="554.5" r="5.1"/><circle cx="655.2" cy="529.9" r="5.1"/><circle cx="633.5" cy="474.5" r="5.1"/><circle cx="629" cy="444.9" r="5.1"/><circle cx="633.5" cy="385.6" r="5.1"/><circle cx="642.3" cy="357.1" r="5.1"/><circle cx="672" cy="305.5" r="5.1"/><circle cx="692.3" cy="283.6" r="5.1"/><circle cx="741.5" cy="250.1" r="5.1"/><circle cx="769.3" cy="239.2" r="5.1"/><circle cx="828.2" cy="230.3" r="5.1"/><circle cx="857.9" cy="232.6" r="5.1"/><circle cx="914.8" cy="250.1" r="5.1"/><circle cx="940.6" cy="265" r="5.1"/><circle cx="984.3" cy="305.5" r="5.1"/><circle cx="1001.1" cy="330.2" r="5.1"/><circle cx="1022.8" cy="385.6" r="5.1"/><circle cx="1027.3" cy="415.1" r="5.1"/><circle cx="963.9" cy="474.1" r="5.1"/><circle cx="951.8" cy="501.4" r="5.1"/><circle cx="912.1" cy="545.5" r="5.1"/><circle cx="886.2" cy="560.4" r="5.1"/><circle cx="828.2" cy="572.8" r="5.1"/><circle cx="798.5" cy="569.7" r="5.1"/><circle cx="744.3" cy="545.5" r="5.1"/><circle cx="722.1" cy="525.5" r="5.1"/><circle cx="692.4" cy="474.1" r="5.1"/><circle cx="686.2" cy="444.9" r="5.1"/><circle cx="692.4" cy="385.9" r="5.1"/><circle cx="704.5" cy="358.7" r="5.1"/><circle cx="744.3" cy="314.5" r="5.1"/><circle cx="770.1" cy="299.6" r="5.1"/><circle cx="828.2" cy="287.3" r="5.1"/><circle cx="857.8" cy="290.4" r="5.1"/><circle cx="912.1" cy="314.5" r="5.1"/><circle cx="934.2" cy="334.5" r="5.1"/><circle cx="963.9" cy="385.9" r="5.1"/><circle cx="970.1" cy="415.1" r="5.1"/><circle cx="903.2" cy="473.4" r="5.1"/><circle cx="883.9" cy="496.4" r="5.1"/><circle cx="828.2" cy="516.7" r="5.1"/><circle cx="798.5" cy="511.5" r="5.1"/><circle cx="753.1" cy="473.4" r="5.1"/><circle cx="742.8" cy="445.1" r="5.1"/><circle cx="753.1" cy="386.7" r="5.1"/><circle cx="772.4" cy="363.6" r="5.1"/><circle cx="828.2" cy="343.3" r="5.1"/><circle cx="857.8" cy="348.6" r="5.1"/><circle cx="903.2" cy="386.7" r="5.1"/><circle cx="913.5" cy="415" r="5.1"/></g>
<defs><path id="b0" d="M1031.4 430L1029.1 460.3M1011.3 518.3L996.1 544.6M954.8 589L929.7 606.1M873.3 628.3L843.2 632.8M782.7 628.3L753.7 619.3M701.2 589L678.9 568.3M644.7 518.3L633.6 490M624.6 430L626.9 399.7M644.7 341.7L659.9 315.4M701.2 271L726.3 253.9M782.7 231.7L812.8 227.2M873.3 231.7L902.3 240.7M954.8 271L977.1 291.7M1011.3 341.7L1022.4 370M973.4 430L970.2 460.2M945.6 515.5L925.3 538.1M872.9 568.3L843.2 574.6M783.1 568.3L755.3 555.9M710.4 515.5L695.2 489.1M682.6 430L685.8 399.8M710.4 344.5L730.7 321.9M783.1 291.7L812.8 285.4M872.9 291.7L900.7 304.1M945.6 344.5L960.8 370.9M916.3 430L911 460.2M872.1 506.5L843.3 517M783.9 506.5L760.4 486.8M739.7 430L745 399.8M783.8 353.5L812.7 343M872.1 353.5L895.6 373.2"/></defs><use href="#b0" stroke="#1b1c1f" stroke-width="3.4"/><use href="#b0" stroke="#424448" stroke-width="2.5"/><g fill="url(#s0)" stroke="#19191b" stroke-width="0.7"><circle cx="1031.4" cy="430" r="5.2"/><circle cx="1029.1" cy="460.3" r="5.2"/><circle cx="1011.3" cy="518.3" r="5.2"/><circle cx="996.1" cy="544.6" r="5.2"/><circle cx="954.8" cy="589" r="5.2"/><circle cx="929.7" cy="606.1" r="5.2"/><circle cx="873.3" cy="628.3" r="5.2"/><circle cx="843.2" cy="632.8" r="5.2"/><circle cx="782.7" cy="628.3" r="5.2"/><circle cx="753.7" cy="619.3" r="5.2"/><circle cx="701.2" cy="589" r="5.2"/><circle cx="678.9" cy="568.3" r="5.2"/><circle cx="644.7" cy="518.3" r="5.2"/><circle cx="633.6" cy="490" r="5.2"/><circle cx="624.6" cy="430" r="5.2"/><circle cx="626.9" cy="399.7" r="5.2"/><circle cx="644.7" cy="341.7" r="5.2"/><circle cx="659.9" cy="315.4" r="5.2"/><circle cx="701.2" cy="271" r="5.2"/><circle cx="726.3" cy="253.9" r="5.2"/><circle cx="782.7" cy="231.7" r="5.2"/><circle cx="812.8" cy="227.2" r="5.2"/><circle cx="873.3" cy="231.7" r="5.2"/><circle cx="902.3" cy="240.7" r="5.2"/><circle cx="954.8" cy="271" r="5.2"/><circle cx="977.1" cy="291.7" r="5.2"/><circle cx="1011.3" cy="341.7" r="5.2"/><circle cx="1022.4" cy="370" r="5.2"/><circle cx="973.4" cy="430" r="5.2"/><circle cx="970.2" cy="460.2" r="5.2"/><circle cx="945.6" cy="515.5" r="5.2"/><circle cx="925.3" cy="538.1" r="5.2"/><circle cx="872.9" cy="568.3" r="5.2"/><circle cx="843.2" cy="574.6" r="5.2"/><circle cx="783.1" cy="568.3" r="5.2"/><circle cx="755.3" cy="555.9" r="5.2"/><circle cx="710.4" cy="515.5" r="5.2"/><circle cx="695.2" cy="489.1" r="5.2"/><circle cx="682.6" cy="430" r="5.2"/><circle cx="685.8" cy="399.8" r="5.2"/><circle cx="710.4" cy="344.5" r="5.2"/><circle cx="730.7" cy="321.9" r="5.2"/><circle cx="783.1" cy="291.7" r="5.2"/><circle cx="812.8" cy="285.4" r="5.2"/><circle cx="872.9" cy="291.7" r="5.2"/><circle cx="900.7" cy="304.1" r="5.2"/><circle cx="945.6" cy="344.5" r="5.2"/><circle cx="960.8" cy="370.9" r="5.2"/><circle cx="916.3" cy="430" r="5.2"/><circle cx="911" cy="460.2" r="5.2"/><circle cx="872.1" cy="506.5" r="5.2"/><circle cx="843.3" cy="517" r="5.2"/><circle cx="783.9" cy="506.5" r="5.2"/><circle cx="760.4" cy="486.8" r="5.2"/><circle cx="739.7" cy="430" r="5.2"/><circle cx="745" cy="399.8" r="5.2"/><circle cx="783.8" cy="353.5" r="5.2"/><circle cx="812.7" cy="343" r="5.2"/><circle cx="872.1" cy="353.5" r="5.2"/><circle cx="895.6" cy="373.2" r="5.2"/></g></g>
</svg>
<!-- ===== viewport toolbars ===== -->
<div class="tb" style="left:299px;top:185px;width:534px;height:32px"></div>
<div class="tb" style="left:979px;top:185px;width:405px;height:31px"></div>
<div class="tb" style="left:592px;top:646px;width:495px;height:32px"></div>
<div class="tb" style="left:299px;top:384px;width:32px;height:96px;border-radius:4px"></div>
<div class="a w" style="left:385px;top:190px;width:212px;height:22px"></div>
<div class="a" style="left:757px;top:646px;width:33px;height:32px;background:#46607f"></div>
<span class="t" style="left:304px;top:193.5px;letter-spacing:-0.416px;">Selection filter</span>
<span class="t blk" style="left:409px;top:193.5px;letter-spacing:-0.478px;">Atoms and bonds</span>
<span class="t" style="left:985px;top:193.5px;letter-spacing:-0.775px;">Quick access</span>
<span class="t" style="left:303.5px;top:384.8px;font-size:11.5px;letter-spacing:-0.215px;color:#eef2f6;">PDB</span>
<span class="t" style="left:303.5px;top:451px;font-weight:bold;letter-spacing:-0.038px;color:#f4f4f4;">Gro</span>
<span class="t" style="left:1191px;top:193.5px;font-size:14px;font-weight:bold;letter-spacing:2.856px;color:#fff;">+H</span>
<span class="t" style="left:1223px;top:193.5px;font-size:14px;font-weight:bold;letter-spacing:2.856px;color:#fff;">&#8722;H</span>
<span class="t" style="left:1167.5px;top:186.5px;letter-spacing:0.589px;color:#fff;">2+</span>
<svg style="left:0;top:0" width="1380" height="690" viewBox="0 0 1380 690">
<!-- selection filter combobox icon -->
<g stroke="#7d848c" stroke-width="0.800"><circle cx="395.500" cy="199" r="4.600" fill="#e8eef5"/><circle cx="400.500" cy="205" r="3.300" fill="#8fa3bb"/><path d="M396 203l5 -1.500" stroke="#5d6b7d" stroke-width="1.600"/></g>
<path d="M573 197h12.500l-6.200 9.500z" fill="#4c7ab3"/>
<!-- filter icons -->
<g fill="none" stroke="#a9c7ec" stroke-width="1.400"><path d="M606.500 196v-6.500h6.500M623.500 189.500h6.500v6.500M630 206v6.500h-6.500M613 212.500h-6.500v-6.500"/></g>
<g stroke="#7d8a99" stroke-width="0.700"><circle cx="614" cy="196.500" r="4.300" fill="url(#lens)"/><circle cx="622.500" cy="201" r="4.300" fill="url(#lens)"/><circle cx="614.500" cy="206" r="4.300" fill="url(#lens)"/></g>
<g id="gbr" fill="none" stroke="#667282" stroke-width="1.400" stroke-dasharray="3.500 1.200"><path d="M639.500 196v-6.500h6.500M656.500 189.500h6.500v6.500M663 206v6.500h-6.500M646 212.500h-6.500v-6.500"/></g>
<use href="#gbr" x="33"/><use href="#gbr" x="66"/><use href="#gbr" x="99"/><use href="#gbr" x="132"/>
<g stroke="#6c7888" fill="#6c7888">
<path d="M647 197l8 8M655 197l-8 8" stroke-width="2.600" fill="none"/>
<path d="M684 193.500l7 7.500h-4v7h-6v-7h-4z" stroke="none"/>
<path d="M711.500 195l6 7l7.500 -5.500M717.500 202l4.500 6.500" fill="none" stroke-width="1.600"/><circle cx="711.500" cy="195" r="2.300" stroke="none"/><circle cx="717" cy="202" r="3.200" stroke="none"/><circle cx="725" cy="196.500" r="2.300" stroke="none"/><circle cx="722" cy="208.500" r="2.300" stroke="none"/>
<path d="M743 198.500q3.500 -3 7 0t7 0M743 204.500q3.500 -3 7 0t7 0" fill="none" stroke-width="1.800"/>
<circle cx="779" cy="196.500" r="4" stroke="none"/><circle cx="787" cy="196.500" r="3.600" stroke="none"/><circle cx="777.500" cy="204.500" r="4.200" stroke="none"/><circle cx="784" cy="203" r="4" stroke="none"/><path d="M783.500 206.500h9M788 202v9" stroke="#7d8999" stroke-width="2.600" fill="none"/>
</g>
<use href="#mag" transform="translate(806.500,191.500) scale(1.050)"/>
<!-- quick access icons -->
<g fill="none" stroke="#a9c7ec" stroke-width="1.200"><circle cx="1075" cy="201.500" r="9.600"/><circle cx="1075" cy="201.500" r="7"/><path d="M1075 201.500v-6.500M1075 201.500l-5.500 3.500M1075 201.500l5.500 3.500" stroke-width="1.600"/></g>
<g stroke="#dfe6ee" stroke-width="1.300" fill="none"><path d="M1099 195l7 3l8 -5M1106 198l-5 8"/></g>
<g stroke="#7d8a99" stroke-width="0.600"><circle cx="1099" cy="194.500" r="2.800" fill="url(#lens)"/><circle cx="1106" cy="198" r="2.800" fill="url(#lens)"/><circle cx="1114.500" cy="192.500" r="2.800" fill="url(#lens)"/><circle cx="1101" cy="206.500" r="4.300" fill="url(#lens)"/></g>
<path d="M1108.500 206.500h9M1113 202v9" stroke="#141a26" stroke-width="4.200"/><path d="M1108.500 206.500h9M1113 202v9" stroke="#fff" stroke-width="2.600"/>
<g stroke-linecap="round"><path d="M1136 193l-4.500 16M1144 193l-4.500 16" stroke="#5c6878" stroke-width="5.200"/><path d="M1136 194l-3.800 13.500M1144 194l-3.800 13.500" stroke="#93b3dc" stroke-width="2.800"/></g>
<circle cx="1165.500" cy="207" r="5" fill="url(#lens)" stroke="#7d8a99" stroke-width="0.700"/>
<path d="M1257 200.500q4 0.500 6.500 5t4 5t4 -5t6.500 -5" fill="none" stroke="#a9c7ec" stroke-width="1.400"/><path d="M1261.500 191.500q6 -1 6.500 6.500" fill="none" stroke="#fff" stroke-width="1.500"/><path d="M1264.500 197.500l3.500 4l3.500 -4z" fill="#fff"/>
<defs><g id="ytre"><g fill="#6e6410"><circle cx="0" cy="-4.600" r="5.200"/><circle cx="-5" cy="4" r="5.200"/><circle cx="5" cy="4" r="5.200"/></g><g fill="#e0cf3a"><circle cx="0" cy="-4.600" r="4.400"/><circle cx="-5" cy="4" r="4.400"/><circle cx="5" cy="4" r="4.400"/><circle cx="0" cy="1" r="4"/></g></g></defs>
<use href="#ytre" x="1298" y="201"/>
<path d="M1299.500 207h9M1304 202.500v9" stroke="#141a26" stroke-width="4.200"/><path d="M1299.500 207h9M1304 202.500v9" stroke="#fff" stroke-width="2.600"/>
<g transform="translate(1326,198) scale(0.800)"><use href="#ytre"/></g><g transform="translate(1328,200.500) scale(0.800)"><use href="#ytre"/></g><g transform="translate(1330,203) scale(0.800)"><use href="#ytre"/></g>
<path d="M1331.500 207h9M1336 202.500v9" stroke="#141a26" stroke-width="4.200"/><path d="M1331.500 207h9M1336 202.500v9" stroke="#fff" stroke-width="2.600"/>
<path d="M1363.8 205.8L1365.6 206.7L1364.6 209.2L1362.7 208.5L1361.5 209.7L1362.2 211.6L1359.7 212.6L1358.8 210.8L1357.2 210.8L1356.3 212.6L1353.8 211.6L1354.5 209.7L1353.3 208.5L1351.4 209.2L1350.4 206.7L1352.2 205.8L1352.2 204.2L1350.4 203.3L1351.4 200.8L1353.3 201.5L1354.5 200.3L1353.8 198.4L1356.3 197.4L1357.2 199.2L1358.8 199.2L1359.7 197.4L1362.2 198.4L1361.5 200.3L1362.7 201.5L1364.6 200.8L1365.6 203.3L1363.8 204.2zM1360.8 205a2.8 2.8 0 1 0 -5.6 0a2.8 2.8 0 1 0 5.6 0z" fill="#dfe6ee" fill-rule="evenodd" stroke="#5a6678" stroke-width="0.600"/><path d="M1371.8 195.1L1373.2 195.7L1372.4 197.6L1370.9 197.1L1370.1 197.9L1370.6 199.4L1368.7 200.2L1368.1 198.8L1366.9 198.8L1366.3 200.2L1364.4 199.4L1364.9 197.9L1364.1 197.1L1362.6 197.6L1361.8 195.7L1363.2 195.1L1363.2 193.9L1361.8 193.3L1362.6 191.4L1364.1 191.9L1364.9 191.1L1364.4 189.6L1366.3 188.8L1366.9 190.2L1368.1 190.2L1368.7 188.8L1370.6 189.6L1370.1 191.1L1370.9 191.9L1372.4 191.4L1373.2 193.3L1371.8 193.9zM1369.5 194.5a2 2 0 1 0 -4 0a2 2 0 1 0 4 0z" fill="#dfe6ee" fill-rule="evenodd" stroke="#5a6678" stroke-width="0.600"/>
<path d="M1362.500 208h9M1367 203.500v9" stroke="#141a26" stroke-width="4.200"/><path d="M1362.500 208h9M1367 203.500v9" stroke="#fff" stroke-width="2.600"/>
<!-- side toolbar icons -->
<path d="M304.500 404.500v5.500h21v-5.500" fill="none" stroke="#eef2f6" stroke-width="1.700"/><path d="M313.500 399.500h3v3.500h3l-4.500 4.500l-4.500 -4.500h3z" fill="#dfe9f6" stroke="#3a4658" stroke-width="0.600"/>
<use href="#blob" transform="translate(304.500,423.500) scale(0.800)"/>
<rect x="-2.800" y="-1.500" width="5.600" height="3" rx="1.500" fill="#f0a565" transform="translate(311.800,423) rotate(-35)"/><rect x="-2.300" y="-1.300" width="4.600" height="2.600" rx="1.300" fill="#7fbfee" transform="translate(322,422) rotate(25)"/><rect x="-2.500" y="-1.300" width="5" height="2.600" rx="1.300" fill="#ee7fa5" transform="translate(304.500,428.500) rotate(70)"/><path d="M312.500 428.500l3 -2.500l2.500 4.500l-2 2z" fill="#e0cf5a" stroke="#6e6410" stroke-width="0.500"/>
<g fill="#f2d43a"><path d="M314 467.500l1.200 3.300l3.300 1.200l-3.300 1.200l-1.200 3.300l-1.200 -3.300l-3.300 -1.200l3.300 -1.200z"/><path d="M310 465.500l0.700 1.800l1.800 0.700l-1.800 0.700l-0.700 1.800l-0.700 -1.800l-1.800 -0.700l1.800 -0.700z"/><path d="M308 471.500l0.700 1.800l1.800 0.700l-1.800 0.700l-0.700 1.800l-0.700 -1.800l-1.800 -0.700l1.800 -0.700z"/><path d="M324 465l0.700 1.800l1.800 0.700l-1.800 0.700l-0.700 1.800l-0.700 -1.800l-1.800 -0.700l1.800 -0.700z"/></g>
<path d="M317 466.500l7.500 10" stroke="#3a4658" stroke-width="4"/><path d="M317 466.500l7.500 10" stroke="#a9c7ec" stroke-width="2.600"/>
<!-- nav cube -->
<g fill="#6b93c4" fill-opacity="0.900">
<path d="M367.500 538.800l6 9.800h-12z"/><path d="M367.500 679l6 -9.300h-12z"/><path d="M297.700 609l10.300 -5.700v11.400z"/><path d="M437.500 609l-9.500 -5.800v11.600z"/>
<path d="M352.500 543.500q-15 4 -26 14.500l-2.500 -3.500l-4.500 11.500l12.500 -1.500l-2.500 -3q10 -9 24 -13.500z"/><path d="M383.500 543.500q15 4 26 14.500l2.500 -3.500l4.500 11.500l-12.500 -1.500l2.500 -3q-10 -9 -24 -13.500z"/>
</g>
<path d="M367.500 558l5 8h-3.300v11.500h-3.400v-11.500h-3.300z" fill="#4caf50"/>
<path d="M336 587q2 -8 12 -8.500h42q8 0.500 10 7l3.500 8v30l-3 9q-2 7 -10 8h-44q-8 -1 -10 -8l-4.500 -9v-28z" fill="#5a82b4"/>
<path d="M344 578.500h54v3h-54z" fill="#6f99cc"/>
<path d="M333 592l9 -9l-3 12l-6 8z" fill="#8fc0f0"/><path d="M390 632l12 -3l-5 9z" fill="#8fc0f0"/>
<path d="M346 592l12 -8h26l8 12v30l-14 10h-32l-8 -10v-26z" fill="#6f99cc"/>
<path d="M346 584h17l-8 8.500h-7z" fill="#4f74a3"/><path d="M374 586l16 -3l3 4l-9 13z" fill="#5f88bb"/><path d="M393 593q5 -5 9 0q3 16 0 34q-4 6 -9 0q-2 -17 0 -34z" fill="#4f74a3"/><path d="M373 636l14 -10l5 8l-4 5z" fill="#4f74a3"/><path d="M333 626l8 8l4 6l-6 -2z" fill="#4f74a3"/><path d="M344 636l30 0l14 3l-8 3h-30z" fill="#5f88bb"/>
<path d="M349.500 610l4 3l4 -1l2.500 7l-6 -1.500z" fill="#3f74c4"/>
<path d="M399.500 607.500h11v-3l9.500 4.800l-9.500 4.800v-3h-11z" fill="#f5803e"/>
</svg>
<!-- bottom viewport toolbar icons -->
<span class="t" style="left:829px;top:653.5px;font-size:16.5px;font-weight:bold;letter-spacing:-0.046px;color:#fff;">1A</span>
<svg style="left:0;top:0" width="1380" height="690" viewBox="0 0 1380 690">
<rect x="597" y="650.500" width="22.500" height="23" fill="none" stroke="#a9c7ec" stroke-width="1.300"/>
<use href="#mag" transform="translate(599.500,653) scale(0.950)"/>
<g fill="none" stroke="#a9c7ec" stroke-width="1.300"><path d="M629.500 657v-6.500h6.500M646.500 650.500h6.500v6.500M653 667v6.500h-6.500M636 673.500h-6.500v-6.500"/></g>
<use href="#mag" transform="translate(632.500,653) scale(0.950)"/>
<use href="#mag" transform="translate(665.500,653) scale(0.950)"/><path d="M669.500 660.600h7M673 657.100v7" stroke="#fff" stroke-width="1.800"/>
<use href="#mag" transform="translate(698.500,653) scale(0.950)"/><path d="M702.500 660.600h7" stroke="#fff" stroke-width="1.800"/>
<rect x="729" y="651" width="22" height="22.500" rx="2.500" fill="url(#bgg2)" stroke="#141a26" stroke-width="1.200"/>
<!-- cube -->
<path d="M773 651.500l10.500 5v11.500l-10.500 6l-10.500 -6v-11.500z" fill="#4f7fbf"/><path d="M773 651.500l10.500 5l-10.500 5l-10.500 -5z" fill="#6fa3e0"/><path d="M773 661.500v12.500l-10.500 -6v-11.500z" fill="#5a8dd0"/><path d="M766 662l5 2.500l-5 3zM780 662l-5 2.500l5 3zM773 666l-3 5h6z" fill="#24405f"/><path d="M761 672l5.500 -3.500l1 2z" fill="#f5803e"/><path d="M785.500 672l-5.500 -3.500l-1 2z" fill="#3fcf7a"/><path d="M772.200 652.500h1.600v5h-1.600z" fill="#3f74c4"/>
<!-- grid -->
<path d="M798.500 652.500h15.500l4 19.500h-23.500z" fill="#9fb3cc" stroke="#7d8fa8" stroke-width="0.800"/><path d="M806.300 652.500v19.500" stroke="#6fcf8f" stroke-width="0.800"/><path d="M796.500 662h19.500" stroke="#c9a58a" stroke-width="0.800"/>
<!-- 1A ring over A and underline -->
<circle cx="844" cy="652" r="1.500" fill="none" stroke="#fff" stroke-width="1"/><path d="M829 672h21" stroke="#141a26" stroke-width="3.400"/><path d="M829 672h21" stroke="#fff" stroke-width="2"/>
<use href="#cam" transform="translate(872,656) scale(0.600)"/>
<g transform="translate(872,666.500) scale(0.850)"><use href="#ring"/></g>
<use href="#cam" transform="translate(900.500,658) scale(0.850)"/><circle cx="900.500" cy="659" r="3.200" fill="#c9b99a"/>
<g transform="translate(905,661.500) scale(0.620)"><use href="#flop"/></g>
<rect x="936" y="652" width="13" height="13.500" fill="#7fa8dc" stroke="#a9c7ec" stroke-width="0.800"/><path d="M938 655h9M938 658h9M938 661h9" stroke="#a9c7ec" stroke-width="0.900"/><circle cx="930.500" cy="669.500" r="3.300" fill="#d8d8d8" stroke="#8a8f96" stroke-width="0.700"/>
<rect x="961" y="653" width="20" height="18.500" fill="#7fa8dc" stroke="#a9c7ec" stroke-width="0.800"/><path d="M963.500 657h15M963.500 660.500h15M963.500 664h15M963.500 667.500h15" stroke="#a9c7ec" stroke-width="0.900"/>
<path d="M994 662q10 -12.500 20 0q-10 12.500 -20 0z" fill="#fff" stroke="#141a26" stroke-width="1"/><circle cx="1004" cy="662" r="4.300" fill="#1c2739"/><circle cx="1004" cy="662" r="1.500" fill="#fff"/>
<g fill="#a9c7ec"><path d="M1029.500 654.500h5.500l-1.800 1.800l3 3l-1.900 1.900l-3 -3l-1.800 1.800zM1044.500 654.500v5.500l-1.800 -1.800l-3 3l-1.900 -1.900l3 -3l-1.800 -1.800zM1029.500 669.500v-5.500l1.800 1.800l3 -3l1.900 1.900l-3 3l1.800 1.800zM1044.500 669.500h-5.500l1.800 -1.800l-3 -3l1.900 -1.900l3 3l1.800 -1.800z"/></g>
<path d="M1063.500 654.500l13 7.500l-13 7.500z" fill="#fff" stroke="#141a26" stroke-width="1"/>
</svg>
<!-- ===== animator ===== -->
<div class="a" id="an"></div>
<div class="a" id="anh"></div>
<div class="a" style="left:4px;top:719px;width:981px;height:223px;background:#1c2739"></div>
<div class="a" style="left:0;top:719px;width:4px;height:226px;background:#36465c"></div>
<div class="a" style="left:985px;top:719px;width:1px;height:226px;border-left:1px dotted #55667c"></div>
<div class="a" style="left:191px;top:776px;width:739px;height:146px;background:#2f3e51"></div>
<span class="t" style="left:40px;top:697px;font-weight:bold;letter-spacing:-0.608px;color:#fff;">Animator - Presentation 1</span>
<span class="t" style="left:44px;top:725.5px;letter-spacing:-0.368px;">Off</span>
<span class="t" style="left:120px;top:725.5px;letter-spacing:-0.368px;">Off</span>
<div class="a w" style="left:213px;top:720px;width:77px;height:25px"></div>
<span class="t blk" style="left:217px;top:725px;letter-spacing:-0.480px;">Loop</span>
<div class="a bl" style="left:290px;top:720px;width:218px;height:25px"></div>
<div class="a w" style="left:374px;top:720px;width:50px;height:25px"></div>
<span class="t blk" style="left:391px;top:725px;">1</span>
<div class="a w" style="left:508px;top:720px;width:79px;height:25px"></div>
<span class="t blk" style="left:514px;top:725px;font-size:12px;letter-spacing:-0.623px;">0,030 s</span>
<div class="a w" style="left:761px;top:720px;width:68px;height:25px"></div>
<span class="t blk" style="left:796px;top:725px;font-size:12px;">1</span>
<div class="a w" style="left:869px;top:720px;width:68px;height:25px"></div>
<span class="t blk" style="left:892px;top:725px;font-size:12px;letter-spacing:-0.340px;">180</span>
<span class="t" style="left:721px;top:726px;letter-spacing:-0.649px;">Begin</span>
<span class="t" style="left:839px;top:726px;letter-spacing:-1.043px;">End</span>
<span class="t" style="left:13px;top:754px;font-size:12px;letter-spacing:-0.448px;color:#d5dce5;">-40</span>
<span class="t" style="left:95px;top:754px;font-size:12px;letter-spacing:-0.448px;color:#d5dce5;">-20</span>
<span class="t" style="left:263px;top:754px;font-size:12px;letter-spacing:-0.673px;color:#d5dce5;">20</span>
<span class="t" style="left:345px;top:754px;font-size:12px;letter-spacing:-0.673px;color:#d5dce5;">40</span>
<span class="t" style="left:428px;top:754px;font-size:12px;letter-spacing:-0.673px;color:#d5dce5;">60</span>
<span class="t" style="left:511px;top:754px;font-size:12px;letter-spacing:-1.173px;color:#d5dce5;">80</span>
<span class="t" style="left:590px;top:754px;font-size:12px;letter-spacing:-1.007px;color:#d5dce5;">100</span>
<span class="t" style="left:673px;top:754px;font-size:12px;letter-spacing:-1.007px;color:#d5dce5;">120</span>
<span class="t" style="left:756px;top:754px;font-size:12px;letter-spacing:-1.007px;color:#d5dce5;">140</span>
<span class="t" style="left:838px;top:754px;font-size:12px;letter-spacing:-0.673px;color:#d5dce5;">160</span>
<span class="t" style="left:921px;top:754px;font-size:12px;letter-spacing:-0.673px;color:#d5dce5;">180</span>
<div class="a bl" style="left:180px;top:747px;width:22px;height:29px;border-radius:5px"></div>
<span class="t" style="left:187.5px;top:754px;font-size:12px;color:#fff;">1</span>
<svg style="left:0;top:0" width="1380" height="945" viewBox="0 0 1380 945">
<path d="M20.5 776V922M61.5 776V922M103.5 776V922M144.5 776V922" stroke="#222d40" stroke-width="1" fill="none"/>
<path d="M227.5 776V922M309.5 776V922M392.5 776V922M475.5 776V922M558.5 776V922M640.5 776V922M723.5 776V922M806.5 776V922M889.5 776V922" stroke="#354359" stroke-width="1" fill="none"/>
<path d="M191 795.5H930M191 815.5H930M191 835.5H930M191 855.5H930M191 875.5H930M191 895.5H930M191 915.5H930" stroke="#354359" stroke-width="1" fill="none"/>
<path d="M268.5 776V922M351.5 776V922M434.5 776V922M516.5 776V922M599.5 776V922M682.5 776V922M764.5 776V922M847.5 776V922" stroke="#171d29" stroke-width="1.200" fill="none"/>
<path d="M929.500 776V922" stroke="#161c28" stroke-width="1" stroke-dasharray="1 1.500"/>
<path d="M190.500 776V922" stroke="#4c7ab3" stroke-width="1.200"/>
<g fill="#4c7ab3"><rect x="965" y="748" width="19" height="19"/><rect x="965" y="768" width="19" height="23"/><rect x="965" y="903" width="19" height="19"/><rect x="4" y="923" width="19" height="19"/><rect x="408" y="923" width="148" height="19"/><rect x="945" y="923" width="19" height="19"/></g>

<g fill="#fff"><path d="M968.500 762l6 -9.500l6 9.500z"/><path d="M968.500 908l6 9.500l6 -9.500z"/><path d="M8.500 932.500l9.500 -6v12z"/><path d="M959.500 932.500l-9.500 -6v12z"/></g>
<path d="M266 728h12.500l-6.200 9.500z" fill="#4c7ab3"/>
<g fill="#fff"><path d="M77 733.500h9l-4.500 5z"/><path d="M152 733.500h9l-4.500 5z"/></g>
<g fill="#fff" stroke="#141a26" stroke-width="1" stroke-linejoin="round"><path d="M299.500 727.500h2.500v11h-2.500zM308 727.500v11l-6 -5.500z"/><path d="M336.500 728.500l-7.500 4.500l7.500 4.500v-2.300l-3.800 -2.200l3.800 -2.200z"/><path d="M364 727.500v11l-8 -5.500z"/><path d="M433 727.500v11l8 -5.500z"/><path d="M461 728.500l7.500 4.500l-7.500 4.500v-2.300l3.800 -2.200l-3.800 -2.200z"/><path d="M497 727.500h-2.500v11h2.500zM488.500 727.500v11l6 -5.500z"/></g>
<rect x="568" y="721" width="18" height="11" fill="#4c7ab3"/><rect x="568" y="733" width="18" height="11" fill="#4c7ab3"/><path d="M573 729.500l4 -5.500l4 5.500zM573 735.500l4 5.500l4 -5.500z" fill="#e6eef8"/>
<rect x="811" y="721" width="18" height="11" fill="#4c7ab3"/><rect x="811" y="733" width="18" height="11" fill="#4c7ab3"/><path d="M816 729.500l4 -5.500l4 5.500zM816 735.500l4 5.500l4 -5.500z" fill="#e6eef8"/>
<rect x="919" y="721" width="18" height="11" fill="#4c7ab3"/><rect x="919" y="733" width="18" height="11" fill="#4c7ab3"/><path d="M924 729.500l4 -5.500l4 5.500zM924 735.500l4 5.500l4 -5.500z" fill="#e6eef8"/>
<g fill="none" stroke="#dfe6ee" stroke-width="1.200"><path d="M22 729.500h17.500M22 735.500h17.500M22 741h17.500M27 725v19M33 725v19M38.500 725v19"/></g><path d="M27.500 725.500a4.500 4.500 0 1 0 2 8" fill="none" stroke="#141a26" stroke-width="3.600"/><path d="M27.500 725.500a4.500 4.500 0 1 0 2 8" fill="none" stroke="#c9d3df" stroke-width="2.200"/>
<path d="M99 742.500h17l-6 -10z" fill="#c9d3df" stroke="#141a26" stroke-width="0.800"/><path d="M97 743.500h20" stroke="#8a96a6" stroke-width="1.400"/><path d="M98 725.500l3.500 5q3 2.500 6 -1l-3.500 -6" fill="none" stroke="#141a26" stroke-width="3.400"/><path d="M98 725.500l3.500 5q3 2.500 6 -1l-3.500 -6" fill="none" stroke="#c9d3df" stroke-width="2"/>
<g transform="translate(180,724.500) scale(1.350)"><use href="#clap"/></g><path d="M186.500 728.500h10M191.500 723.500v10" stroke="#141a26" stroke-width="3.600"/><path d="M187 728.500h9M191.500 724v9" stroke="#fff" stroke-width="2"/>
<g stroke="#141a26" stroke-width="1" stroke-linejoin="round"><path d="M4 703.500h22v11h-22z" fill="#a9c7ec"/><path d="M4 700h22v3.500h-22z" fill="#e4ecf6"/><path d="M3.500 697.300L25.500 693.500L26.200 696.700L4.200 700.500z" fill="#e4ecf6"/><path d="M12 705.500l6 3.500l-6 3.500z" fill="#fff"/></g><path d="M8 703.300l2 -3h3l-2 3zM15 703.300l2 -3h3l-2 3zM8.500 699.500l1.500 -3l3 -0.500l-1.500 3zM16 698.200l1.500 -3l3 -0.500l-1.500 3z" fill="#8fb3df"/>
<g stroke="#141a26" stroke-width="0.900"><rect x="598.500" y="722.500" width="21" height="15" fill="#a9c7ec"/><path d="M598.500 722.500h21v3h-21zM598.500 734.500h21v3h-21z" fill="#e9eff7"/><path d="M606.500 727l5.500 3l-5.500 3z" fill="#fff"/></g><g transform="translate(609.500,732) scale(0.600)"><use href="#flop"/></g>
<rect x="635.500" y="722.500" width="21.500" height="21.500" fill="none" stroke="#a9c7ec" stroke-width="1.200"/><use href="#mag" transform="translate(637.500,724.500) scale(0.900)"/>
<use href="#mag" transform="translate(663.500,724.500) scale(0.900)"/><path d="M667.300 731.700h7M670.800 728.200v7" stroke="#fff" stroke-width="1.700"/>
<use href="#mag" transform="translate(689.500,724.500) scale(0.900)"/><path d="M693.300 731.700h7" stroke="#fff" stroke-width="1.700"/>
<path d="M968.1 734.1L970.4 735.3L968.9 738.7L966.5 737.9L964.9 739.5L965.7 741.9L962.3 743.4L961.1 741.1L958.9 741.1L957.7 743.4L954.3 741.9L955.1 739.5L953.5 737.9L951.1 738.7L949.6 735.3L951.9 734.1L951.9 731.9L949.6 730.7L951.1 727.3L953.5 728.1L955.1 726.5L954.3 724.1L957.7 722.6L958.9 724.9L961.1 724.9L962.3 722.6L965.7 724.1L964.9 726.5L966.5 728.1L968.9 727.3L970.4 730.7L968.1 731.9zM963.9 733a3.9 3.9 0 1 0 -7.8 0a3.9 3.9 0 1 0 7.8 0z" fill="#f2f2f2" fill-rule="evenodd" stroke="#141a26" stroke-width="1"/>
<path d="M1341 704h6" stroke="#8fb3df" stroke-width="1.500"/><path d="M1347 699.500l1.500 1.500h4.500v-1.500h1.500v9h-1.500v-1.500h-4.500l-1.500 1.500z" fill="#8fb3df"/><path d="M1361.500 698.500l11 11M1372.500 698.500l-11 11" stroke="#8fb3df" stroke-width="1.800"/>
</svg>
<!-- ===== animation library panel ===== -->
<div class="a" style="left:986px;top:719px;width:394px;height:226px;background:#2f3e51"></div>
<div class="a w" style="left:1183px;top:723px;width:193px;height:26px"></div>
<span class="t" style="left:1189px;top:729px;letter-spacing:-0.638px;color:#777;">Search animations... (Ctrl+S...</span>
<div class="a" style="left:995px;top:727px;width:18px;height:18px;background:#a9c7ec"></div>
<span class="t" style="left:996.5px;top:728.5px;font-size:9.5px;font-weight:bold;letter-spacing:-0.109px;color:#1c2739;">A-Z</span>
<div class="a" style="left:1359px;top:758px;width:18px;height:145px;background:#1c2739"></div>
<span class="t" style="left:999px;top:812px;letter-spacing:-0.760px;">Assemble</span>
<span class="t" style="left:1063px;top:812px;letter-spacing:-0.856px;">Disassemble</span>
<span class="t" style="left:1153px;top:812px;letter-spacing:-0.654px;">Dock</span>
<span class="t" style="left:1206px;top:812px;letter-spacing:-0.375px;">Hold atoms</span>
<span class="t" style="left:1279px;top:812px;letter-spacing:-0.483px;">Move ato...</span>
<span class="t" style="left:1000px;top:883px;letter-spacing:-0.578px;">Play path</span>
<span class="t" style="left:1065px;top:883px;letter-spacing:-0.665px;">Play rever...</span>
<span class="t" style="left:1153px;top:883px;letter-spacing:-0.904px;">Rock</span>
<span class="t" style="left:1220px;top:883px;letter-spacing:-0.717px;">Rotate</span>
<span class="t" style="left:1288px;top:883px;letter-spacing:-0.513px;">Undock</span>
<svg style="left:0;top:0" width="1380" height="945" viewBox="0 0 1380 945">
<use href="#mag" transform="translate(1353,726.500) scale(1)"/>
<g fill="#4c7ab3"><rect x="1359" y="758" width="18" height="18"/><rect x="1359" y="777" width="18" height="18"/><rect x="1359" y="885" width="18" height="18"/></g>
<path d="M1362.500 771l5.500 -8.500l5.500 8.500zM1362.500 890l5.500 8.500l5.500 -8.500z" fill="#fff"/>
<!-- toolbar icons -->
<use href="#np" transform="translate(1022,727) scale(0.580)"/><use href="#tre" transform="translate(1036.500,730) scale(0.550)"/><use href="#tre" transform="translate(1024,741.500) scale(0.550)"/>
<path d="M1047 731h4l1.500 -2.500h7l1.500 2.500h4v13h-18z" fill="#6f9fdc" stroke="#4c7ab3" stroke-width="0.800"/><circle cx="1056" cy="737.500" r="4" fill="none" stroke="#a9c7ec" stroke-width="1.200"/>
<g fill="#a9c7ec"><circle cx="1082" cy="731.500" r="4.500"/><circle cx="1077" cy="740" r="4.500"/><circle cx="1087" cy="740" r="4.500"/><circle cx="1082" cy="737" r="4"/></g>
<g fill="#5a7496"><circle cx="1108" cy="731.500" r="4.500"/><circle cx="1103" cy="740" r="4.500"/><circle cx="1113" cy="740" r="4.500"/><circle cx="1108" cy="737" r="4"/></g>
<g fill="#a9c7ec"><circle cx="1134" cy="733" r="3.400"/><circle cx="1130" cy="739.500" r="3.400"/><circle cx="1138" cy="739.500" r="3.400"/><circle cx="1134" cy="737" r="3"/></g>
<path d="M1134 724.500v3M1125.500 728l2.200 2.200M1142.500 728l-2.200 2.200M1123 736.500h3M1145 736.500h-3M1126 746l2 -2M1142 746l-2 -2" stroke="#fff" stroke-width="1.200"/>
<path d="M1167.1 737.5L1169.2 738.5L1167.9 741.6L1165.8 740.8L1164.3 742.3L1165.1 744.4L1162.0 745.7L1161.0 743.6L1159.0 743.6L1158.0 745.7L1154.9 744.4L1155.7 742.3L1154.2 740.8L1152.1 741.6L1150.8 738.5L1152.9 737.5L1152.9 735.5L1150.8 734.5L1152.1 731.4L1154.2 732.2L1155.7 730.7L1154.9 728.6L1158.0 727.3L1159.0 729.4L1161.0 729.4L1162.0 727.3L1165.1 728.6L1164.3 730.7L1165.8 732.2L1167.9 731.4L1169.2 734.5L1167.1 735.5zM1163.2 736.5a3.2 3.2 0 1 0 -6.4 0a3.2 3.2 0 1 0 6.4 0z" fill="#8fb3df" fill-rule="evenodd"/>
<!-- row 1 -->
<g transform="translate(1025,785) scale(1.520) translate(-591,-63.500)">
<g stroke="#141a26" stroke-width="0.800">
<rect x="-4.300" y="-2.800" width="8.600" height="5.600" rx="2.400" fill="#f0a565" transform="translate(585.500,63) rotate(40)"/>
<rect x="-4.200" y="-2.600" width="8.400" height="5.200" rx="2.400" fill="#a9c7ec" transform="translate(592,59.500) rotate(-18)"/>
<rect x="-4" y="-2.700" width="8" height="5.400" rx="2.400" fill="#2fce89" transform="translate(591,67) rotate(-70)"/>
</g>
<g fill="none" stroke-linecap="round"><g stroke="#141a26" stroke-width="2.400"><path d="M583.500 51q-3.500 3 -1.500 7"/><path d="M598.500 59q4 0.500 4.500 5"/><path d="M582 76q4 1 6.500 -2.500"/></g><g stroke="#fff" stroke-width="1.200"><path d="M583.500 51q-3.500 3 -1.500 7"/><path d="M598.500 59q4 0.500 4.500 5"/><path d="M582 76q4 1 6.500 -2.500"/></g></g>
<g fill="#fff"><path d="M580 56.500l2.500 3l1.500 -3.800z"/><path d="M600.500 56.800l-3 2.200l3.200 2z"/><path d="M586.500 72l3 -0.500l-0.800 3.500z"/></g>
</g>
<g transform="translate(1096,785) scale(1.520) translate(-591,-102.500)">
<g stroke="#141a26" stroke-width="0.800">
<rect x="-4.300" y="-2.800" width="8.600" height="5.600" rx="2.400" fill="#f0a565" transform="translate(581.500,98) rotate(40)"/>
<rect x="-4.200" y="-2.600" width="8.400" height="5.200" rx="2.400" fill="#a9c7ec" transform="translate(600,92.500) rotate(-15)"/>
<rect x="-4" y="-2.700" width="8" height="5.400" rx="2.400" fill="#2fce89" transform="translate(595,112.500) rotate(-70)"/>
</g>
<g fill="none" stroke-linecap="round"><g stroke="#141a26" stroke-width="2.400"><path d="M592 95q-3.500 -3 -7 0"/><path d="M598 103q3 -1 3 -5.500"/><path d="M587.500 105q-0.500 4 3.500 6"/></g><g stroke="#fff" stroke-width="1.200"><path d="M592 95q-3.500 -3 -7 0"/><path d="M598 103q3 -1 3 -5.500"/><path d="M587.500 105q-0.500 4 3.500 6"/></g></g>
<g fill="#fff"><path d="M583.500 93.500l0.500 3.500l3 -1.500z"/><path d="M599 97.500l2 -2.500l2 2.800z"/><path d="M589.500 112.500l3.500 -0.500l-2 -3z"/></g>
</g>
<g transform="translate(1146.500,771.500) scale(1.550)"><use href="#blob"/></g>
<use href="#bb" transform="translate(1167.500,778.500) scale(1.700)"/>
<path d="M1146 766.500q8 -5.500 13 4" fill="none" stroke="#141a26" stroke-width="4.200" stroke-linecap="round"/><path d="M1146 766.500q8 -5.500 13 4" fill="none" stroke="#fff" stroke-width="2.300" stroke-linecap="round"/><path d="M1153.500 772l7.500 1.200l0.500 -7.700z" fill="#fff" stroke="#141a26" stroke-width="0.800"/>
<use href="#pau" transform="translate(1238,771) scale(1.450)"/><use href="#tre" transform="translate(1238,796) scale(1.350)"/>
<use href="#np" transform="translate(1292,768.500) scale(1.200)"/><use href="#tre" transform="translate(1321.500,771) scale(1.100)"/><use href="#tre" transform="translate(1295,797) scale(1.100)"/>
<!-- row 2 -->
<use href="#np" transform="translate(1005,838) scale(0.950)"/><use href="#tre" transform="translate(1028,841) scale(0.820)"/><use href="#tre" transform="translate(1008.500,860) scale(0.820)"/><path d="M1031.500 861l14.500 8l-14.500 8z" fill="#2fce89" stroke="#141a26" stroke-width="1"/>
<use href="#np" transform="translate(1076,838) scale(0.950)"/><use href="#tre" transform="translate(1099,841) scale(0.820)"/><use href="#tre" transform="translate(1079.500,860) scale(0.820)"/><path d="M1117 861l-14.500 8l14.500 8z" fill="#2fce89" stroke="#141a26" stroke-width="1"/>
<path d="M1148 866q18 14 38 0" fill="none" stroke="#141a26" stroke-width="6" /><path d="M1148 866q18 14 38 0" fill="none" stroke="#fff" stroke-width="3.600"/><path d="M1144 862.500l9 0.500l-5.500 8z" fill="#fff" stroke="#141a26" stroke-width="1"/><path d="M1190 862.500l-9 0.500l5.500 8z" fill="#fff" stroke="#141a26" stroke-width="1"/>
<use href="#tooth" transform="translate(1166.500,851.500) scale(1.550)"/>
<g transform="translate(1237.500,866.500) scale(1.550)"><use href="#ring"/></g>
<use href="#tooth" transform="translate(1237.500,851.500) scale(1.550)"/>
<path d="M1218.900 866.500a18.600 7.440 0 0 0 37.200 0" fill="none" stroke="#141a26" stroke-width="6.400"/><path d="M1218.600 866.100a18.600 7.440 0 0 0 37.800 0" fill="none" stroke="#fff" stroke-width="3.700"/><path d="M1231.500 869.500l8.500 5.300l-8.500 5.300z" fill="#fff" stroke="#141a26" stroke-width="1"/>
<g transform="translate(1288.500,842) scale(1.550)"><use href="#blob"/></g>
<use href="#bb" transform="translate(1290,837.500) scale(1.700)"/>
<path d="M1309.500 853q-1 -8 -9 -10" fill="none" stroke="#141a26" stroke-width="4.200" stroke-linecap="round"/><path d="M1309.500 853q-1 -8 -9 -10" fill="none" stroke="#fff" stroke-width="2.300" stroke-linecap="round"/><path d="M1303 838l-6.500 4.500l6.500 5z" fill="#fff" stroke="#141a26" stroke-width="0.800"/>
<!-- bottom icons -->
<use href="#mag" transform="translate(1259,916) scale(0.900)"/><path d="M1262.700 923.200h7M1266.200 919.700v7" stroke="#fff" stroke-width="1.700"/>
<use href="#mag" transform="translate(1291,916) scale(0.900)"/><path d="M1294.700 923.200h7" stroke="#fff" stroke-width="1.700"/>
<rect x="1321.500" y="915.500" width="18.500" height="18.500" fill="#7fa8dc" stroke="#a9c7ec" stroke-width="1"/><path d="M1324 919.500h13.500M1324 923h13.500M1324 926.500h13.500M1324 930h13.500" stroke="#a9c7ec" stroke-width="1"/>
<rect x="1353.500" y="915.500" width="18.500" height="18.500" fill="#7fa8dc" stroke="#a9c7ec" stroke-width="1"/><g stroke="#7d8a99" stroke-width="0.600"><circle cx="1359.500" cy="921.500" r="3" fill="url(#lens)"/><circle cx="1366.500" cy="924" r="3" fill="url(#lens)"/><circle cx="1359.500" cy="928.500" r="3.600" fill="url(#lens)"/></g>
</svg>
</body>
</html>
